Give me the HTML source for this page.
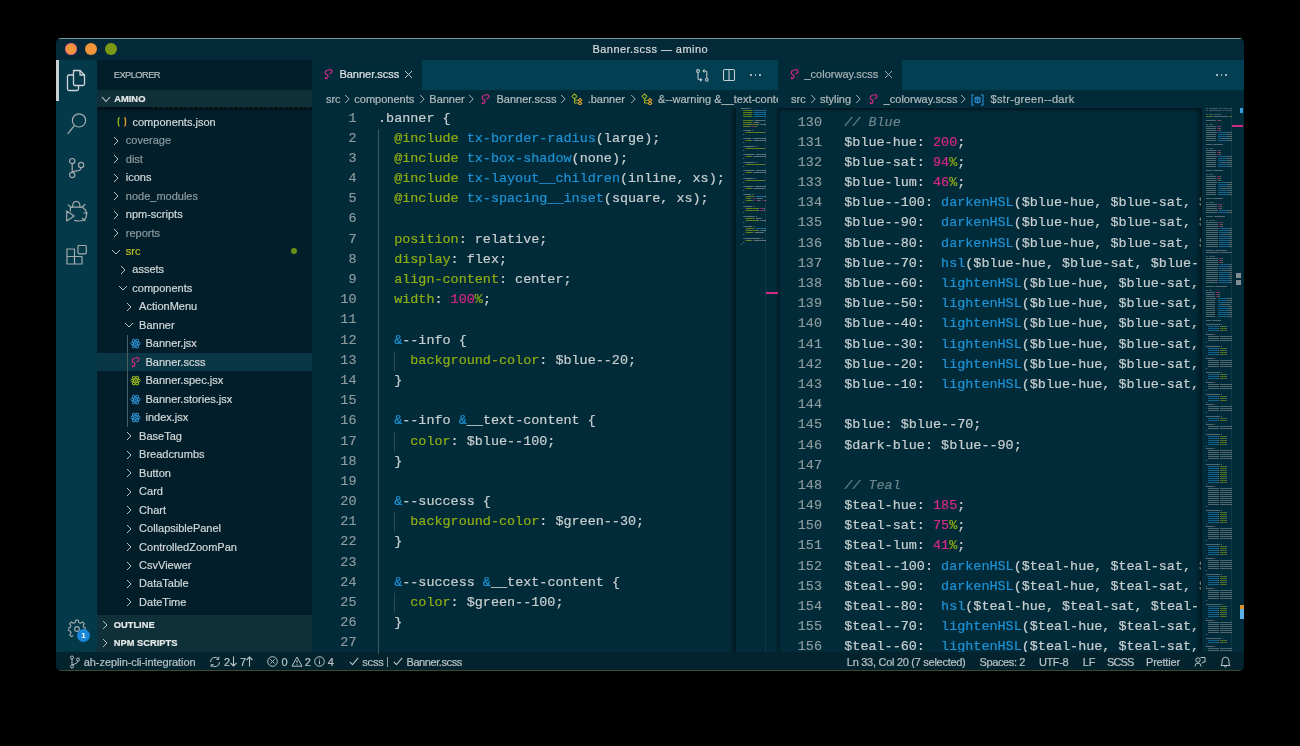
<!DOCTYPE html>
<html><head><meta charset="utf-8">
<style>
*{box-sizing:border-box;margin:0;padding:0}
html,body{width:1300px;height:746px;background:#000;overflow:hidden;font-family:"Liberation Sans",sans-serif}
.a{position:absolute}
#win{position:absolute;left:0;top:0;width:1300px;height:746px;clip-path:inset(38px 56px 75px 56px round 5px);will-change:transform}
.t{position:absolute;white-space:nowrap;font-size:11px;line-height:14px;-webkit-text-stroke:0.2px currentColor}
.code{position:absolute;font-family:"Liberation Mono",monospace;font-size:13.44px;line-height:20.19px;white-space:pre;color:#c8cfd0;-webkit-text-stroke:0.2px currentColor}
.ln{position:absolute;font-family:"Liberation Mono",monospace;font-size:13.44px;line-height:20.19px;white-space:pre;color:#8e9c9f;text-align:right;-webkit-text-stroke:0.15px currentColor}
.g{color:#8fae12}.b{color:#1e93d6}.m{color:#d22a84}.c{color:#6d858b;font-style:italic}
</style></head><body>
<div id="win">

<div class="a" style="left:56px;top:38px;width:1188px;height:633px;background:#042a39;"></div>
<div class="a" style="left:56px;top:60px;width:41px;height:592px;background:#04394a;"></div>
<div class="a" style="left:97px;top:60px;width:215px;height:592px;background:#021e2a;"></div>
<div class="a" style="left:312px;top:60px;width:466px;height:592px;background:#022b39;"></div>
<div class="a" style="left:778px;top:60px;width:466px;height:592px;background:#022b39;"></div>
<div class="a" style="left:56px;top:652px;width:1188px;height:19px;background:#03242f;"></div>
<div class="a" style="left:56px;top:38px;width:1188px;height:1px;background:#7a949b;"></div>
<div class="a" style="left:56px;top:670.4px;width:1188px;height:0.6000000000000227px;background:#3b4a2c;"></div>
<div class="a" style="left:64.5px;top:43px;width:12px;height:12px;border-radius:50%;background:#f0953a;box-shadow:inset 0 0 0 0.8px #d8508a"></div>
<div class="a" style="left:84.5px;top:43px;width:12px;height:12px;border-radius:50%;background:#f0953a"></div>
<div class="a" style="left:104.5px;top:43px;width:12px;height:12px;border-radius:50%;background:#7a9a13"></div>
<div class="t" style="left:592.5px;top:41.70px;color:#d8dcdc;font-size:11px;font-weight:normal;letter-spacing:0.45px;">Banner.scss — amino</div>
<div class="a" style="left:56px;top:60px;width:2.5px;height:41px;background:#c9d0d2;"></div>
<svg class="a" style="left:66px;top:69px" width="22" height="23" viewBox="0 0 22 23"><g fill="none" stroke="#d0d6d7" stroke-width="1.3" stroke-linejoin="round">
<path d="M7.5 1.5 H14 L18.5 6 V15 Q18.5 16.5 17 16.5 H9 Q7.5 16.5 7.5 15 V3 Q7.5 1.5 9 1.5 Z"/>
<path d="M7.5 6 H3 Q1.5 6 1.5 7.5 V20 Q1.5 21.5 3 21.5 H11 Q12.5 21.5 12.5 20 V16.5"/>
<path d="M14 1.5 V6 H18.5"/></g></svg>
<svg class="a" style="left:64px;top:110px" width="24" height="26" viewBox="0 0 24 26"><g fill="none" stroke="#a3abac" stroke-width="1.2">
<circle cx="15" cy="10.4" r="6.6"/><path d="M10.5 15.5 L3.7 23.8"/></g></svg>
<svg class="a" style="left:66px;top:154px" width="22" height="26" viewBox="0 0 22 26"><g fill="none" stroke="#a3abac" stroke-width="1.2">
<circle cx="6.2" cy="7.1" r="2.6"/><circle cx="6.2" cy="21" r="2.6"/><circle cx="15.1" cy="10.9" r="2.6"/>
<path d="M6.2 9.7 V18.4"/><path d="M15.1 13.5 Q15.1 16.5 11 16.8 Q6.5 17.2 6.2 18.4"/></g></svg>
<svg class="a" style="left:64px;top:198px" width="26" height="26" viewBox="0 0 26 26"><g fill="none" stroke="#a3abac" stroke-width="1.2" stroke-linejoin="round" stroke-linecap="round">
<path d="M8.6 9 Q8.6 3.3 12.3 3.3 Q16 3.3 16 9"/>
<path d="M6.4 12.9 V9.2 H18.2 Q22.5 11.5 22.5 16 Q22.5 21.5 18.7 22.5 Q15 23.5 10.6 22.4"/>
<path d="M2.7 12.9 L10.2 17.9 L2.7 23 Z"/>
<path d="M4.3 7 L7.3 9.4"/><path d="M20.9 6.5 L18 9.2"/><path d="M20 15 H23.3"/><path d="M18.3 20.2 L20.9 22.6"/>
</g></svg>
<svg class="a" style="left:64px;top:243px" width="26" height="24" viewBox="0 0 26 24"><g fill="none" stroke="#a3abac" stroke-width="1.2" stroke-linejoin="round">
<path d="M3 6 H10.5 V13.5 H18 V21 H3 Z"/><path d="M3 13.5 H10.5 V21"/>
<rect x="14" y="2.5" width="8.3" height="8.3" rx="1"/></g></svg>
<svg class="a" style="left:68px;top:619px" width="18" height="18" viewBox="0 0 24 24"><g fill="none" stroke="#a3abac" stroke-width="1.5" stroke-linejoin="round">
<path d="M10.3 1.5 H13.7 L14.3 4.6 L16.8 5.7 L19.4 3.9 L21.9 6.4 L20.1 9 L21.2 11.5 L24 12.1 V15.5"/>
<path d="M10.3 1.5 L9.7 4.6 L7.2 5.7 L4.6 3.9 L2.1 6.4 L3.9 9 L2.8 11.5 L0.3 12 V15.4 L3 16 L4 18.5 L2.2 21.1 L4.7 23.6 L7.3 21.8"/>
<circle cx="12" cy="13.3" r="3.2"/></g></svg>
<div class="a" style="left:77px;top:629px;width:13px;height:13px;border-radius:50%;background:#1a88d6;color:#fff;font-size:8px;font-weight:bold;line-height:13px;text-align:center">1</div>
<div class="t" style="left:113.8px;top:67.90px;color:#b3bdbe;font-size:9.3px;font-weight:normal;letter-spacing:-0.55px;">EXPLORER</div>
<div class="a" style="left:97px;top:90px;width:215px;height:17px;background:#0f2f39;"></div>
<div class="a" style="left:97px;top:107px;width:215px;height:4px;background:linear-gradient(#00131b 0,#00141c 55%,rgba(2,30,42,0))"></div>
<div class="a" style="left:153px;top:106.5px;width:159px;height:1px;background:repeating-linear-gradient(to right,rgba(140,170,30,0.35) 0 1px,transparent 1px 5px)"></div>
<svg class="a" style="left:100.5px;top:96px" width="10" height="7" viewBox="0 0 10 7"><path d="M1 1 L5 5.5 L9 1" fill="none" stroke="#c5cccd" stroke-width="1.1"/></svg>
<div class="t" style="left:114.2px;top:91.70px;color:#e4e8e8;font-size:9.4px;font-weight:bold;letter-spacing:0px;">AMINO</div>
<svg class="a" style="left:117px;top:117.0px" width="10" height="10" viewBox="0 0 10 10"><g fill="none" stroke-width="1.4"><path d="M2.6 0.8 Q1.4 0.8 1.4 2.2 V3.7 Q1.4 4.9 0.5 4.9 Q1.4 4.9 1.4 6.1 V7.6 Q1.4 9 2.6 9" stroke="#8db51a"/><path d="M7.2 0.8 Q8.4 0.8 8.4 2.2 V3.7 Q8.4 4.9 9.3 4.9 Q8.4 4.9 8.4 6.1 V7.6 Q8.4 9 7.2 9" stroke="#e09a30"/></g></svg>
<div class="t" style="left:132.5px;top:114.70px;color:#d3d9da;font-size:11px;font-weight:normal;letter-spacing:0px;">components.json</div>
<svg class="a" style="left:113.0px;top:135.7px" width="7" height="10" viewBox="0 0 7 10"><path d="M1 1 L5 5 L1 9" fill="none" stroke="#c5cccd" stroke-width="0.95"/></svg>
<div class="t" style="left:125.8px;top:133.17px;color:#8c9b9f;font-size:11px;font-weight:normal;letter-spacing:0px;">coverage</div>
<svg class="a" style="left:113.0px;top:154.1px" width="7" height="10" viewBox="0 0 7 10"><path d="M1 1 L5 5 L1 9" fill="none" stroke="#c5cccd" stroke-width="0.95"/></svg>
<div class="t" style="left:125.8px;top:151.64px;color:#8c9b9f;font-size:11px;font-weight:normal;letter-spacing:0px;">dist</div>
<svg class="a" style="left:113.0px;top:172.6px" width="7" height="10" viewBox="0 0 7 10"><path d="M1 1 L5 5 L1 9" fill="none" stroke="#c5cccd" stroke-width="0.95"/></svg>
<div class="t" style="left:125.8px;top:170.11px;color:#d3d9da;font-size:11px;font-weight:normal;letter-spacing:0px;">icons</div>
<svg class="a" style="left:113.0px;top:191.1px" width="7" height="10" viewBox="0 0 7 10"><path d="M1 1 L5 5 L1 9" fill="none" stroke="#c5cccd" stroke-width="0.95"/></svg>
<div class="t" style="left:125.8px;top:188.58px;color:#8c9b9f;font-size:11px;font-weight:normal;letter-spacing:0px;">node_modules</div>
<svg class="a" style="left:113.0px;top:209.6px" width="7" height="10" viewBox="0 0 7 10"><path d="M1 1 L5 5 L1 9" fill="none" stroke="#c5cccd" stroke-width="0.95"/></svg>
<div class="t" style="left:125.8px;top:207.05px;color:#d3d9da;font-size:11px;font-weight:normal;letter-spacing:0px;">npm-scripts</div>
<svg class="a" style="left:113.0px;top:228.0px" width="7" height="10" viewBox="0 0 7 10"><path d="M1 1 L5 5 L1 9" fill="none" stroke="#c5cccd" stroke-width="0.95"/></svg>
<div class="t" style="left:125.8px;top:225.52px;color:#8c9b9f;font-size:11px;font-weight:normal;letter-spacing:0px;">reports</div>
<svg class="a" style="left:110.5px;top:248.5px" width="10" height="7" viewBox="0 0 10 7"><path d="M1 1 L5 5 L9 1" fill="none" stroke="#c5cccd" stroke-width="0.95"/></svg>
<div class="t" style="left:125.8px;top:243.99px;color:#c2bf20;font-size:11px;font-weight:normal;letter-spacing:0px;">src</div>
<svg class="a" style="left:119.8px;top:265.0px" width="7" height="10" viewBox="0 0 7 10"><path d="M1 1 L5 5 L1 9" fill="none" stroke="#c5cccd" stroke-width="0.95"/></svg>
<div class="t" style="left:132.3px;top:262.46px;color:#d3d9da;font-size:11px;font-weight:normal;letter-spacing:0px;">assets</div>
<svg class="a" style="left:117.5px;top:285.4px" width="10" height="7" viewBox="0 0 10 7"><path d="M1 1 L5 5 L9 1" fill="none" stroke="#c5cccd" stroke-width="0.95"/></svg>
<div class="t" style="left:132.3px;top:280.93px;color:#d3d9da;font-size:11px;font-weight:normal;letter-spacing:0px;">components</div>
<svg class="a" style="left:126.3px;top:301.9px" width="7" height="10" viewBox="0 0 7 10"><path d="M1 1 L5 5 L1 9" fill="none" stroke="#c5cccd" stroke-width="0.95"/></svg>
<div class="t" style="left:139.1px;top:299.40px;color:#d3d9da;font-size:11px;font-weight:normal;letter-spacing:0px;">ActionMenu</div>
<svg class="a" style="left:124.2px;top:322.4px" width="10" height="7" viewBox="0 0 10 7"><path d="M1 1 L5 5 L9 1" fill="none" stroke="#c5cccd" stroke-width="0.95"/></svg>
<div class="t" style="left:139.1px;top:317.87px;color:#d3d9da;font-size:11px;font-weight:normal;letter-spacing:0px;">Banner</div>
<svg class="a" style="left:130.0px;top:338.3px" width="11" height="11" viewBox="0 0 11 11"><g fill="none" stroke="#2f8fcf" stroke-width="1"><ellipse cx="5.5" cy="5.5" rx="4.8" ry="1.9"/><ellipse cx="5.5" cy="5.5" rx="4.8" ry="1.9" transform="rotate(60 5.5 5.5)"/><ellipse cx="5.5" cy="5.5" rx="4.8" ry="1.9" transform="rotate(120 5.5 5.5)"/></g><circle cx="5.5" cy="5.5" r="1" fill="#2f8fcf"/></svg>
<div class="t" style="left:145.5px;top:336.34px;color:#d3d9da;font-size:11px;font-weight:normal;letter-spacing:0px;">Banner.jsx</div>
<div class="a" style="left:97px;top:353.4px;width:215px;height:17.80000000000001px;background:#0a3746;"></div>
<svg class="a" style="left:130.5px;top:356.8px" width="10" height="11" viewBox="0 0 10 11"><path d="M5.8 4.6 C7.6 4.2 8.6 2.4 7.6 1.3 C6.6 0.3 3.8 0.6 2.3 1.8 C0.8 3 0.9 4.6 2.3 5.4 C3.4 6 4.4 6.3 4 7.6 C3.7 8.7 2.6 9.8 1.8 9.7 C1.1 9.6 1.2 8.9 1.6 8.6" fill="none" stroke="#d22a84" stroke-width="1.2" stroke-linecap="round"/></svg>
<div class="t" style="left:145.5px;top:354.81px;color:#d3d9da;font-size:11px;font-weight:normal;letter-spacing:0px;">Banner.scss</div>
<svg class="a" style="left:130.0px;top:375.3px" width="11" height="11" viewBox="0 0 11 11"><g fill="none" stroke="#9cb51e" stroke-width="1"><ellipse cx="5.5" cy="5.5" rx="4.8" ry="1.9"/><ellipse cx="5.5" cy="5.5" rx="4.8" ry="1.9" transform="rotate(60 5.5 5.5)"/><ellipse cx="5.5" cy="5.5" rx="4.8" ry="1.9" transform="rotate(120 5.5 5.5)"/></g><circle cx="5.5" cy="5.5" r="1" fill="#9cb51e"/></svg>
<div class="t" style="left:145.5px;top:373.28px;color:#d3d9da;font-size:11px;font-weight:normal;letter-spacing:0px;">Banner.spec.jsx</div>
<svg class="a" style="left:130.0px;top:393.7px" width="11" height="11" viewBox="0 0 11 11"><g fill="none" stroke="#2f8fcf" stroke-width="1"><ellipse cx="5.5" cy="5.5" rx="4.8" ry="1.9"/><ellipse cx="5.5" cy="5.5" rx="4.8" ry="1.9" transform="rotate(60 5.5 5.5)"/><ellipse cx="5.5" cy="5.5" rx="4.8" ry="1.9" transform="rotate(120 5.5 5.5)"/></g><circle cx="5.5" cy="5.5" r="1" fill="#2f8fcf"/></svg>
<div class="t" style="left:145.5px;top:391.75px;color:#d3d9da;font-size:11px;font-weight:normal;letter-spacing:0px;">Banner.stories.jsx</div>
<svg class="a" style="left:130.0px;top:412.2px" width="11" height="11" viewBox="0 0 11 11"><g fill="none" stroke="#2f8fcf" stroke-width="1"><ellipse cx="5.5" cy="5.5" rx="4.8" ry="1.9"/><ellipse cx="5.5" cy="5.5" rx="4.8" ry="1.9" transform="rotate(60 5.5 5.5)"/><ellipse cx="5.5" cy="5.5" rx="4.8" ry="1.9" transform="rotate(120 5.5 5.5)"/></g><circle cx="5.5" cy="5.5" r="1" fill="#2f8fcf"/></svg>
<div class="t" style="left:145.5px;top:410.22px;color:#d3d9da;font-size:11px;font-weight:normal;letter-spacing:0px;">index.jsx</div>
<svg class="a" style="left:126.3px;top:431.2px" width="7" height="10" viewBox="0 0 7 10"><path d="M1 1 L5 5 L1 9" fill="none" stroke="#c5cccd" stroke-width="0.95"/></svg>
<div class="t" style="left:139.1px;top:428.69px;color:#d3d9da;font-size:11px;font-weight:normal;letter-spacing:0px;">BaseTag</div>
<svg class="a" style="left:126.3px;top:449.7px" width="7" height="10" viewBox="0 0 7 10"><path d="M1 1 L5 5 L1 9" fill="none" stroke="#c5cccd" stroke-width="0.95"/></svg>
<div class="t" style="left:139.1px;top:447.16px;color:#d3d9da;font-size:11px;font-weight:normal;letter-spacing:0px;">Breadcrumbs</div>
<svg class="a" style="left:126.3px;top:468.1px" width="7" height="10" viewBox="0 0 7 10"><path d="M1 1 L5 5 L1 9" fill="none" stroke="#c5cccd" stroke-width="0.95"/></svg>
<div class="t" style="left:139.1px;top:465.63px;color:#d3d9da;font-size:11px;font-weight:normal;letter-spacing:0px;">Button</div>
<svg class="a" style="left:126.3px;top:486.6px" width="7" height="10" viewBox="0 0 7 10"><path d="M1 1 L5 5 L1 9" fill="none" stroke="#c5cccd" stroke-width="0.95"/></svg>
<div class="t" style="left:139.1px;top:484.10px;color:#d3d9da;font-size:11px;font-weight:normal;letter-spacing:0px;">Card</div>
<svg class="a" style="left:126.3px;top:505.1px" width="7" height="10" viewBox="0 0 7 10"><path d="M1 1 L5 5 L1 9" fill="none" stroke="#c5cccd" stroke-width="0.95"/></svg>
<div class="t" style="left:139.1px;top:502.57px;color:#d3d9da;font-size:11px;font-weight:normal;letter-spacing:0px;">Chart</div>
<svg class="a" style="left:126.3px;top:523.5px" width="7" height="10" viewBox="0 0 7 10"><path d="M1 1 L5 5 L1 9" fill="none" stroke="#c5cccd" stroke-width="0.95"/></svg>
<div class="t" style="left:139.1px;top:521.04px;color:#d3d9da;font-size:11px;font-weight:normal;letter-spacing:0px;">CollapsiblePanel</div>
<svg class="a" style="left:126.3px;top:542.0px" width="7" height="10" viewBox="0 0 7 10"><path d="M1 1 L5 5 L1 9" fill="none" stroke="#c5cccd" stroke-width="0.95"/></svg>
<div class="t" style="left:139.1px;top:539.51px;color:#d3d9da;font-size:11px;font-weight:normal;letter-spacing:0px;">ControlledZoomPan</div>
<svg class="a" style="left:126.3px;top:560.5px" width="7" height="10" viewBox="0 0 7 10"><path d="M1 1 L5 5 L1 9" fill="none" stroke="#c5cccd" stroke-width="0.95"/></svg>
<div class="t" style="left:139.1px;top:557.98px;color:#d3d9da;font-size:11px;font-weight:normal;letter-spacing:0px;">CsvViewer</div>
<svg class="a" style="left:126.3px;top:579.0px" width="7" height="10" viewBox="0 0 7 10"><path d="M1 1 L5 5 L1 9" fill="none" stroke="#c5cccd" stroke-width="0.95"/></svg>
<div class="t" style="left:139.1px;top:576.45px;color:#d3d9da;font-size:11px;font-weight:normal;letter-spacing:0px;">DataTable</div>
<svg class="a" style="left:126.3px;top:597.4px" width="7" height="10" viewBox="0 0 7 10"><path d="M1 1 L5 5 L1 9" fill="none" stroke="#c5cccd" stroke-width="0.95"/></svg>
<div class="t" style="left:139.1px;top:594.92px;color:#d3d9da;font-size:11px;font-weight:normal;letter-spacing:0px;">DateTime</div>
<div class="a" style="left:127px;top:335px;width:1px;height:92px;background:#4a5f64;"></div>
<div class="a" style="left:291px;top:248px;width:6px;height:6px;border-radius:50%;background:#6b8f1a"></div>
<div class="a" style="left:97px;top:615px;width:215px;height:37px;background:#0f2f39;"></div>
<svg class="a" style="left:102.0px;top:619.6px" width="7" height="10" viewBox="0 0 7 10"><path d="M1 1 L5 5 L1 9" fill="none" stroke="#c5cccd" stroke-width="0.95"/></svg>
<div class="t" style="left:113.8px;top:617.80px;color:#e4e8e8;font-size:9.3px;font-weight:bold;letter-spacing:0px;">OUTLINE</div>
<svg class="a" style="left:102.0px;top:638.0px" width="7" height="10" viewBox="0 0 7 10"><path d="M1 1 L5 5 L1 9" fill="none" stroke="#c5cccd" stroke-width="0.95"/></svg>
<div class="t" style="left:113.8px;top:636.20px;color:#e4e8e8;font-size:9.3px;font-weight:bold;letter-spacing:0px;">NPM SCRIPTS</div>
<div class="a" style="left:422px;top:60px;width:356px;height:29.5px;background:#023f52;"></div>
<svg class="a" style="left:323.5px;top:69.2px" width="10" height="11" viewBox="0 0 10 11"><path d="M5.8 4.6 C7.6 4.2 8.6 2.4 7.6 1.3 C6.6 0.3 3.8 0.6 2.3 1.8 C0.8 3 0.9 4.6 2.3 5.4 C3.4 6 4.4 6.3 4 7.6 C3.7 8.7 2.6 9.8 1.8 9.7 C1.1 9.6 1.2 8.9 1.6 8.6" fill="none" stroke="#d22a84" stroke-width="1.2" stroke-linecap="round"/></svg>
<div class="t" style="left:339.4px;top:67.20px;color:#dfe3e3;font-size:11px;font-weight:normal;letter-spacing:0px;">Banner.scss</div>
<svg class="a" style="left:404.0px;top:70.2px" width="9" height="9" viewBox="0 0 9 9"><path d="M1 1 L8 8 M8 1 L1 8" fill="none" stroke="#d0d6d7" stroke-width="0.9"/></svg>
<svg class="a" style="left:695.5px;top:69px" width="13" height="13" viewBox="0 0 13 13"><g fill="none" stroke="#c5cccd" stroke-width="1.05">
<circle cx="2" cy="2" r="1.4"/><circle cx="10.8" cy="10.8" r="1.4"/><path d="M2 3.4 V9.6 Q2 10.8 3.2 10.8 H5.8 M4.3 9.3 L5.8 10.8 L4.3 12.3"/><path d="M10.8 9.4 V3.2 Q10.8 2 9.6 2 H7 M8.5 0.5 L7 2 L8.5 3.5"/></g></svg>
<svg class="a" style="left:722px;top:67.5px" width="14" height="14" viewBox="0 0 14 14"><g fill="none" stroke="#c5cccd" stroke-width="1.1">
<rect x="1.5" y="1.5" width="11" height="11" rx="1.3"/><path d="M7 1.5 V12.5"/></g></svg>
<div class="a" style="left:750px;top:74px;width:1.6000000000000227px;height:1.5999999999999943px;background:#c5cccd;border-radius:50%"></div>
<div class="a" style="left:754.5px;top:74px;width:1.6000000000000227px;height:1.5999999999999943px;background:#c5cccd;border-radius:50%"></div>
<div class="a" style="left:759px;top:74px;width:1.6000000000000227px;height:1.5999999999999943px;background:#c5cccd;border-radius:50%"></div>
<div class="t" style="left:325.9px;top:91.80px;color:#b3bdbf;font-size:11px;font-weight:normal;letter-spacing:0px;">src</div>
<svg class="a" style="left:344.0px;top:94.3px" width="7" height="10" viewBox="0 0 7 10"><path d="M1.2 1 L5.2 5 L1.2 9" fill="none" stroke="#a9b3b5" stroke-width="1"/></svg>
<div class="t" style="left:354.3px;top:91.80px;color:#b3bdbf;font-size:11px;font-weight:normal;letter-spacing:0px;">components</div>
<svg class="a" style="left:418.5px;top:94.3px" width="7" height="10" viewBox="0 0 7 10"><path d="M1.2 1 L5.2 5 L1.2 9" fill="none" stroke="#a9b3b5" stroke-width="1"/></svg>
<div class="t" style="left:429.3px;top:91.80px;color:#b3bdbf;font-size:11px;font-weight:normal;letter-spacing:0px;">Banner</div>
<svg class="a" style="left:467.5px;top:94.3px" width="7" height="10" viewBox="0 0 7 10"><path d="M1.2 1 L5.2 5 L1.2 9" fill="none" stroke="#a9b3b5" stroke-width="1"/></svg>
<svg class="a" style="left:481.0px;top:93.8px" width="10" height="11" viewBox="0 0 10 11"><path d="M5.8 4.6 C7.6 4.2 8.6 2.4 7.6 1.3 C6.6 0.3 3.8 0.6 2.3 1.8 C0.8 3 0.9 4.6 2.3 5.4 C3.4 6 4.4 6.3 4 7.6 C3.7 8.7 2.6 9.8 1.8 9.7 C1.1 9.6 1.2 8.9 1.6 8.6" fill="none" stroke="#d22a84" stroke-width="1.2" stroke-linecap="round"/></svg>
<div class="t" style="left:496.5px;top:91.80px;color:#b3bdbf;font-size:11px;font-weight:normal;letter-spacing:0px;">Banner.scss</div>
<svg class="a" style="left:560.0px;top:94.3px" width="7" height="10" viewBox="0 0 7 10"><path d="M1.2 1 L5.2 5 L1.2 9" fill="none" stroke="#a9b3b5" stroke-width="1"/></svg>
<svg class="a" style="left:571.0px;top:93.3px" width="12" height="12" viewBox="0 0 12 12"><g fill="none" stroke-width="1.05" stroke-linejoin="round"><path d="M3.5 0.8 L6 3.3 L3.5 5.8 L1 3.3 Z M3.5 5.8 V10 H6.8 M3.5 7.3 H6.8" stroke="#9fb324"/><path d="M9 5.3 L10.8 7.1 L9 8.9 L7.2 7.1 Z M9 8.6 L10.8 10.4 L9 12.2 L7.2 10.4 Z" stroke="#e0a030"/></g></svg>
<div class="t" style="left:587.7px;top:91.80px;color:#b3bdbf;font-size:11px;font-weight:normal;letter-spacing:0px;">.banner</div>
<svg class="a" style="left:629.5px;top:94.3px" width="7" height="10" viewBox="0 0 7 10"><path d="M1.2 1 L5.2 5 L1.2 9" fill="none" stroke="#a9b3b5" stroke-width="1"/></svg>
<svg class="a" style="left:640.5px;top:93.3px" width="12" height="12" viewBox="0 0 12 12"><g fill="none" stroke-width="1.05" stroke-linejoin="round"><path d="M3.5 0.8 L6 3.3 L3.5 5.8 L1 3.3 Z M3.5 5.8 V10 H6.8 M3.5 7.3 H6.8" stroke="#9fb324"/><path d="M9 5.3 L10.8 7.1 L9 8.9 L7.2 7.1 Z M9 8.6 L10.8 10.4 L9 12.2 L7.2 10.4 Z" stroke="#e0a030"/></g></svg>
<div class="a" style="left:312px;top:89px;width:466px;height:19px;overflow:hidden">
<div class="t" style="left:345.9px;top:2.80px;color:#b3bdbf;font-size:11px;font-weight:normal;letter-spacing:0px;">&amp;--warning &amp;__text-content</div>
</div>
<div class="a" style="left:902px;top:60px;width:342px;height:29.5px;background:#023f52;"></div>
<svg class="a" style="left:789.5px;top:69.2px" width="10" height="11" viewBox="0 0 10 11"><path d="M5.8 4.6 C7.6 4.2 8.6 2.4 7.6 1.3 C6.6 0.3 3.8 0.6 2.3 1.8 C0.8 3 0.9 4.6 2.3 5.4 C3.4 6 4.4 6.3 4 7.6 C3.7 8.7 2.6 9.8 1.8 9.7 C1.1 9.6 1.2 8.9 1.6 8.6" fill="none" stroke="#d22a84" stroke-width="1.2" stroke-linecap="round"/></svg>
<div class="t" style="left:804.5px;top:67.20px;color:#a9b4b6;font-size:11px;font-weight:normal;letter-spacing:0px;">_colorway.scss</div>
<svg class="a" style="left:884.0px;top:70.2px" width="9" height="9" viewBox="0 0 9 9"><path d="M1 1 L8 8 M8 1 L1 8" fill="none" stroke="#a9b4b6" stroke-width="0.9"/></svg>
<div class="a" style="left:1216px;top:74px;width:1.599999999999909px;height:1.5999999999999943px;background:#c5cccd;border-radius:50%"></div>
<div class="a" style="left:1220.5px;top:74px;width:1.599999999999909px;height:1.5999999999999943px;background:#c5cccd;border-radius:50%"></div>
<div class="a" style="left:1225px;top:74px;width:1.599999999999909px;height:1.5999999999999943px;background:#c5cccd;border-radius:50%"></div>
<div class="t" style="left:791px;top:91.80px;color:#b3bdbf;font-size:11px;font-weight:normal;letter-spacing:0px;">src</div>
<svg class="a" style="left:809.5px;top:94.3px" width="7" height="10" viewBox="0 0 7 10"><path d="M1.2 1 L5.2 5 L1.2 9" fill="none" stroke="#a9b3b5" stroke-width="1"/></svg>
<div class="t" style="left:819.9px;top:91.80px;color:#b3bdbf;font-size:11px;font-weight:normal;letter-spacing:0px;">styling</div>
<svg class="a" style="left:855.0px;top:94.3px" width="7" height="10" viewBox="0 0 7 10"><path d="M1.2 1 L5.2 5 L1.2 9" fill="none" stroke="#a9b3b5" stroke-width="1"/></svg>
<svg class="a" style="left:869.0px;top:93.8px" width="10" height="11" viewBox="0 0 10 11"><path d="M5.8 4.6 C7.6 4.2 8.6 2.4 7.6 1.3 C6.6 0.3 3.8 0.6 2.3 1.8 C0.8 3 0.9 4.6 2.3 5.4 C3.4 6 4.4 6.3 4 7.6 C3.7 8.7 2.6 9.8 1.8 9.7 C1.1 9.6 1.2 8.9 1.6 8.6" fill="none" stroke="#d22a84" stroke-width="1.2" stroke-linecap="round"/></svg>
<div class="t" style="left:883.7px;top:91.80px;color:#b3bdbf;font-size:11px;font-weight:normal;letter-spacing:0px;">_colorway.scss</div>
<svg class="a" style="left:960.0px;top:94.3px" width="7" height="10" viewBox="0 0 7 10"><path d="M1.2 1 L5.2 5 L1.2 9" fill="none" stroke="#a9b3b5" stroke-width="1"/></svg>
<svg class="a" style="left:971px;top:93.5px" width="13" height="12" viewBox="0 0 13 12"><g fill="none" stroke="#2a90d8" stroke-width="1.1"><path d="M3 1 H1 V11 H3 M10 1 H12 V11 H10"/><path d="M4 4 L6.5 2.8 L9 4 V7.8 L6.5 9 L4 7.8 Z M4 4 L6.5 5.3 L9 4 M6.5 5.3 V9"/></g></svg>
<div class="t" style="left:990.5px;top:91.80px;color:#b3bdbf;font-size:11px;font-weight:normal;letter-spacing:0.33px;">$str-green--dark</div>
<div class="ln" style="left:296.5px;top:108.5px;width:60px">1
2
3
4
5
6
7
8
9
10
11
12
13
14
15
16
17
18
19
20
21
22
23
24
25
26
27</div>
<div class="a" style="left:376px;top:108px;width:359px;height:544px;overflow:hidden">
<div class="code" style="left:2px;top:0.5px">.banner {
  <span class="g">@include</span> <span class="b">tx-border-radius</span>(large);
  <span class="g">@include</span> <span class="b">tx-box-shadow</span>(none);
  <span class="g">@include</span> <span class="b">tx-layout__children</span>(inline, xs);
  <span class="g">@include</span> <span class="b">tx-spacing__inset</span>(square, xs);

  <span class="g">position</span>: relative;
  <span class="g">display</span>: flex;
  <span class="g">align-content</span>: center;
  <span class="g">width</span>: <span class="m">100</span><span class="g">%</span>;

  <span class="b">&amp;</span>--info {
    <span class="g">background-color</span>: $blue--20;
  }

  <span class="b">&amp;</span>--info <span class="b">&amp;</span>__text-content {
    <span class="g">color</span>: $blue--100;
  }

  <span class="b">&amp;</span>--success {
    <span class="g">background-color</span>: $green--30;
  }

  <span class="b">&amp;</span>--success <span class="b">&amp;</span>__text-content {
    <span class="g">color</span>: $green--100;
  }
</div>
</div>
<div class="a" style="left:378px;top:128.69px;width:1px;height:524.94px;background:#3d5a61;"></div>
<div class="a" style="left:394px;top:350.78000000000003px;width:1px;height:20.189999999999998px;background:#2f4b52;"></div>
<div class="a" style="left:394px;top:431.54px;width:1px;height:20.189999999999998px;background:#2f4b52;"></div>
<div class="a" style="left:394px;top:512.3px;width:1px;height:20.190000000000055px;background:#2f4b52;"></div>
<div class="a" style="left:394px;top:593.0600000000001px;width:1px;height:20.18999999999994px;background:#2f4b52;"></div>
<div class="ln" style="left:762px;top:112.5px;width:60px">130
131
132
133
134
135
136
137
138
139
140
141
142
143
144
145
146
147
148
149
150
151
152
153
154
155
156</div>
<div class="a" style="left:842.3px;top:108px;width:358.70000000000005px;height:544px;overflow:hidden">
<div class="code" style="left:2px;top:4.5px"><span class="c">// Blue</span>
$blue-hue: <span class="m">200</span>;
$blue-sat: <span class="m">94</span><span class="g">%</span>;
$blue-lum: <span class="m">46</span><span class="g">%</span>;
$blue--100: <span class="b">darkenHSL</span>($blue-hue, $blue-sat, $blue-lum, 40%);
$blue--90:  <span class="b">darkenHSL</span>($blue-hue, $blue-sat, $blue-lum, 30%);
$blue--80:  <span class="b">darkenHSL</span>($blue-hue, $blue-sat, $blue-lum, 20%);
$blue--70:  <span class="b">hsl</span>($blue-hue, $blue-sat, $blue-lum);
$blue--60:  <span class="b">lightenHSL</span>($blue-hue, $blue-sat, $blue-lum, 10%);
$blue--50:  <span class="b">lightenHSL</span>($blue-hue, $blue-sat, $blue-lum, 20%);
$blue--40:  <span class="b">lightenHSL</span>($blue-hue, $blue-sat, $blue-lum, 30%);
$blue--30:  <span class="b">lightenHSL</span>($blue-hue, $blue-sat, $blue-lum, 40%);
$blue--20:  <span class="b">lightenHSL</span>($blue-hue, $blue-sat, $blue-lum, 50%);
$blue--10:  <span class="b">lightenHSL</span>($blue-hue, $blue-sat, $blue-lum, 60%);

$blue: $blue--70;
$dark-blue: $blue--90;

<span class="c">// Teal</span>
$teal-hue: <span class="m">185</span>;
$teal-sat: <span class="m">75</span><span class="g">%</span>;
$teal-lum: <span class="m">41</span><span class="g">%</span>;
$teal--100: <span class="b">darkenHSL</span>($teal-hue, $teal-sat, $teal-lum, 40%);
$teal--90:  <span class="b">darkenHSL</span>($teal-hue, $teal-sat, $teal-lum, 30%);
$teal--80:  <span class="b">hsl</span>($teal-hue, $teal-sat, $teal-lum);
$teal--70:  <span class="b">lightenHSL</span>($teal-hue, $teal-sat, $teal-lum, 10%);
$teal--60:  <span class="b">lightenHSL</span>($teal-hue, $teal-sat, $teal-lum, 20%);</div>
</div>
<div class="a" style="left:778px;top:108px;width:423px;height:4px;background:linear-gradient(#01161e,rgba(3,42,55,0))"></div>
<div class="a" style="left:729px;top:108px;width:6.5px;height:544px;background:linear-gradient(to right,rgba(0,10,15,0),rgba(0,10,15,0.55))"></div>
<div class="a" style="left:735px;top:108px;width:1px;height:544px;background:#011a22;"></div>
<div class="a" style="left:765.3px;top:108px;width:0.8000000000000682px;height:544px;background:#0d3a45;"></div>
<div class="a" style="left:775.5px;top:108px;width:5px;height:544px;background:linear-gradient(to right,rgba(0,10,15,0),rgba(0,10,15,0.5),rgba(0,10,15,0))"></div>
<div class="a" style="left:778px;top:108px;width:1px;height:544px;background:#01202a;"></div>
<div class="a" style="left:1195px;top:108px;width:6.5px;height:544px;background:linear-gradient(to right,rgba(0,10,15,0),rgba(0,10,15,0.55))"></div>
<div class="a" style="left:1201px;top:108px;width:1px;height:544px;background:#011a22;"></div>
<div class="a" style="left:1231.3px;top:108px;width:0.7999999999999545px;height:544px;background:#0d3a45;"></div>
<svg class="a" style="left:69.4px;top:655px" width="12" height="14" viewBox="0 0 12 14"><g fill="none" stroke="#b9c3c5" stroke-width="1"><circle cx="3" cy="2.5" r="1.5"/><circle cx="3" cy="11.5" r="1.5"/><circle cx="9" cy="4.5" r="1.5"/><path d="M3 4 V10 M9 6 Q9 8.5 3 10"/></g></svg>
<div class="t" style="left:83.8px;top:654.60px;color:#b9c3c5;font-size:11px;font-weight:normal;letter-spacing:-0.08px;">ah-zeplin-cli-integration</div>
<svg class="a" style="left:209px;top:656px" width="12" height="12" viewBox="0 0 12 12"><g fill="none" stroke="#b9c3c5" stroke-width="1"><path d="M1.5 6 A4.5 4.5 0 0 1 9.5 3 M10.5 6 A4.5 4.5 0 0 1 2.5 9"/><path d="M9.8 0.8 V3.3 H7.3 M2.2 11.2 V8.7 H4.7"/></g></svg>
<div class="t" style="left:224px;top:654.60px;color:#b9c3c5;font-size:11px;font-weight:normal;letter-spacing:0px;">2</div>
<div class="t" style="left:240px;top:654.60px;color:#b9c3c5;font-size:11px;font-weight:normal;letter-spacing:0px;">7</div>
<svg class="a" style="left:230px;top:655px" width="24" height="13" viewBox="0 0 24 13"><g fill="none" stroke="#b9c3c5" stroke-width="1.1"><path d="M3.5 1.5 V11 M0.5 8 L3.5 11 L6.5 8"/><path d="M19.5 2 V11.5 M16.5 5 L19.5 2 L22.5 5"/></g></svg>
<svg class="a" style="left:267px;top:656px" width="11" height="11" viewBox="0 0 11 11"><g fill="none" stroke="#b9c3c5" stroke-width="1"><circle cx="5.5" cy="5.5" r="4.8"/><path d="M3.5 3.5 L7.5 7.5 M7.5 3.5 L3.5 7.5"/></g></svg>
<div class="t" style="left:281.5px;top:654.60px;color:#b9c3c5;font-size:11px;font-weight:normal;letter-spacing:0px;">0</div>
<svg class="a" style="left:290.5px;top:655.5px" width="12" height="11" viewBox="0 0 12 11"><g fill="none" stroke="#b9c3c5" stroke-width="1"><path d="M6 1 L11 10.2 H1 Z M6 4 V7.2 M6 8.2 V9"/></g></svg>
<div class="t" style="left:304.8px;top:654.60px;color:#b9c3c5;font-size:11px;font-weight:normal;letter-spacing:0px;">2</div>
<svg class="a" style="left:313.5px;top:656px" width="11" height="11" viewBox="0 0 11 11"><g fill="none" stroke="#b9c3c5" stroke-width="1"><circle cx="5.5" cy="5.5" r="4.8"/><path d="M5.5 4.5 V8.3 M5.5 2.6 V3.5"/></g></svg>
<div class="t" style="left:327.8px;top:654.60px;color:#b9c3c5;font-size:11px;font-weight:normal;letter-spacing:0px;">4</div>
<svg class="a" style="left:348.5px;top:656.5px" width="10" height="9" viewBox="0 0 10 9"><path d="M0.8 4.8 L3.5 7.6 L9.2 0.8" fill="none" stroke="#b9c3c5" stroke-width="1.05"/></svg>
<div class="t" style="left:362.3px;top:654.60px;color:#b9c3c5;font-size:11px;font-weight:normal;letter-spacing:-0.2px;">scss</div>
<div class="a" style="left:386.7px;top:657px;width:0.9000000000000341px;height:9.5px;background:#8c999c;"></div>
<svg class="a" style="left:392.5px;top:656.5px" width="10" height="9" viewBox="0 0 10 9"><path d="M0.8 4.8 L3.5 7.6 L9.2 0.8" fill="none" stroke="#b9c3c5" stroke-width="1.05"/></svg>
<div class="t" style="left:406.5px;top:654.60px;color:#b9c3c5;font-size:11px;font-weight:normal;letter-spacing:-0.42px;">Banner.scss</div>
<div class="t" style="left:846.8px;top:654.60px;color:#b9c3c5;font-size:11px;font-weight:normal;letter-spacing:-0.28px;">Ln 33, Col 20 (7 selected)</div>
<div class="t" style="left:979.6px;top:654.60px;color:#b9c3c5;font-size:11px;font-weight:normal;letter-spacing:-0.4px;">Spaces: 2</div>
<div class="t" style="left:1039px;top:654.60px;color:#b9c3c5;font-size:11px;font-weight:normal;letter-spacing:-0.4px;">UTF-8</div>
<div class="t" style="left:1082.7px;top:654.60px;color:#b9c3c5;font-size:11px;font-weight:normal;letter-spacing:0px;">LF</div>
<div class="t" style="left:1107px;top:654.60px;color:#b9c3c5;font-size:11px;font-weight:normal;letter-spacing:-0.9px;">SCSS</div>
<div class="t" style="left:1146px;top:654.60px;color:#b9c3c5;font-size:11px;font-weight:normal;letter-spacing:-0.2px;">Prettier</div>
<svg class="a" style="left:1194px;top:656px" width="12" height="12" viewBox="0 0 12 12"><g fill="none" stroke="#b9c3c5" stroke-width="1"><circle cx="4" cy="4" r="2.2"/><path d="M1 10.5 Q1 7 4 7 Q7 7 7 10.5 M6.5 1.5 H11 V6 H9 L8 7.5"/></g></svg>
<svg class="a" style="left:1219.5px;top:655.5px" width="11" height="12" viewBox="0 0 11 12"><g fill="none" stroke="#b9c3c5" stroke-width="1"><path d="M5.5 1.2 Q2 1.2 2 5 V8 L1 9.5 H10 L9 8 V5 Q9 1.2 5.5 1.2 Z M4.3 10.5 Q5.5 11.8 6.7 10.5"/></g></svg>
<svg class="a" style="left:741px;top:108px;opacity:0.95" width="25" height="544" viewBox="0 0 25 544"><path fill="#7d8b8e" d="M0.0 0h0.9v1.0h-0.9zM1.1 0h0.9v1.0h-0.9zM2.3 0h0.9v1.0h-0.9zM3.4 0h0.9v1.0h-0.9zM4.6 0h0.9v1.0h-0.9zM5.8 0h0.9v1.0h-0.9zM6.9 0h0.9v1.0h-0.9zM9.2 0h0.9v1.0h-0.9zM11.5 12h0.9v1.0h-0.9zM13.8 12h0.9v1.0h-0.9zM14.9 12h0.9v1.0h-0.9zM16.1 12h0.9v1.0h-0.9zM17.2 12h0.9v1.0h-0.9zM18.4 12h0.9v1.0h-0.9zM19.5 12h0.9v1.0h-0.9zM20.7 12h0.9v1.0h-0.9zM21.8 12h0.9v1.0h-0.9zM23.0 12h0.9v1.0h-0.9zM10.3 14h0.9v1.0h-0.9zM12.6 14h0.9v1.0h-0.9zM13.8 14h0.9v1.0h-0.9zM14.9 14h0.9v1.0h-0.9zM16.1 14h0.9v1.0h-0.9zM17.2 14h0.9v1.0h-0.9zM17.2 16h0.9v1.0h-0.9zM19.5 16h0.9v1.0h-0.9zM20.7 16h0.9v1.0h-0.9zM21.8 16h0.9v1.0h-0.9zM23.0 16h0.9v1.0h-0.9zM24.1 16h0.9v1.0h-0.9zM8.0 18h0.9v1.0h-0.9zM14.9 18h0.9v1.0h-0.9zM3.4 22h0.9v1.0h-0.9zM4.6 22h0.9v1.0h-0.9zM5.8 22h0.9v1.0h-0.9zM6.9 22h0.9v1.0h-0.9zM8.0 22h0.9v1.0h-0.9zM9.2 22h0.9v1.0h-0.9zM11.5 22h0.9v1.0h-0.9zM23.0 24h0.9v1.0h-0.9zM2.3 26h0.9v1.0h-0.9zM3.4 30h0.9v1.0h-0.9zM4.6 30h0.9v1.0h-0.9zM5.8 30h0.9v1.0h-0.9zM6.9 30h0.9v1.0h-0.9zM8.0 30h0.9v1.0h-0.9zM9.2 30h0.9v1.0h-0.9zM12.6 30h0.9v1.0h-0.9zM13.8 30h0.9v1.0h-0.9zM14.9 30h0.9v1.0h-0.9zM16.1 30h0.9v1.0h-0.9zM17.2 30h0.9v1.0h-0.9zM18.4 30h0.9v1.0h-0.9zM19.5 30h0.9v1.0h-0.9zM20.7 30h0.9v1.0h-0.9zM21.8 30h0.9v1.0h-0.9zM23.0 30h0.9v1.0h-0.9zM24.1 30h0.9v1.0h-0.9zM10.3 32h0.9v1.0h-0.9zM12.6 32h0.9v1.0h-0.9zM13.8 32h0.9v1.0h-0.9zM14.9 32h0.9v1.0h-0.9zM16.1 32h0.9v1.0h-0.9zM17.2 32h0.9v1.0h-0.9zM18.4 32h0.9v1.0h-0.9zM19.5 32h0.9v1.0h-0.9zM20.7 32h0.9v1.0h-0.9zM21.8 32h0.9v1.0h-0.9zM23.0 32h0.9v1.0h-0.9zM24.1 32h0.9v1.0h-0.9zM2.3 34h0.9v1.0h-0.9zM3.4 38h0.9v1.0h-0.9zM4.6 38h0.9v1.0h-0.9zM5.8 38h0.9v1.0h-0.9zM6.9 38h0.9v1.0h-0.9zM8.0 38h0.9v1.0h-0.9zM9.2 38h0.9v1.0h-0.9zM10.3 38h0.9v1.0h-0.9zM11.5 38h0.9v1.0h-0.9zM12.6 38h0.9v1.0h-0.9zM14.9 38h0.9v1.0h-0.9zM23.0 40h0.9v1.0h-0.9zM2.3 42h0.9v1.0h-0.9zM3.4 46h0.9v1.0h-0.9zM4.6 46h0.9v1.0h-0.9zM5.8 46h0.9v1.0h-0.9zM6.9 46h0.9v1.0h-0.9zM8.0 46h0.9v1.0h-0.9zM9.2 46h0.9v1.0h-0.9zM10.3 46h0.9v1.0h-0.9zM11.5 46h0.9v1.0h-0.9zM12.6 46h0.9v1.0h-0.9zM16.1 46h0.9v1.0h-0.9zM17.2 46h0.9v1.0h-0.9zM18.4 46h0.9v1.0h-0.9zM19.5 46h0.9v1.0h-0.9zM20.7 46h0.9v1.0h-0.9zM21.8 46h0.9v1.0h-0.9zM23.0 46h0.9v1.0h-0.9zM24.1 46h0.9v1.0h-0.9zM10.3 48h0.9v1.0h-0.9zM12.6 48h0.9v1.0h-0.9zM13.8 48h0.9v1.0h-0.9zM14.9 48h0.9v1.0h-0.9zM16.1 48h0.9v1.0h-0.9zM17.2 48h0.9v1.0h-0.9zM18.4 48h0.9v1.0h-0.9zM19.5 48h0.9v1.0h-0.9zM20.7 48h0.9v1.0h-0.9zM21.8 48h0.9v1.0h-0.9zM23.0 48h0.9v1.0h-0.9zM24.1 48h0.9v1.0h-0.9zM2.3 50h0.9v1.0h-0.9zM3.4 54h0.9v1.0h-0.9zM4.6 54h0.9v1.0h-0.9zM5.8 54h0.9v1.0h-0.9zM6.9 54h0.9v1.0h-0.9zM8.0 54h0.9v1.0h-0.9zM9.2 54h0.9v1.0h-0.9zM10.3 54h0.9v1.0h-0.9zM11.5 54h0.9v1.0h-0.9zM12.6 54h0.9v1.0h-0.9zM14.9 54h0.9v1.0h-0.9zM23.0 56h0.9v1.0h-0.9zM2.3 58h0.9v1.0h-0.9zM3.4 62h0.9v1.0h-0.9zM4.6 62h0.9v1.0h-0.9zM5.8 62h0.9v1.0h-0.9zM6.9 62h0.9v1.0h-0.9zM8.0 62h0.9v1.0h-0.9zM9.2 62h0.9v1.0h-0.9zM10.3 62h0.9v1.0h-0.9zM11.5 62h0.9v1.0h-0.9zM12.6 62h0.9v1.0h-0.9zM16.1 62h0.9v1.0h-0.9zM17.2 62h0.9v1.0h-0.9zM18.4 62h0.9v1.0h-0.9zM19.5 62h0.9v1.0h-0.9zM20.7 62h0.9v1.0h-0.9zM21.8 62h0.9v1.0h-0.9zM23.0 62h0.9v1.0h-0.9zM24.1 62h0.9v1.0h-0.9zM10.3 64h0.9v1.0h-0.9zM12.6 64h0.9v1.0h-0.9zM13.8 64h0.9v1.0h-0.9zM14.9 64h0.9v1.0h-0.9zM16.1 64h0.9v1.0h-0.9zM17.2 64h0.9v1.0h-0.9zM18.4 64h0.9v1.0h-0.9zM19.5 64h0.9v1.0h-0.9zM20.7 64h0.9v1.0h-0.9zM21.8 64h0.9v1.0h-0.9zM23.0 64h0.9v1.0h-0.9zM24.1 64h0.9v1.0h-0.9zM2.3 66h0.9v1.0h-0.9zM3.4 70h0.9v1.0h-0.9zM4.6 70h0.9v1.0h-0.9zM5.8 70h0.9v1.0h-0.9zM6.9 70h0.9v1.0h-0.9zM8.0 70h0.9v1.0h-0.9zM9.2 70h0.9v1.0h-0.9zM10.3 70h0.9v1.0h-0.9zM11.5 70h0.9v1.0h-0.9zM13.8 70h0.9v1.0h-0.9zM23.0 72h0.9v1.0h-0.9zM2.3 74h0.9v1.0h-0.9zM3.4 78h0.9v1.0h-0.9zM4.6 78h0.9v1.0h-0.9zM5.8 78h0.9v1.0h-0.9zM6.9 78h0.9v1.0h-0.9zM8.0 78h0.9v1.0h-0.9zM9.2 78h0.9v1.0h-0.9zM10.3 78h0.9v1.0h-0.9zM11.5 78h0.9v1.0h-0.9zM14.9 78h0.9v1.0h-0.9zM16.1 78h0.9v1.0h-0.9zM17.2 78h0.9v1.0h-0.9zM18.4 78h0.9v1.0h-0.9zM19.5 78h0.9v1.0h-0.9zM20.7 78h0.9v1.0h-0.9zM21.8 78h0.9v1.0h-0.9zM23.0 78h0.9v1.0h-0.9zM24.1 78h0.9v1.0h-0.9zM10.3 80h0.9v1.0h-0.9zM12.6 80h0.9v1.0h-0.9zM13.8 80h0.9v1.0h-0.9zM14.9 80h0.9v1.0h-0.9zM16.1 80h0.9v1.0h-0.9zM17.2 80h0.9v1.0h-0.9zM18.4 80h0.9v1.0h-0.9zM19.5 80h0.9v1.0h-0.9zM20.7 80h0.9v1.0h-0.9zM21.8 80h0.9v1.0h-0.9zM23.0 80h0.9v1.0h-0.9zM2.3 82h0.9v1.0h-0.9zM3.4 86h0.9v1.0h-0.9zM4.6 86h0.9v1.0h-0.9zM5.8 86h0.9v1.0h-0.9zM6.9 86h0.9v1.0h-0.9zM8.0 86h0.9v1.0h-0.9zM9.2 86h0.9v1.0h-0.9zM11.5 86h0.9v1.0h-0.9zM23.0 88h0.9v1.0h-0.9zM24.1 88h0.9v1.0h-0.9zM9.2 90h0.9v1.0h-0.9zM16.1 90h0.9v1.0h-0.9zM17.2 90h0.9v1.0h-0.9zM18.4 90h0.9v1.0h-0.9zM19.5 90h0.9v1.0h-0.9zM20.7 90h0.9v1.0h-0.9zM11.5 92h0.9v1.0h-0.9zM17.2 92h0.9v1.0h-0.9zM18.4 92h0.9v1.0h-0.9zM24.1 92h0.9v1.0h-0.9zM2.3 94h0.9v1.0h-0.9zM3.4 98h0.9v1.0h-0.9zM4.6 98h0.9v1.0h-0.9zM5.8 98h0.9v1.0h-0.9zM6.9 98h0.9v1.0h-0.9zM8.0 98h0.9v1.0h-0.9zM9.2 98h0.9v1.0h-0.9zM10.3 98h0.9v1.0h-0.9zM12.6 98h0.9v1.0h-0.9zM17.2 100h0.9v1.0h-0.9zM23.0 100h0.9v1.0h-0.9zM17.2 102h0.9v1.0h-0.9zM20.7 102h0.9v1.0h-0.9zM23.0 102h0.9v1.0h-0.9zM2.3 104h0.9v1.0h-0.9zM3.4 108h0.9v1.0h-0.9zM4.6 108h0.9v1.0h-0.9zM5.8 108h0.9v1.0h-0.9zM6.9 108h0.9v1.0h-0.9zM8.0 108h0.9v1.0h-0.9zM9.2 108h0.9v1.0h-0.9zM10.3 108h0.9v1.0h-0.9zM11.5 108h0.9v1.0h-0.9zM12.6 108h0.9v1.0h-0.9zM14.9 108h0.9v1.0h-0.9zM12.6 110h0.9v1.0h-0.9zM14.9 110h0.9v1.0h-0.9zM16.1 110h0.9v1.0h-0.9zM17.2 110h0.9v1.0h-0.9zM18.4 110h0.9v1.0h-0.9zM19.5 110h0.9v1.0h-0.9zM17.2 112h0.9v1.0h-0.9zM19.5 112h0.9v1.0h-0.9zM20.7 112h0.9v1.0h-0.9zM21.8 112h0.9v1.0h-0.9zM23.0 112h0.9v1.0h-0.9zM24.1 112h0.9v1.0h-0.9zM2.3 114h0.9v1.0h-0.9zM3.4 118h0.9v1.0h-0.9zM4.6 118h0.9v1.0h-0.9zM5.8 118h0.9v1.0h-0.9zM6.9 118h0.9v1.0h-0.9zM8.0 118h0.9v1.0h-0.9zM9.2 118h0.9v1.0h-0.9zM10.3 118h0.9v1.0h-0.9zM12.6 118h0.9v1.0h-0.9zM17.2 122h0.9v1.0h-0.9zM19.5 122h0.9v1.0h-0.9zM20.7 122h0.9v1.0h-0.9zM21.8 122h0.9v1.0h-0.9zM23.0 122h0.9v1.0h-0.9zM24.1 122h0.9v1.0h-0.9zM11.5 124h0.9v1.0h-0.9zM13.8 124h0.9v1.0h-0.9zM14.9 124h0.9v1.0h-0.9zM16.1 124h0.9v1.0h-0.9zM17.2 124h0.9v1.0h-0.9zM18.4 124h0.9v1.0h-0.9zM19.5 124h0.9v1.0h-0.9zM20.7 124h0.9v1.0h-0.9zM21.8 124h0.9v1.0h-0.9zM2.3 126h0.9v1.0h-0.9zM3.4 130h0.9v1.0h-0.9zM4.6 130h0.9v1.0h-0.9zM5.8 130h0.9v1.0h-0.9zM6.9 130h0.9v1.0h-0.9zM8.0 130h0.9v1.0h-0.9zM9.2 130h0.9v1.0h-0.9zM10.3 130h0.9v1.0h-0.9zM11.5 130h0.9v1.0h-0.9zM12.6 130h0.9v1.0h-0.9zM13.8 130h0.9v1.0h-0.9zM14.9 130h0.9v1.0h-0.9zM16.1 130h0.9v1.0h-0.9zM17.2 130h0.9v1.0h-0.9zM18.4 130h0.9v1.0h-0.9zM20.7 130h0.9v1.0h-0.9zM10.3 132h0.9v1.0h-0.9zM12.6 132h0.9v1.0h-0.9zM13.8 132h0.9v1.0h-0.9zM14.9 132h0.9v1.0h-0.9zM16.1 132h0.9v1.0h-0.9zM17.2 132h0.9v1.0h-0.9zM18.4 132h0.9v1.0h-0.9zM19.5 132h0.9v1.0h-0.9zM20.7 132h0.9v1.0h-0.9zM21.8 132h0.9v1.0h-0.9zM23.0 132h0.9v1.0h-0.9zM24.1 132h0.9v1.0h-0.9zM2.3 134h0.9v1.0h-0.9zM0.0 136h0.9v1.0h-0.9z"/><path fill="#809a17" d="M2.3 2h0.9v1.0h-0.9zM3.4 2h0.9v1.0h-0.9zM4.6 2h0.9v1.0h-0.9zM5.8 2h0.9v1.0h-0.9zM6.9 2h0.9v1.0h-0.9zM8.0 2h0.9v1.0h-0.9zM9.2 2h0.9v1.0h-0.9zM10.3 2h0.9v1.0h-0.9zM2.3 4h0.9v1.0h-0.9zM3.4 4h0.9v1.0h-0.9zM4.6 4h0.9v1.0h-0.9zM5.8 4h0.9v1.0h-0.9zM6.9 4h0.9v1.0h-0.9zM8.0 4h0.9v1.0h-0.9zM9.2 4h0.9v1.0h-0.9zM10.3 4h0.9v1.0h-0.9zM2.3 6h0.9v1.0h-0.9zM3.4 6h0.9v1.0h-0.9zM4.6 6h0.9v1.0h-0.9zM5.8 6h0.9v1.0h-0.9zM6.9 6h0.9v1.0h-0.9zM8.0 6h0.9v1.0h-0.9zM9.2 6h0.9v1.0h-0.9zM10.3 6h0.9v1.0h-0.9zM2.3 8h0.9v1.0h-0.9zM3.4 8h0.9v1.0h-0.9zM4.6 8h0.9v1.0h-0.9zM5.8 8h0.9v1.0h-0.9zM6.9 8h0.9v1.0h-0.9zM8.0 8h0.9v1.0h-0.9zM9.2 8h0.9v1.0h-0.9zM10.3 8h0.9v1.0h-0.9zM2.3 12h0.9v1.0h-0.9zM3.4 12h0.9v1.0h-0.9zM4.6 12h0.9v1.0h-0.9zM5.8 12h0.9v1.0h-0.9zM6.9 12h0.9v1.0h-0.9zM8.0 12h0.9v1.0h-0.9zM9.2 12h0.9v1.0h-0.9zM10.3 12h0.9v1.0h-0.9zM2.3 14h0.9v1.0h-0.9zM3.4 14h0.9v1.0h-0.9zM4.6 14h0.9v1.0h-0.9zM5.8 14h0.9v1.0h-0.9zM6.9 14h0.9v1.0h-0.9zM8.0 14h0.9v1.0h-0.9zM9.2 14h0.9v1.0h-0.9zM2.3 16h0.9v1.0h-0.9zM3.4 16h0.9v1.0h-0.9zM4.6 16h0.9v1.0h-0.9zM5.8 16h0.9v1.0h-0.9zM6.9 16h0.9v1.0h-0.9zM8.0 16h0.9v1.0h-0.9zM9.2 16h0.9v1.0h-0.9zM10.3 16h0.9v1.0h-0.9zM11.5 16h0.9v1.0h-0.9zM12.6 16h0.9v1.0h-0.9zM13.8 16h0.9v1.0h-0.9zM14.9 16h0.9v1.0h-0.9zM16.1 16h0.9v1.0h-0.9zM2.3 18h0.9v1.0h-0.9zM3.4 18h0.9v1.0h-0.9zM4.6 18h0.9v1.0h-0.9zM5.8 18h0.9v1.0h-0.9zM6.9 18h0.9v1.0h-0.9zM13.8 18h0.9v1.0h-0.9zM4.6 24h0.9v1.0h-0.9zM5.8 24h0.9v1.0h-0.9zM6.9 24h0.9v1.0h-0.9zM8.0 24h0.9v1.0h-0.9zM9.2 24h0.9v1.0h-0.9zM10.3 24h0.9v1.0h-0.9zM11.5 24h0.9v1.0h-0.9zM12.6 24h0.9v1.0h-0.9zM13.8 24h0.9v1.0h-0.9zM14.9 24h0.9v1.0h-0.9zM16.1 24h0.9v1.0h-0.9zM17.2 24h0.9v1.0h-0.9zM18.4 24h0.9v1.0h-0.9zM19.5 24h0.9v1.0h-0.9zM20.7 24h0.9v1.0h-0.9zM21.8 24h0.9v1.0h-0.9zM4.6 32h0.9v1.0h-0.9zM5.8 32h0.9v1.0h-0.9zM6.9 32h0.9v1.0h-0.9zM8.0 32h0.9v1.0h-0.9zM9.2 32h0.9v1.0h-0.9zM4.6 40h0.9v1.0h-0.9zM5.8 40h0.9v1.0h-0.9zM6.9 40h0.9v1.0h-0.9zM8.0 40h0.9v1.0h-0.9zM9.2 40h0.9v1.0h-0.9zM10.3 40h0.9v1.0h-0.9zM11.5 40h0.9v1.0h-0.9zM12.6 40h0.9v1.0h-0.9zM13.8 40h0.9v1.0h-0.9zM14.9 40h0.9v1.0h-0.9zM16.1 40h0.9v1.0h-0.9zM17.2 40h0.9v1.0h-0.9zM18.4 40h0.9v1.0h-0.9zM19.5 40h0.9v1.0h-0.9zM20.7 40h0.9v1.0h-0.9zM21.8 40h0.9v1.0h-0.9zM4.6 48h0.9v1.0h-0.9zM5.8 48h0.9v1.0h-0.9zM6.9 48h0.9v1.0h-0.9zM8.0 48h0.9v1.0h-0.9zM9.2 48h0.9v1.0h-0.9zM4.6 56h0.9v1.0h-0.9zM5.8 56h0.9v1.0h-0.9zM6.9 56h0.9v1.0h-0.9zM8.0 56h0.9v1.0h-0.9zM9.2 56h0.9v1.0h-0.9zM10.3 56h0.9v1.0h-0.9zM11.5 56h0.9v1.0h-0.9zM12.6 56h0.9v1.0h-0.9zM13.8 56h0.9v1.0h-0.9zM14.9 56h0.9v1.0h-0.9zM16.1 56h0.9v1.0h-0.9zM17.2 56h0.9v1.0h-0.9zM18.4 56h0.9v1.0h-0.9zM19.5 56h0.9v1.0h-0.9zM20.7 56h0.9v1.0h-0.9zM21.8 56h0.9v1.0h-0.9zM4.6 64h0.9v1.0h-0.9zM5.8 64h0.9v1.0h-0.9zM6.9 64h0.9v1.0h-0.9zM8.0 64h0.9v1.0h-0.9zM9.2 64h0.9v1.0h-0.9zM4.6 72h0.9v1.0h-0.9zM5.8 72h0.9v1.0h-0.9zM6.9 72h0.9v1.0h-0.9zM8.0 72h0.9v1.0h-0.9zM9.2 72h0.9v1.0h-0.9zM10.3 72h0.9v1.0h-0.9zM11.5 72h0.9v1.0h-0.9zM12.6 72h0.9v1.0h-0.9zM13.8 72h0.9v1.0h-0.9zM14.9 72h0.9v1.0h-0.9zM16.1 72h0.9v1.0h-0.9zM17.2 72h0.9v1.0h-0.9zM18.4 72h0.9v1.0h-0.9zM19.5 72h0.9v1.0h-0.9zM20.7 72h0.9v1.0h-0.9zM21.8 72h0.9v1.0h-0.9zM4.6 80h0.9v1.0h-0.9zM5.8 80h0.9v1.0h-0.9zM6.9 80h0.9v1.0h-0.9zM8.0 80h0.9v1.0h-0.9zM9.2 80h0.9v1.0h-0.9zM4.6 88h0.9v1.0h-0.9zM5.8 88h0.9v1.0h-0.9zM6.9 88h0.9v1.0h-0.9zM8.0 88h0.9v1.0h-0.9zM9.2 88h0.9v1.0h-0.9zM10.3 88h0.9v1.0h-0.9zM11.5 88h0.9v1.0h-0.9zM12.6 88h0.9v1.0h-0.9zM4.6 90h0.9v1.0h-0.9zM5.8 90h0.9v1.0h-0.9zM6.9 90h0.9v1.0h-0.9zM8.0 90h0.9v1.0h-0.9zM4.6 92h0.9v1.0h-0.9zM5.8 92h0.9v1.0h-0.9zM6.9 92h0.9v1.0h-0.9zM8.0 92h0.9v1.0h-0.9zM9.2 92h0.9v1.0h-0.9zM10.3 92h0.9v1.0h-0.9zM4.6 100h0.9v1.0h-0.9zM5.8 100h0.9v1.0h-0.9zM6.9 100h0.9v1.0h-0.9zM8.0 100h0.9v1.0h-0.9zM9.2 100h0.9v1.0h-0.9zM10.3 100h0.9v1.0h-0.9zM11.5 100h0.9v1.0h-0.9zM12.6 100h0.9v1.0h-0.9zM13.8 100h0.9v1.0h-0.9zM14.9 100h0.9v1.0h-0.9zM16.1 100h0.9v1.0h-0.9zM4.6 102h0.9v1.0h-0.9zM5.8 102h0.9v1.0h-0.9zM6.9 102h0.9v1.0h-0.9zM8.0 102h0.9v1.0h-0.9zM9.2 102h0.9v1.0h-0.9zM10.3 102h0.9v1.0h-0.9zM11.5 102h0.9v1.0h-0.9zM12.6 102h0.9v1.0h-0.9zM13.8 102h0.9v1.0h-0.9zM14.9 102h0.9v1.0h-0.9zM16.1 102h0.9v1.0h-0.9zM4.6 110h0.9v1.0h-0.9zM5.8 110h0.9v1.0h-0.9zM6.9 110h0.9v1.0h-0.9zM8.0 110h0.9v1.0h-0.9zM9.2 110h0.9v1.0h-0.9zM10.3 110h0.9v1.0h-0.9zM11.5 110h0.9v1.0h-0.9zM4.6 112h0.9v1.0h-0.9zM5.8 112h0.9v1.0h-0.9zM6.9 112h0.9v1.0h-0.9zM8.0 112h0.9v1.0h-0.9zM9.2 112h0.9v1.0h-0.9zM10.3 112h0.9v1.0h-0.9zM11.5 112h0.9v1.0h-0.9zM12.6 112h0.9v1.0h-0.9zM13.8 112h0.9v1.0h-0.9zM14.9 112h0.9v1.0h-0.9zM16.1 112h0.9v1.0h-0.9zM4.6 120h0.9v1.0h-0.9zM5.8 120h0.9v1.0h-0.9zM6.9 120h0.9v1.0h-0.9zM8.0 120h0.9v1.0h-0.9zM9.2 120h0.9v1.0h-0.9zM10.3 120h0.9v1.0h-0.9zM11.5 120h0.9v1.0h-0.9zM12.6 120h0.9v1.0h-0.9zM4.6 122h0.9v1.0h-0.9zM5.8 122h0.9v1.0h-0.9zM6.9 122h0.9v1.0h-0.9zM8.0 122h0.9v1.0h-0.9zM9.2 122h0.9v1.0h-0.9zM10.3 122h0.9v1.0h-0.9zM11.5 122h0.9v1.0h-0.9zM12.6 122h0.9v1.0h-0.9zM13.8 122h0.9v1.0h-0.9zM14.9 122h0.9v1.0h-0.9zM16.1 122h0.9v1.0h-0.9zM4.6 124h0.9v1.0h-0.9zM5.8 124h0.9v1.0h-0.9zM6.9 124h0.9v1.0h-0.9zM8.0 124h0.9v1.0h-0.9zM9.2 124h0.9v1.0h-0.9zM10.3 124h0.9v1.0h-0.9zM4.6 132h0.9v1.0h-0.9zM5.8 132h0.9v1.0h-0.9zM6.9 132h0.9v1.0h-0.9zM8.0 132h0.9v1.0h-0.9zM9.2 132h0.9v1.0h-0.9z"/><path fill="#1b80ba" d="M12.6 2h0.9v1.0h-0.9zM13.8 2h0.9v1.0h-0.9zM14.9 2h0.9v1.0h-0.9zM16.1 2h0.9v1.0h-0.9zM17.2 2h0.9v1.0h-0.9zM18.4 2h0.9v1.0h-0.9zM19.5 2h0.9v1.0h-0.9zM20.7 2h0.9v1.0h-0.9zM21.8 2h0.9v1.0h-0.9zM23.0 2h0.9v1.0h-0.9zM24.1 2h0.9v1.0h-0.9zM12.6 4h0.9v1.0h-0.9zM13.8 4h0.9v1.0h-0.9zM14.9 4h0.9v1.0h-0.9zM16.1 4h0.9v1.0h-0.9zM17.2 4h0.9v1.0h-0.9zM18.4 4h0.9v1.0h-0.9zM19.5 4h0.9v1.0h-0.9zM20.7 4h0.9v1.0h-0.9zM21.8 4h0.9v1.0h-0.9zM23.0 4h0.9v1.0h-0.9zM24.1 4h0.9v1.0h-0.9zM12.6 6h0.9v1.0h-0.9zM13.8 6h0.9v1.0h-0.9zM14.9 6h0.9v1.0h-0.9zM16.1 6h0.9v1.0h-0.9zM17.2 6h0.9v1.0h-0.9zM18.4 6h0.9v1.0h-0.9zM19.5 6h0.9v1.0h-0.9zM20.7 6h0.9v1.0h-0.9zM21.8 6h0.9v1.0h-0.9zM23.0 6h0.9v1.0h-0.9zM24.1 6h0.9v1.0h-0.9zM12.6 8h0.9v1.0h-0.9zM13.8 8h0.9v1.0h-0.9zM14.9 8h0.9v1.0h-0.9zM16.1 8h0.9v1.0h-0.9zM17.2 8h0.9v1.0h-0.9zM18.4 8h0.9v1.0h-0.9zM19.5 8h0.9v1.0h-0.9zM20.7 8h0.9v1.0h-0.9zM21.8 8h0.9v1.0h-0.9zM23.0 8h0.9v1.0h-0.9zM24.1 8h0.9v1.0h-0.9zM2.3 22h0.9v1.0h-0.9zM2.3 30h0.9v1.0h-0.9zM11.5 30h0.9v1.0h-0.9zM2.3 38h0.9v1.0h-0.9zM2.3 46h0.9v1.0h-0.9zM14.9 46h0.9v1.0h-0.9zM2.3 54h0.9v1.0h-0.9zM2.3 62h0.9v1.0h-0.9zM14.9 62h0.9v1.0h-0.9zM2.3 70h0.9v1.0h-0.9zM2.3 78h0.9v1.0h-0.9zM13.8 78h0.9v1.0h-0.9zM2.3 86h0.9v1.0h-0.9zM14.9 88h0.9v1.0h-0.9zM16.1 88h0.9v1.0h-0.9zM17.2 88h0.9v1.0h-0.9zM18.4 88h0.9v1.0h-0.9zM19.5 88h0.9v1.0h-0.9zM20.7 88h0.9v1.0h-0.9zM21.8 88h0.9v1.0h-0.9zM2.3 98h0.9v1.0h-0.9zM2.3 108h0.9v1.0h-0.9zM2.3 118h0.9v1.0h-0.9zM14.9 120h0.9v1.0h-0.9zM16.1 120h0.9v1.0h-0.9zM17.2 120h0.9v1.0h-0.9zM18.4 120h0.9v1.0h-0.9zM19.5 120h0.9v1.0h-0.9zM20.7 120h0.9v1.0h-0.9zM21.8 120h0.9v1.0h-0.9zM23.0 120h0.9v1.0h-0.9zM24.1 120h0.9v1.0h-0.9zM2.3 130h0.9v1.0h-0.9z"/><path fill="#c42a7c" d="M10.3 18h0.9v1.0h-0.9zM11.5 18h0.9v1.0h-0.9zM12.6 18h0.9v1.0h-0.9zM11.5 90h0.9v1.0h-0.9zM13.8 90h0.9v1.0h-0.9zM13.8 92h0.9v1.0h-0.9zM16.1 92h0.9v1.0h-0.9zM20.7 92h0.9v1.0h-0.9zM23.0 92h0.9v1.0h-0.9zM19.5 100h0.9v1.0h-0.9zM20.7 100h0.9v1.0h-0.9zM21.8 100h0.9v1.0h-0.9zM19.5 102h0.9v1.0h-0.9zM21.8 102h0.9v1.0h-0.9z"/></svg>
<svg class="a" style="left:1206px;top:108px;opacity:0.8" width="25.5" height="544" viewBox="0 0 25.5 544"><path fill="#5c7379" d="M0.0 0h0.8v1.0h-0.8zM1.0 0h0.8v1.0h-0.8zM3.0 0h0.8v1.0h-0.8zM4.0 0h0.8v1.0h-0.8zM5.0 0h0.8v1.0h-0.8zM6.0 0h0.8v1.0h-0.8zM7.0 0h0.8v1.0h-0.8zM8.0 0h0.8v1.0h-0.8zM9.0 0h0.8v1.0h-0.8zM10.0 0h0.8v1.0h-0.8zM11.0 0h0.8v1.0h-0.8zM13.0 0h0.8v1.0h-0.8zM14.0 0h0.8v1.0h-0.8zM15.0 0h0.8v1.0h-0.8zM17.0 0h0.8v1.0h-0.8zM18.0 0h0.8v1.0h-0.8zM19.0 0h0.8v1.0h-0.8zM20.0 0h0.8v1.0h-0.8zM21.0 0h0.8v1.0h-0.8zM23.0 0h0.8v1.0h-0.8zM24.0 0h0.8v1.0h-0.8zM25.0 0h0.8v1.0h-0.8zM0.0 2h0.8v1.0h-0.8zM1.0 2h0.8v1.0h-0.8zM3.0 2h0.8v1.0h-0.8zM4.0 2h0.8v1.0h-0.8zM5.0 2h0.8v1.0h-0.8zM6.0 2h0.8v1.0h-0.8zM7.0 2h0.8v1.0h-0.8zM8.0 2h0.8v1.0h-0.8zM9.0 2h0.8v1.0h-0.8zM10.0 2h0.8v1.0h-0.8zM11.0 2h0.8v1.0h-0.8zM12.0 2h0.8v1.0h-0.8zM13.0 2h0.8v1.0h-0.8zM14.0 2h0.8v1.0h-0.8zM16.0 2h0.8v1.0h-0.8zM17.0 2h0.8v1.0h-0.8zM18.0 2h0.8v1.0h-0.8zM20.0 2h0.8v1.0h-0.8zM21.0 2h0.8v1.0h-0.8zM22.0 2h0.8v1.0h-0.8zM23.0 2h0.8v1.0h-0.8zM24.0 2h0.8v1.0h-0.8zM25.0 2h0.8v1.0h-0.8zM0.0 6h0.8v1.0h-0.8zM1.0 6h0.8v1.0h-0.8zM3.0 6h0.8v1.0h-0.8zM4.0 6h0.8v1.0h-0.8zM5.0 6h0.8v1.0h-0.8zM6.0 6h0.8v1.0h-0.8zM8.0 6h0.8v1.0h-0.8zM9.0 6h0.8v1.0h-0.8zM10.0 6h0.8v1.0h-0.8zM11.0 6h0.8v1.0h-0.8zM12.0 6h0.8v1.0h-0.8zM13.0 6h0.8v1.0h-0.8zM14.0 6h0.8v1.0h-0.8zM0.0 16h0.8v1.0h-0.8zM1.0 16h0.8v1.0h-0.8zM3.0 16h0.8v1.0h-0.8zM4.0 16h0.8v1.0h-0.8zM5.0 16h0.8v1.0h-0.8zM6.0 16h0.8v1.0h-0.8zM0.0 40h0.8v1.0h-0.8zM1.0 40h0.8v1.0h-0.8zM3.0 40h0.8v1.0h-0.8zM4.0 40h0.8v1.0h-0.8zM5.0 40h0.8v1.0h-0.8zM6.0 40h0.8v1.0h-0.8zM0.0 66h0.8v1.0h-0.8zM1.0 66h0.8v1.0h-0.8zM3.0 66h0.8v1.0h-0.8zM4.0 66h0.8v1.0h-0.8zM5.0 66h0.8v1.0h-0.8zM6.0 66h0.8v1.0h-0.8zM0.0 94h0.8v1.0h-0.8zM1.0 94h0.8v1.0h-0.8zM3.0 94h0.8v1.0h-0.8zM4.0 94h0.8v1.0h-0.8zM5.0 94h0.8v1.0h-0.8zM6.0 94h0.8v1.0h-0.8zM7.0 94h0.8v1.0h-0.8zM0.0 112h0.8v1.0h-0.8zM1.0 112h0.8v1.0h-0.8zM3.0 112h0.8v1.0h-0.8zM4.0 112h0.8v1.0h-0.8zM5.0 112h0.8v1.0h-0.8zM6.0 112h0.8v1.0h-0.8zM7.0 112h0.8v1.0h-0.8zM8.0 112h0.8v1.0h-0.8zM0.0 148h0.8v1.0h-0.8zM1.0 148h0.8v1.0h-0.8zM3.0 148h0.8v1.0h-0.8zM4.0 148h0.8v1.0h-0.8zM5.0 148h0.8v1.0h-0.8zM6.0 148h0.8v1.0h-0.8zM7.0 148h0.8v1.0h-0.8zM8.0 148h0.8v1.0h-0.8zM0.0 182h0.8v1.0h-0.8zM1.0 182h0.8v1.0h-0.8zM3.0 182h0.8v1.0h-0.8zM4.0 182h0.8v1.0h-0.8zM5.0 182h0.8v1.0h-0.8z"/><path fill="#809a17" d="M0.0 8h0.8v1.0h-0.8zM1.0 8h0.8v1.0h-0.8zM2.0 8h0.8v1.0h-0.8zM3.0 8h0.8v1.0h-0.8zM4.0 8h0.8v1.0h-0.8zM5.0 8h0.8v1.0h-0.8zM6.0 8h0.8v1.0h-0.8zM23.0 8h0.8v1.0h-0.8zM24.0 8h0.8v1.0h-0.8zM25.0 8h0.8v1.0h-0.8zM13.0 12h0.8v1.0h-0.8zM13.0 20h0.8v1.0h-0.8zM13.0 22h0.8v1.0h-0.8zM13.0 44h0.8v1.0h-0.8zM13.0 46h0.8v1.0h-0.8zM13.0 70h0.8v1.0h-0.8zM13.0 72h0.8v1.0h-0.8zM14.0 98h0.8v1.0h-0.8zM14.0 100h0.8v1.0h-0.8zM15.0 116h0.8v1.0h-0.8zM15.0 118h0.8v1.0h-0.8zM15.0 152h0.8v1.0h-0.8zM15.0 154h0.8v1.0h-0.8zM12.0 186h0.8v1.0h-0.8zM12.0 188h0.8v1.0h-0.8zM14.0 218h0.8v1.0h-0.8zM15.0 218h0.8v1.0h-0.8zM16.0 218h0.8v1.0h-0.8zM17.0 218h0.8v1.0h-0.8zM18.0 218h0.8v1.0h-0.8zM19.0 218h0.8v1.0h-0.8zM14.0 220h0.8v1.0h-0.8zM15.0 220h0.8v1.0h-0.8zM16.0 220h0.8v1.0h-0.8zM17.0 220h0.8v1.0h-0.8zM18.0 220h0.8v1.0h-0.8zM19.0 220h0.8v1.0h-0.8zM14.0 222h0.8v1.0h-0.8zM15.0 222h0.8v1.0h-0.8zM16.0 222h0.8v1.0h-0.8zM17.0 222h0.8v1.0h-0.8zM18.0 222h0.8v1.0h-0.8zM19.0 222h0.8v1.0h-0.8zM14.0 240h0.8v1.0h-0.8zM15.0 240h0.8v1.0h-0.8zM16.0 240h0.8v1.0h-0.8zM17.0 240h0.8v1.0h-0.8zM18.0 240h0.8v1.0h-0.8zM19.0 240h0.8v1.0h-0.8zM14.0 242h0.8v1.0h-0.8zM15.0 242h0.8v1.0h-0.8zM16.0 242h0.8v1.0h-0.8zM17.0 242h0.8v1.0h-0.8zM18.0 242h0.8v1.0h-0.8zM19.0 242h0.8v1.0h-0.8zM14.0 244h0.8v1.0h-0.8zM15.0 244h0.8v1.0h-0.8zM16.0 244h0.8v1.0h-0.8zM17.0 244h0.8v1.0h-0.8zM18.0 244h0.8v1.0h-0.8zM19.0 244h0.8v1.0h-0.8zM14.0 246h0.8v1.0h-0.8zM15.0 246h0.8v1.0h-0.8zM16.0 246h0.8v1.0h-0.8zM17.0 246h0.8v1.0h-0.8zM18.0 246h0.8v1.0h-0.8zM19.0 246h0.8v1.0h-0.8zM14.0 266h0.8v1.0h-0.8zM15.0 266h0.8v1.0h-0.8zM16.0 266h0.8v1.0h-0.8zM17.0 266h0.8v1.0h-0.8zM18.0 266h0.8v1.0h-0.8zM19.0 266h0.8v1.0h-0.8zM14.0 268h0.8v1.0h-0.8zM15.0 268h0.8v1.0h-0.8zM16.0 268h0.8v1.0h-0.8zM17.0 268h0.8v1.0h-0.8zM18.0 268h0.8v1.0h-0.8zM19.0 268h0.8v1.0h-0.8zM14.0 270h0.8v1.0h-0.8zM15.0 270h0.8v1.0h-0.8zM16.0 270h0.8v1.0h-0.8zM17.0 270h0.8v1.0h-0.8zM18.0 270h0.8v1.0h-0.8zM19.0 270h0.8v1.0h-0.8zM14.0 288h0.8v1.0h-0.8zM15.0 288h0.8v1.0h-0.8zM16.0 288h0.8v1.0h-0.8zM17.0 288h0.8v1.0h-0.8zM18.0 288h0.8v1.0h-0.8zM19.0 288h0.8v1.0h-0.8zM14.0 290h0.8v1.0h-0.8zM15.0 290h0.8v1.0h-0.8zM16.0 290h0.8v1.0h-0.8zM17.0 290h0.8v1.0h-0.8zM18.0 290h0.8v1.0h-0.8zM19.0 290h0.8v1.0h-0.8zM14.0 292h0.8v1.0h-0.8zM15.0 292h0.8v1.0h-0.8zM16.0 292h0.8v1.0h-0.8zM17.0 292h0.8v1.0h-0.8zM18.0 292h0.8v1.0h-0.8zM19.0 292h0.8v1.0h-0.8zM14.0 310h0.8v1.0h-0.8zM15.0 310h0.8v1.0h-0.8zM16.0 310h0.8v1.0h-0.8zM17.0 310h0.8v1.0h-0.8zM18.0 310h0.8v1.0h-0.8zM19.0 310h0.8v1.0h-0.8zM14.0 312h0.8v1.0h-0.8zM15.0 312h0.8v1.0h-0.8zM16.0 312h0.8v1.0h-0.8zM17.0 312h0.8v1.0h-0.8zM18.0 312h0.8v1.0h-0.8zM19.0 312h0.8v1.0h-0.8zM14.0 328h0.8v1.0h-0.8zM15.0 328h0.8v1.0h-0.8zM16.0 328h0.8v1.0h-0.8zM17.0 328h0.8v1.0h-0.8zM18.0 328h0.8v1.0h-0.8zM19.0 328h0.8v1.0h-0.8zM14.0 330h0.8v1.0h-0.8zM15.0 330h0.8v1.0h-0.8zM16.0 330h0.8v1.0h-0.8zM17.0 330h0.8v1.0h-0.8zM18.0 330h0.8v1.0h-0.8zM19.0 330h0.8v1.0h-0.8zM14.0 332h0.8v1.0h-0.8zM15.0 332h0.8v1.0h-0.8zM16.0 332h0.8v1.0h-0.8zM17.0 332h0.8v1.0h-0.8zM18.0 332h0.8v1.0h-0.8zM19.0 332h0.8v1.0h-0.8zM14.0 334h0.8v1.0h-0.8zM15.0 334h0.8v1.0h-0.8zM16.0 334h0.8v1.0h-0.8zM17.0 334h0.8v1.0h-0.8zM18.0 334h0.8v1.0h-0.8zM19.0 334h0.8v1.0h-0.8zM14.0 336h0.8v1.0h-0.8zM15.0 336h0.8v1.0h-0.8zM16.0 336h0.8v1.0h-0.8zM17.0 336h0.8v1.0h-0.8zM18.0 336h0.8v1.0h-0.8zM19.0 336h0.8v1.0h-0.8zM14.0 358h0.8v1.0h-0.8zM15.0 358h0.8v1.0h-0.8zM16.0 358h0.8v1.0h-0.8zM17.0 358h0.8v1.0h-0.8zM18.0 358h0.8v1.0h-0.8zM19.0 358h0.8v1.0h-0.8zM14.0 360h0.8v1.0h-0.8zM15.0 360h0.8v1.0h-0.8zM16.0 360h0.8v1.0h-0.8zM17.0 360h0.8v1.0h-0.8zM18.0 360h0.8v1.0h-0.8zM19.0 360h0.8v1.0h-0.8zM14.0 362h0.8v1.0h-0.8zM15.0 362h0.8v1.0h-0.8zM16.0 362h0.8v1.0h-0.8zM17.0 362h0.8v1.0h-0.8zM18.0 362h0.8v1.0h-0.8zM19.0 362h0.8v1.0h-0.8zM14.0 364h0.8v1.0h-0.8zM15.0 364h0.8v1.0h-0.8zM16.0 364h0.8v1.0h-0.8zM17.0 364h0.8v1.0h-0.8zM18.0 364h0.8v1.0h-0.8zM19.0 364h0.8v1.0h-0.8zM14.0 366h0.8v1.0h-0.8zM15.0 366h0.8v1.0h-0.8zM16.0 366h0.8v1.0h-0.8zM17.0 366h0.8v1.0h-0.8zM18.0 366h0.8v1.0h-0.8zM19.0 366h0.8v1.0h-0.8zM14.0 368h0.8v1.0h-0.8zM15.0 368h0.8v1.0h-0.8zM16.0 368h0.8v1.0h-0.8zM17.0 368h0.8v1.0h-0.8zM18.0 368h0.8v1.0h-0.8zM19.0 368h0.8v1.0h-0.8zM14.0 370h0.8v1.0h-0.8zM15.0 370h0.8v1.0h-0.8zM16.0 370h0.8v1.0h-0.8zM17.0 370h0.8v1.0h-0.8zM18.0 370h0.8v1.0h-0.8zM19.0 370h0.8v1.0h-0.8zM14.0 372h0.8v1.0h-0.8zM15.0 372h0.8v1.0h-0.8zM16.0 372h0.8v1.0h-0.8zM17.0 372h0.8v1.0h-0.8zM18.0 372h0.8v1.0h-0.8zM19.0 372h0.8v1.0h-0.8zM14.0 374h0.8v1.0h-0.8zM15.0 374h0.8v1.0h-0.8zM16.0 374h0.8v1.0h-0.8zM17.0 374h0.8v1.0h-0.8zM18.0 374h0.8v1.0h-0.8zM19.0 374h0.8v1.0h-0.8zM14.0 404h0.8v1.0h-0.8zM15.0 404h0.8v1.0h-0.8zM16.0 404h0.8v1.0h-0.8zM17.0 404h0.8v1.0h-0.8zM18.0 404h0.8v1.0h-0.8zM19.0 404h0.8v1.0h-0.8zM14.0 406h0.8v1.0h-0.8zM15.0 406h0.8v1.0h-0.8zM16.0 406h0.8v1.0h-0.8zM17.0 406h0.8v1.0h-0.8zM18.0 406h0.8v1.0h-0.8zM19.0 406h0.8v1.0h-0.8zM14.0 408h0.8v1.0h-0.8zM15.0 408h0.8v1.0h-0.8zM16.0 408h0.8v1.0h-0.8zM17.0 408h0.8v1.0h-0.8zM18.0 408h0.8v1.0h-0.8zM19.0 408h0.8v1.0h-0.8zM14.0 410h0.8v1.0h-0.8zM15.0 410h0.8v1.0h-0.8zM16.0 410h0.8v1.0h-0.8zM17.0 410h0.8v1.0h-0.8zM18.0 410h0.8v1.0h-0.8zM19.0 410h0.8v1.0h-0.8zM14.0 412h0.8v1.0h-0.8zM15.0 412h0.8v1.0h-0.8zM16.0 412h0.8v1.0h-0.8zM17.0 412h0.8v1.0h-0.8zM18.0 412h0.8v1.0h-0.8zM19.0 412h0.8v1.0h-0.8zM14.0 414h0.8v1.0h-0.8zM15.0 414h0.8v1.0h-0.8zM16.0 414h0.8v1.0h-0.8zM17.0 414h0.8v1.0h-0.8zM18.0 414h0.8v1.0h-0.8zM19.0 414h0.8v1.0h-0.8zM14.0 438h0.8v1.0h-0.8zM15.0 438h0.8v1.0h-0.8zM16.0 438h0.8v1.0h-0.8zM17.0 438h0.8v1.0h-0.8zM18.0 438h0.8v1.0h-0.8zM19.0 438h0.8v1.0h-0.8zM14.0 440h0.8v1.0h-0.8zM15.0 440h0.8v1.0h-0.8zM16.0 440h0.8v1.0h-0.8zM17.0 440h0.8v1.0h-0.8zM18.0 440h0.8v1.0h-0.8zM19.0 440h0.8v1.0h-0.8zM14.0 442h0.8v1.0h-0.8zM15.0 442h0.8v1.0h-0.8zM16.0 442h0.8v1.0h-0.8zM17.0 442h0.8v1.0h-0.8zM18.0 442h0.8v1.0h-0.8zM19.0 442h0.8v1.0h-0.8zM14.0 444h0.8v1.0h-0.8zM15.0 444h0.8v1.0h-0.8zM16.0 444h0.8v1.0h-0.8zM17.0 444h0.8v1.0h-0.8zM18.0 444h0.8v1.0h-0.8zM19.0 444h0.8v1.0h-0.8zM14.0 446h0.8v1.0h-0.8zM15.0 446h0.8v1.0h-0.8zM16.0 446h0.8v1.0h-0.8zM17.0 446h0.8v1.0h-0.8zM18.0 446h0.8v1.0h-0.8zM19.0 446h0.8v1.0h-0.8zM14.0 468h0.8v1.0h-0.8zM15.0 468h0.8v1.0h-0.8zM16.0 468h0.8v1.0h-0.8zM17.0 468h0.8v1.0h-0.8zM18.0 468h0.8v1.0h-0.8zM19.0 468h0.8v1.0h-0.8zM14.0 470h0.8v1.0h-0.8zM15.0 470h0.8v1.0h-0.8zM16.0 470h0.8v1.0h-0.8zM17.0 470h0.8v1.0h-0.8zM18.0 470h0.8v1.0h-0.8zM19.0 470h0.8v1.0h-0.8zM14.0 472h0.8v1.0h-0.8zM15.0 472h0.8v1.0h-0.8zM16.0 472h0.8v1.0h-0.8zM17.0 472h0.8v1.0h-0.8zM18.0 472h0.8v1.0h-0.8zM19.0 472h0.8v1.0h-0.8zM14.0 474h0.8v1.0h-0.8zM15.0 474h0.8v1.0h-0.8zM16.0 474h0.8v1.0h-0.8zM17.0 474h0.8v1.0h-0.8zM18.0 474h0.8v1.0h-0.8zM19.0 474h0.8v1.0h-0.8zM14.0 476h0.8v1.0h-0.8zM15.0 476h0.8v1.0h-0.8zM16.0 476h0.8v1.0h-0.8zM17.0 476h0.8v1.0h-0.8zM18.0 476h0.8v1.0h-0.8zM19.0 476h0.8v1.0h-0.8zM14.0 498h0.8v1.0h-0.8zM15.0 498h0.8v1.0h-0.8zM16.0 498h0.8v1.0h-0.8zM17.0 498h0.8v1.0h-0.8zM18.0 498h0.8v1.0h-0.8zM19.0 498h0.8v1.0h-0.8zM14.0 500h0.8v1.0h-0.8zM15.0 500h0.8v1.0h-0.8zM16.0 500h0.8v1.0h-0.8zM17.0 500h0.8v1.0h-0.8zM18.0 500h0.8v1.0h-0.8zM19.0 500h0.8v1.0h-0.8zM14.0 502h0.8v1.0h-0.8zM15.0 502h0.8v1.0h-0.8zM16.0 502h0.8v1.0h-0.8zM17.0 502h0.8v1.0h-0.8zM18.0 502h0.8v1.0h-0.8zM19.0 502h0.8v1.0h-0.8zM14.0 504h0.8v1.0h-0.8zM15.0 504h0.8v1.0h-0.8zM16.0 504h0.8v1.0h-0.8zM17.0 504h0.8v1.0h-0.8zM18.0 504h0.8v1.0h-0.8zM19.0 504h0.8v1.0h-0.8zM14.0 506h0.8v1.0h-0.8zM15.0 506h0.8v1.0h-0.8zM16.0 506h0.8v1.0h-0.8zM17.0 506h0.8v1.0h-0.8zM18.0 506h0.8v1.0h-0.8zM19.0 506h0.8v1.0h-0.8zM14.0 508h0.8v1.0h-0.8zM15.0 508h0.8v1.0h-0.8zM16.0 508h0.8v1.0h-0.8zM17.0 508h0.8v1.0h-0.8zM18.0 508h0.8v1.0h-0.8zM19.0 508h0.8v1.0h-0.8zM14.0 532h0.8v1.0h-0.8zM15.0 532h0.8v1.0h-0.8zM16.0 532h0.8v1.0h-0.8zM17.0 532h0.8v1.0h-0.8zM18.0 532h0.8v1.0h-0.8zM19.0 532h0.8v1.0h-0.8zM14.0 534h0.8v1.0h-0.8zM15.0 534h0.8v1.0h-0.8zM16.0 534h0.8v1.0h-0.8zM17.0 534h0.8v1.0h-0.8zM18.0 534h0.8v1.0h-0.8zM19.0 534h0.8v1.0h-0.8z"/><path fill="#7d8b8e" d="M8.0 8h0.8v1.0h-0.8zM9.0 8h0.8v1.0h-0.8zM10.0 8h0.8v1.0h-0.8zM11.0 8h0.8v1.0h-0.8zM12.0 8h0.8v1.0h-0.8zM13.0 8h0.8v1.0h-0.8zM14.0 8h0.8v1.0h-0.8zM15.0 8h0.8v1.0h-0.8zM16.0 8h0.8v1.0h-0.8zM17.0 8h0.8v1.0h-0.8zM18.0 8h0.8v1.0h-0.8zM19.0 8h0.8v1.0h-0.8zM20.0 8h0.8v1.0h-0.8zM21.0 8h0.8v1.0h-0.8zM0.0 12h0.8v1.0h-0.8zM1.0 12h0.8v1.0h-0.8zM2.0 12h0.8v1.0h-0.8zM3.0 12h0.8v1.0h-0.8zM4.0 12h0.8v1.0h-0.8zM5.0 12h0.8v1.0h-0.8zM6.0 12h0.8v1.0h-0.8zM7.0 12h0.8v1.0h-0.8zM8.0 12h0.8v1.0h-0.8zM9.0 12h0.8v1.0h-0.8zM14.0 12h0.8v1.0h-0.8zM0.0 18h0.8v1.0h-0.8zM1.0 18h0.8v1.0h-0.8zM2.0 18h0.8v1.0h-0.8zM3.0 18h0.8v1.0h-0.8zM4.0 18h0.8v1.0h-0.8zM5.0 18h0.8v1.0h-0.8zM6.0 18h0.8v1.0h-0.8zM7.0 18h0.8v1.0h-0.8zM8.0 18h0.8v1.0h-0.8zM9.0 18h0.8v1.0h-0.8zM14.0 18h0.8v1.0h-0.8zM0.0 20h0.8v1.0h-0.8zM1.0 20h0.8v1.0h-0.8zM2.0 20h0.8v1.0h-0.8zM3.0 20h0.8v1.0h-0.8zM4.0 20h0.8v1.0h-0.8zM5.0 20h0.8v1.0h-0.8zM6.0 20h0.8v1.0h-0.8zM7.0 20h0.8v1.0h-0.8zM8.0 20h0.8v1.0h-0.8zM9.0 20h0.8v1.0h-0.8zM14.0 20h0.8v1.0h-0.8zM0.0 22h0.8v1.0h-0.8zM1.0 22h0.8v1.0h-0.8zM2.0 22h0.8v1.0h-0.8zM3.0 22h0.8v1.0h-0.8zM4.0 22h0.8v1.0h-0.8zM5.0 22h0.8v1.0h-0.8zM6.0 22h0.8v1.0h-0.8zM7.0 22h0.8v1.0h-0.8zM8.0 22h0.8v1.0h-0.8zM9.0 22h0.8v1.0h-0.8zM14.0 22h0.8v1.0h-0.8zM0.0 24h0.8v1.0h-0.8zM1.0 24h0.8v1.0h-0.8zM2.0 24h0.8v1.0h-0.8zM3.0 24h0.8v1.0h-0.8zM4.0 24h0.8v1.0h-0.8zM5.0 24h0.8v1.0h-0.8zM6.0 24h0.8v1.0h-0.8zM7.0 24h0.8v1.0h-0.8zM8.0 24h0.8v1.0h-0.8zM9.0 24h0.8v1.0h-0.8zM10.0 24h0.8v1.0h-0.8zM21.0 24h0.8v1.0h-0.8zM22.0 24h0.8v1.0h-0.8zM23.0 24h0.8v1.0h-0.8zM24.0 24h0.8v1.0h-0.8zM25.0 24h0.8v1.0h-0.8zM0.0 26h0.8v1.0h-0.8zM1.0 26h0.8v1.0h-0.8zM2.0 26h0.8v1.0h-0.8zM3.0 26h0.8v1.0h-0.8zM4.0 26h0.8v1.0h-0.8zM5.0 26h0.8v1.0h-0.8zM6.0 26h0.8v1.0h-0.8zM7.0 26h0.8v1.0h-0.8zM8.0 26h0.8v1.0h-0.8zM9.0 26h0.8v1.0h-0.8zM21.0 26h0.8v1.0h-0.8zM22.0 26h0.8v1.0h-0.8zM23.0 26h0.8v1.0h-0.8zM24.0 26h0.8v1.0h-0.8zM25.0 26h0.8v1.0h-0.8zM0.0 28h0.8v1.0h-0.8zM1.0 28h0.8v1.0h-0.8zM2.0 28h0.8v1.0h-0.8zM3.0 28h0.8v1.0h-0.8zM4.0 28h0.8v1.0h-0.8zM5.0 28h0.8v1.0h-0.8zM6.0 28h0.8v1.0h-0.8zM7.0 28h0.8v1.0h-0.8zM8.0 28h0.8v1.0h-0.8zM9.0 28h0.8v1.0h-0.8zM21.0 28h0.8v1.0h-0.8zM22.0 28h0.8v1.0h-0.8zM23.0 28h0.8v1.0h-0.8zM24.0 28h0.8v1.0h-0.8zM25.0 28h0.8v1.0h-0.8zM0.0 30h0.8v1.0h-0.8zM1.0 30h0.8v1.0h-0.8zM2.0 30h0.8v1.0h-0.8zM3.0 30h0.8v1.0h-0.8zM4.0 30h0.8v1.0h-0.8zM5.0 30h0.8v1.0h-0.8zM6.0 30h0.8v1.0h-0.8zM7.0 30h0.8v1.0h-0.8zM8.0 30h0.8v1.0h-0.8zM9.0 30h0.8v1.0h-0.8zM15.0 30h0.8v1.0h-0.8zM16.0 30h0.8v1.0h-0.8zM17.0 30h0.8v1.0h-0.8zM18.0 30h0.8v1.0h-0.8zM19.0 30h0.8v1.0h-0.8zM20.0 30h0.8v1.0h-0.8zM21.0 30h0.8v1.0h-0.8zM22.0 30h0.8v1.0h-0.8zM23.0 30h0.8v1.0h-0.8zM24.0 30h0.8v1.0h-0.8zM25.0 30h0.8v1.0h-0.8zM0.0 32h0.8v1.0h-0.8zM1.0 32h0.8v1.0h-0.8zM2.0 32h0.8v1.0h-0.8zM3.0 32h0.8v1.0h-0.8zM4.0 32h0.8v1.0h-0.8zM5.0 32h0.8v1.0h-0.8zM6.0 32h0.8v1.0h-0.8zM7.0 32h0.8v1.0h-0.8zM8.0 32h0.8v1.0h-0.8zM9.0 32h0.8v1.0h-0.8zM22.0 32h0.8v1.0h-0.8zM23.0 32h0.8v1.0h-0.8zM24.0 32h0.8v1.0h-0.8zM25.0 32h0.8v1.0h-0.8zM0.0 36h0.8v1.0h-0.8zM1.0 36h0.8v1.0h-0.8zM2.0 36h0.8v1.0h-0.8zM3.0 36h0.8v1.0h-0.8zM4.0 36h0.8v1.0h-0.8zM5.0 36h0.8v1.0h-0.8zM7.0 36h0.8v1.0h-0.8zM8.0 36h0.8v1.0h-0.8zM9.0 36h0.8v1.0h-0.8zM10.0 36h0.8v1.0h-0.8zM11.0 36h0.8v1.0h-0.8zM12.0 36h0.8v1.0h-0.8zM13.0 36h0.8v1.0h-0.8zM14.0 36h0.8v1.0h-0.8zM15.0 36h0.8v1.0h-0.8zM16.0 36h0.8v1.0h-0.8zM0.0 42h0.8v1.0h-0.8zM1.0 42h0.8v1.0h-0.8zM2.0 42h0.8v1.0h-0.8zM3.0 42h0.8v1.0h-0.8zM4.0 42h0.8v1.0h-0.8zM5.0 42h0.8v1.0h-0.8zM6.0 42h0.8v1.0h-0.8zM7.0 42h0.8v1.0h-0.8zM8.0 42h0.8v1.0h-0.8zM9.0 42h0.8v1.0h-0.8zM14.0 42h0.8v1.0h-0.8zM0.0 44h0.8v1.0h-0.8zM1.0 44h0.8v1.0h-0.8zM2.0 44h0.8v1.0h-0.8zM3.0 44h0.8v1.0h-0.8zM4.0 44h0.8v1.0h-0.8zM5.0 44h0.8v1.0h-0.8zM6.0 44h0.8v1.0h-0.8zM7.0 44h0.8v1.0h-0.8zM8.0 44h0.8v1.0h-0.8zM9.0 44h0.8v1.0h-0.8zM14.0 44h0.8v1.0h-0.8zM0.0 46h0.8v1.0h-0.8zM1.0 46h0.8v1.0h-0.8zM2.0 46h0.8v1.0h-0.8zM3.0 46h0.8v1.0h-0.8zM4.0 46h0.8v1.0h-0.8zM5.0 46h0.8v1.0h-0.8zM6.0 46h0.8v1.0h-0.8zM7.0 46h0.8v1.0h-0.8zM8.0 46h0.8v1.0h-0.8zM9.0 46h0.8v1.0h-0.8zM14.0 46h0.8v1.0h-0.8zM0.0 48h0.8v1.0h-0.8zM1.0 48h0.8v1.0h-0.8zM2.0 48h0.8v1.0h-0.8zM3.0 48h0.8v1.0h-0.8zM4.0 48h0.8v1.0h-0.8zM5.0 48h0.8v1.0h-0.8zM6.0 48h0.8v1.0h-0.8zM7.0 48h0.8v1.0h-0.8zM8.0 48h0.8v1.0h-0.8zM9.0 48h0.8v1.0h-0.8zM10.0 48h0.8v1.0h-0.8zM21.0 48h0.8v1.0h-0.8zM22.0 48h0.8v1.0h-0.8zM23.0 48h0.8v1.0h-0.8zM24.0 48h0.8v1.0h-0.8zM25.0 48h0.8v1.0h-0.8zM0.0 50h0.8v1.0h-0.8zM1.0 50h0.8v1.0h-0.8zM2.0 50h0.8v1.0h-0.8zM3.0 50h0.8v1.0h-0.8zM4.0 50h0.8v1.0h-0.8zM5.0 50h0.8v1.0h-0.8zM6.0 50h0.8v1.0h-0.8zM7.0 50h0.8v1.0h-0.8zM8.0 50h0.8v1.0h-0.8zM9.0 50h0.8v1.0h-0.8zM21.0 50h0.8v1.0h-0.8zM22.0 50h0.8v1.0h-0.8zM23.0 50h0.8v1.0h-0.8zM24.0 50h0.8v1.0h-0.8zM25.0 50h0.8v1.0h-0.8zM0.0 52h0.8v1.0h-0.8zM1.0 52h0.8v1.0h-0.8zM2.0 52h0.8v1.0h-0.8zM3.0 52h0.8v1.0h-0.8zM4.0 52h0.8v1.0h-0.8zM5.0 52h0.8v1.0h-0.8zM6.0 52h0.8v1.0h-0.8zM7.0 52h0.8v1.0h-0.8zM8.0 52h0.8v1.0h-0.8zM9.0 52h0.8v1.0h-0.8zM21.0 52h0.8v1.0h-0.8zM22.0 52h0.8v1.0h-0.8zM23.0 52h0.8v1.0h-0.8zM24.0 52h0.8v1.0h-0.8zM25.0 52h0.8v1.0h-0.8zM0.0 54h0.8v1.0h-0.8zM1.0 54h0.8v1.0h-0.8zM2.0 54h0.8v1.0h-0.8zM3.0 54h0.8v1.0h-0.8zM4.0 54h0.8v1.0h-0.8zM5.0 54h0.8v1.0h-0.8zM6.0 54h0.8v1.0h-0.8zM7.0 54h0.8v1.0h-0.8zM8.0 54h0.8v1.0h-0.8zM9.0 54h0.8v1.0h-0.8zM15.0 54h0.8v1.0h-0.8zM16.0 54h0.8v1.0h-0.8zM17.0 54h0.8v1.0h-0.8zM18.0 54h0.8v1.0h-0.8zM19.0 54h0.8v1.0h-0.8zM20.0 54h0.8v1.0h-0.8zM21.0 54h0.8v1.0h-0.8zM22.0 54h0.8v1.0h-0.8zM23.0 54h0.8v1.0h-0.8zM24.0 54h0.8v1.0h-0.8zM25.0 54h0.8v1.0h-0.8zM0.0 56h0.8v1.0h-0.8zM1.0 56h0.8v1.0h-0.8zM2.0 56h0.8v1.0h-0.8zM3.0 56h0.8v1.0h-0.8zM4.0 56h0.8v1.0h-0.8zM5.0 56h0.8v1.0h-0.8zM6.0 56h0.8v1.0h-0.8zM7.0 56h0.8v1.0h-0.8zM8.0 56h0.8v1.0h-0.8zM9.0 56h0.8v1.0h-0.8zM22.0 56h0.8v1.0h-0.8zM23.0 56h0.8v1.0h-0.8zM24.0 56h0.8v1.0h-0.8zM25.0 56h0.8v1.0h-0.8zM0.0 58h0.8v1.0h-0.8zM1.0 58h0.8v1.0h-0.8zM2.0 58h0.8v1.0h-0.8zM3.0 58h0.8v1.0h-0.8zM4.0 58h0.8v1.0h-0.8zM5.0 58h0.8v1.0h-0.8zM6.0 58h0.8v1.0h-0.8zM7.0 58h0.8v1.0h-0.8zM8.0 58h0.8v1.0h-0.8zM9.0 58h0.8v1.0h-0.8zM22.0 58h0.8v1.0h-0.8zM23.0 58h0.8v1.0h-0.8zM24.0 58h0.8v1.0h-0.8zM25.0 58h0.8v1.0h-0.8zM0.0 62h0.8v1.0h-0.8zM1.0 62h0.8v1.0h-0.8zM2.0 62h0.8v1.0h-0.8zM3.0 62h0.8v1.0h-0.8zM4.0 62h0.8v1.0h-0.8zM5.0 62h0.8v1.0h-0.8zM7.0 62h0.8v1.0h-0.8zM8.0 62h0.8v1.0h-0.8zM9.0 62h0.8v1.0h-0.8zM10.0 62h0.8v1.0h-0.8zM11.0 62h0.8v1.0h-0.8zM12.0 62h0.8v1.0h-0.8zM13.0 62h0.8v1.0h-0.8zM14.0 62h0.8v1.0h-0.8zM15.0 62h0.8v1.0h-0.8zM16.0 62h0.8v1.0h-0.8zM0.0 68h0.8v1.0h-0.8zM1.0 68h0.8v1.0h-0.8zM2.0 68h0.8v1.0h-0.8zM3.0 68h0.8v1.0h-0.8zM4.0 68h0.8v1.0h-0.8zM5.0 68h0.8v1.0h-0.8zM6.0 68h0.8v1.0h-0.8zM7.0 68h0.8v1.0h-0.8zM8.0 68h0.8v1.0h-0.8zM9.0 68h0.8v1.0h-0.8zM14.0 68h0.8v1.0h-0.8zM0.0 70h0.8v1.0h-0.8zM1.0 70h0.8v1.0h-0.8zM2.0 70h0.8v1.0h-0.8zM3.0 70h0.8v1.0h-0.8zM4.0 70h0.8v1.0h-0.8zM5.0 70h0.8v1.0h-0.8zM6.0 70h0.8v1.0h-0.8zM7.0 70h0.8v1.0h-0.8zM8.0 70h0.8v1.0h-0.8zM9.0 70h0.8v1.0h-0.8zM14.0 70h0.8v1.0h-0.8zM0.0 72h0.8v1.0h-0.8zM1.0 72h0.8v1.0h-0.8zM2.0 72h0.8v1.0h-0.8zM3.0 72h0.8v1.0h-0.8zM4.0 72h0.8v1.0h-0.8zM5.0 72h0.8v1.0h-0.8zM6.0 72h0.8v1.0h-0.8zM7.0 72h0.8v1.0h-0.8zM8.0 72h0.8v1.0h-0.8zM9.0 72h0.8v1.0h-0.8zM14.0 72h0.8v1.0h-0.8zM0.0 74h0.8v1.0h-0.8zM1.0 74h0.8v1.0h-0.8zM2.0 74h0.8v1.0h-0.8zM3.0 74h0.8v1.0h-0.8zM4.0 74h0.8v1.0h-0.8zM5.0 74h0.8v1.0h-0.8zM6.0 74h0.8v1.0h-0.8zM7.0 74h0.8v1.0h-0.8zM8.0 74h0.8v1.0h-0.8zM9.0 74h0.8v1.0h-0.8zM10.0 74h0.8v1.0h-0.8zM21.0 74h0.8v1.0h-0.8zM22.0 74h0.8v1.0h-0.8zM23.0 74h0.8v1.0h-0.8zM24.0 74h0.8v1.0h-0.8zM25.0 74h0.8v1.0h-0.8zM0.0 76h0.8v1.0h-0.8zM1.0 76h0.8v1.0h-0.8zM2.0 76h0.8v1.0h-0.8zM3.0 76h0.8v1.0h-0.8zM4.0 76h0.8v1.0h-0.8zM5.0 76h0.8v1.0h-0.8zM6.0 76h0.8v1.0h-0.8zM7.0 76h0.8v1.0h-0.8zM8.0 76h0.8v1.0h-0.8zM9.0 76h0.8v1.0h-0.8zM21.0 76h0.8v1.0h-0.8zM22.0 76h0.8v1.0h-0.8zM23.0 76h0.8v1.0h-0.8zM24.0 76h0.8v1.0h-0.8zM25.0 76h0.8v1.0h-0.8zM0.0 78h0.8v1.0h-0.8zM1.0 78h0.8v1.0h-0.8zM2.0 78h0.8v1.0h-0.8zM3.0 78h0.8v1.0h-0.8zM4.0 78h0.8v1.0h-0.8zM5.0 78h0.8v1.0h-0.8zM6.0 78h0.8v1.0h-0.8zM7.0 78h0.8v1.0h-0.8zM8.0 78h0.8v1.0h-0.8zM9.0 78h0.8v1.0h-0.8zM21.0 78h0.8v1.0h-0.8zM22.0 78h0.8v1.0h-0.8zM23.0 78h0.8v1.0h-0.8zM24.0 78h0.8v1.0h-0.8zM25.0 78h0.8v1.0h-0.8zM0.0 80h0.8v1.0h-0.8zM1.0 80h0.8v1.0h-0.8zM2.0 80h0.8v1.0h-0.8zM3.0 80h0.8v1.0h-0.8zM4.0 80h0.8v1.0h-0.8zM5.0 80h0.8v1.0h-0.8zM6.0 80h0.8v1.0h-0.8zM7.0 80h0.8v1.0h-0.8zM8.0 80h0.8v1.0h-0.8zM9.0 80h0.8v1.0h-0.8zM15.0 80h0.8v1.0h-0.8zM16.0 80h0.8v1.0h-0.8zM17.0 80h0.8v1.0h-0.8zM18.0 80h0.8v1.0h-0.8zM19.0 80h0.8v1.0h-0.8zM20.0 80h0.8v1.0h-0.8zM21.0 80h0.8v1.0h-0.8zM22.0 80h0.8v1.0h-0.8zM23.0 80h0.8v1.0h-0.8zM24.0 80h0.8v1.0h-0.8zM25.0 80h0.8v1.0h-0.8zM0.0 82h0.8v1.0h-0.8zM1.0 82h0.8v1.0h-0.8zM2.0 82h0.8v1.0h-0.8zM3.0 82h0.8v1.0h-0.8zM4.0 82h0.8v1.0h-0.8zM5.0 82h0.8v1.0h-0.8zM6.0 82h0.8v1.0h-0.8zM7.0 82h0.8v1.0h-0.8zM8.0 82h0.8v1.0h-0.8zM9.0 82h0.8v1.0h-0.8zM22.0 82h0.8v1.0h-0.8zM23.0 82h0.8v1.0h-0.8zM24.0 82h0.8v1.0h-0.8zM25.0 82h0.8v1.0h-0.8zM0.0 84h0.8v1.0h-0.8zM1.0 84h0.8v1.0h-0.8zM2.0 84h0.8v1.0h-0.8zM3.0 84h0.8v1.0h-0.8zM4.0 84h0.8v1.0h-0.8zM5.0 84h0.8v1.0h-0.8zM6.0 84h0.8v1.0h-0.8zM7.0 84h0.8v1.0h-0.8zM8.0 84h0.8v1.0h-0.8zM9.0 84h0.8v1.0h-0.8zM22.0 84h0.8v1.0h-0.8zM23.0 84h0.8v1.0h-0.8zM24.0 84h0.8v1.0h-0.8zM25.0 84h0.8v1.0h-0.8zM0.0 86h0.8v1.0h-0.8zM1.0 86h0.8v1.0h-0.8zM2.0 86h0.8v1.0h-0.8zM3.0 86h0.8v1.0h-0.8zM4.0 86h0.8v1.0h-0.8zM5.0 86h0.8v1.0h-0.8zM6.0 86h0.8v1.0h-0.8zM7.0 86h0.8v1.0h-0.8zM8.0 86h0.8v1.0h-0.8zM9.0 86h0.8v1.0h-0.8zM22.0 86h0.8v1.0h-0.8zM23.0 86h0.8v1.0h-0.8zM24.0 86h0.8v1.0h-0.8zM25.0 86h0.8v1.0h-0.8zM0.0 90h0.8v1.0h-0.8zM1.0 90h0.8v1.0h-0.8zM2.0 90h0.8v1.0h-0.8zM3.0 90h0.8v1.0h-0.8zM4.0 90h0.8v1.0h-0.8zM5.0 90h0.8v1.0h-0.8zM7.0 90h0.8v1.0h-0.8zM8.0 90h0.8v1.0h-0.8zM9.0 90h0.8v1.0h-0.8zM10.0 90h0.8v1.0h-0.8zM11.0 90h0.8v1.0h-0.8zM12.0 90h0.8v1.0h-0.8zM13.0 90h0.8v1.0h-0.8zM14.0 90h0.8v1.0h-0.8zM15.0 90h0.8v1.0h-0.8zM16.0 90h0.8v1.0h-0.8zM0.0 96h0.8v1.0h-0.8zM1.0 96h0.8v1.0h-0.8zM2.0 96h0.8v1.0h-0.8zM3.0 96h0.8v1.0h-0.8zM4.0 96h0.8v1.0h-0.8zM5.0 96h0.8v1.0h-0.8zM6.0 96h0.8v1.0h-0.8zM7.0 96h0.8v1.0h-0.8zM8.0 96h0.8v1.0h-0.8zM9.0 96h0.8v1.0h-0.8zM10.0 96h0.8v1.0h-0.8zM15.0 96h0.8v1.0h-0.8zM0.0 98h0.8v1.0h-0.8zM1.0 98h0.8v1.0h-0.8zM2.0 98h0.8v1.0h-0.8zM3.0 98h0.8v1.0h-0.8zM4.0 98h0.8v1.0h-0.8zM5.0 98h0.8v1.0h-0.8zM6.0 98h0.8v1.0h-0.8zM7.0 98h0.8v1.0h-0.8zM8.0 98h0.8v1.0h-0.8zM9.0 98h0.8v1.0h-0.8zM10.0 98h0.8v1.0h-0.8zM15.0 98h0.8v1.0h-0.8zM0.0 100h0.8v1.0h-0.8zM1.0 100h0.8v1.0h-0.8zM2.0 100h0.8v1.0h-0.8zM3.0 100h0.8v1.0h-0.8zM4.0 100h0.8v1.0h-0.8zM5.0 100h0.8v1.0h-0.8zM6.0 100h0.8v1.0h-0.8zM7.0 100h0.8v1.0h-0.8zM8.0 100h0.8v1.0h-0.8zM9.0 100h0.8v1.0h-0.8zM10.0 100h0.8v1.0h-0.8zM15.0 100h0.8v1.0h-0.8zM0.0 102h0.8v1.0h-0.8zM1.0 102h0.8v1.0h-0.8zM2.0 102h0.8v1.0h-0.8zM3.0 102h0.8v1.0h-0.8zM4.0 102h0.8v1.0h-0.8zM5.0 102h0.8v1.0h-0.8zM6.0 102h0.8v1.0h-0.8zM7.0 102h0.8v1.0h-0.8zM8.0 102h0.8v1.0h-0.8zM9.0 102h0.8v1.0h-0.8zM10.0 102h0.8v1.0h-0.8zM11.0 102h0.8v1.0h-0.8zM22.0 102h0.8v1.0h-0.8zM23.0 102h0.8v1.0h-0.8zM24.0 102h0.8v1.0h-0.8zM25.0 102h0.8v1.0h-0.8zM0.0 104h0.8v1.0h-0.8zM1.0 104h0.8v1.0h-0.8zM2.0 104h0.8v1.0h-0.8zM3.0 104h0.8v1.0h-0.8zM4.0 104h0.8v1.0h-0.8zM5.0 104h0.8v1.0h-0.8zM6.0 104h0.8v1.0h-0.8zM7.0 104h0.8v1.0h-0.8zM8.0 104h0.8v1.0h-0.8zM9.0 104h0.8v1.0h-0.8zM10.0 104h0.8v1.0h-0.8zM21.0 104h0.8v1.0h-0.8zM22.0 104h0.8v1.0h-0.8zM23.0 104h0.8v1.0h-0.8zM24.0 104h0.8v1.0h-0.8zM25.0 104h0.8v1.0h-0.8zM0.0 108h0.8v1.0h-0.8zM1.0 108h0.8v1.0h-0.8zM2.0 108h0.8v1.0h-0.8zM3.0 108h0.8v1.0h-0.8zM4.0 108h0.8v1.0h-0.8zM5.0 108h0.8v1.0h-0.8zM6.0 108h0.8v1.0h-0.8zM8.0 108h0.8v1.0h-0.8zM9.0 108h0.8v1.0h-0.8zM10.0 108h0.8v1.0h-0.8zM11.0 108h0.8v1.0h-0.8zM12.0 108h0.8v1.0h-0.8zM13.0 108h0.8v1.0h-0.8zM14.0 108h0.8v1.0h-0.8zM15.0 108h0.8v1.0h-0.8zM16.0 108h0.8v1.0h-0.8zM17.0 108h0.8v1.0h-0.8zM18.0 108h0.8v1.0h-0.8zM0.0 114h0.8v1.0h-0.8zM1.0 114h0.8v1.0h-0.8zM2.0 114h0.8v1.0h-0.8zM3.0 114h0.8v1.0h-0.8zM4.0 114h0.8v1.0h-0.8zM5.0 114h0.8v1.0h-0.8zM6.0 114h0.8v1.0h-0.8zM7.0 114h0.8v1.0h-0.8zM8.0 114h0.8v1.0h-0.8zM9.0 114h0.8v1.0h-0.8zM10.0 114h0.8v1.0h-0.8zM11.0 114h0.8v1.0h-0.8zM16.0 114h0.8v1.0h-0.8zM0.0 116h0.8v1.0h-0.8zM1.0 116h0.8v1.0h-0.8zM2.0 116h0.8v1.0h-0.8zM3.0 116h0.8v1.0h-0.8zM4.0 116h0.8v1.0h-0.8zM5.0 116h0.8v1.0h-0.8zM6.0 116h0.8v1.0h-0.8zM7.0 116h0.8v1.0h-0.8zM8.0 116h0.8v1.0h-0.8zM9.0 116h0.8v1.0h-0.8zM10.0 116h0.8v1.0h-0.8zM11.0 116h0.8v1.0h-0.8zM16.0 116h0.8v1.0h-0.8zM0.0 118h0.8v1.0h-0.8zM1.0 118h0.8v1.0h-0.8zM2.0 118h0.8v1.0h-0.8zM3.0 118h0.8v1.0h-0.8zM4.0 118h0.8v1.0h-0.8zM5.0 118h0.8v1.0h-0.8zM6.0 118h0.8v1.0h-0.8zM7.0 118h0.8v1.0h-0.8zM8.0 118h0.8v1.0h-0.8zM9.0 118h0.8v1.0h-0.8zM10.0 118h0.8v1.0h-0.8zM11.0 118h0.8v1.0h-0.8zM16.0 118h0.8v1.0h-0.8zM0.0 120h0.8v1.0h-0.8zM1.0 120h0.8v1.0h-0.8zM2.0 120h0.8v1.0h-0.8zM3.0 120h0.8v1.0h-0.8zM4.0 120h0.8v1.0h-0.8zM5.0 120h0.8v1.0h-0.8zM6.0 120h0.8v1.0h-0.8zM7.0 120h0.8v1.0h-0.8zM8.0 120h0.8v1.0h-0.8zM9.0 120h0.8v1.0h-0.8zM10.0 120h0.8v1.0h-0.8zM11.0 120h0.8v1.0h-0.8zM12.0 120h0.8v1.0h-0.8zM23.0 120h0.8v1.0h-0.8zM24.0 120h0.8v1.0h-0.8zM25.0 120h0.8v1.0h-0.8zM0.0 122h0.8v1.0h-0.8zM1.0 122h0.8v1.0h-0.8zM2.0 122h0.8v1.0h-0.8zM3.0 122h0.8v1.0h-0.8zM4.0 122h0.8v1.0h-0.8zM5.0 122h0.8v1.0h-0.8zM6.0 122h0.8v1.0h-0.8zM7.0 122h0.8v1.0h-0.8zM8.0 122h0.8v1.0h-0.8zM9.0 122h0.8v1.0h-0.8zM10.0 122h0.8v1.0h-0.8zM11.0 122h0.8v1.0h-0.8zM22.0 122h0.8v1.0h-0.8zM23.0 122h0.8v1.0h-0.8zM24.0 122h0.8v1.0h-0.8zM25.0 122h0.8v1.0h-0.8zM0.0 124h0.8v1.0h-0.8zM1.0 124h0.8v1.0h-0.8zM2.0 124h0.8v1.0h-0.8zM3.0 124h0.8v1.0h-0.8zM4.0 124h0.8v1.0h-0.8zM5.0 124h0.8v1.0h-0.8zM6.0 124h0.8v1.0h-0.8zM7.0 124h0.8v1.0h-0.8zM8.0 124h0.8v1.0h-0.8zM9.0 124h0.8v1.0h-0.8zM10.0 124h0.8v1.0h-0.8zM11.0 124h0.8v1.0h-0.8zM22.0 124h0.8v1.0h-0.8zM23.0 124h0.8v1.0h-0.8zM24.0 124h0.8v1.0h-0.8zM25.0 124h0.8v1.0h-0.8zM0.0 126h0.8v1.0h-0.8zM1.0 126h0.8v1.0h-0.8zM2.0 126h0.8v1.0h-0.8zM3.0 126h0.8v1.0h-0.8zM4.0 126h0.8v1.0h-0.8zM5.0 126h0.8v1.0h-0.8zM6.0 126h0.8v1.0h-0.8zM7.0 126h0.8v1.0h-0.8zM8.0 126h0.8v1.0h-0.8zM9.0 126h0.8v1.0h-0.8zM10.0 126h0.8v1.0h-0.8zM11.0 126h0.8v1.0h-0.8zM16.0 126h0.8v1.0h-0.8zM17.0 126h0.8v1.0h-0.8zM18.0 126h0.8v1.0h-0.8zM19.0 126h0.8v1.0h-0.8zM20.0 126h0.8v1.0h-0.8zM21.0 126h0.8v1.0h-0.8zM22.0 126h0.8v1.0h-0.8zM23.0 126h0.8v1.0h-0.8zM24.0 126h0.8v1.0h-0.8zM25.0 126h0.8v1.0h-0.8zM0.0 128h0.8v1.0h-0.8zM1.0 128h0.8v1.0h-0.8zM2.0 128h0.8v1.0h-0.8zM3.0 128h0.8v1.0h-0.8zM4.0 128h0.8v1.0h-0.8zM5.0 128h0.8v1.0h-0.8zM6.0 128h0.8v1.0h-0.8zM7.0 128h0.8v1.0h-0.8zM8.0 128h0.8v1.0h-0.8zM9.0 128h0.8v1.0h-0.8zM10.0 128h0.8v1.0h-0.8zM11.0 128h0.8v1.0h-0.8zM23.0 128h0.8v1.0h-0.8zM24.0 128h0.8v1.0h-0.8zM25.0 128h0.8v1.0h-0.8zM0.0 130h0.8v1.0h-0.8zM1.0 130h0.8v1.0h-0.8zM2.0 130h0.8v1.0h-0.8zM3.0 130h0.8v1.0h-0.8zM4.0 130h0.8v1.0h-0.8zM5.0 130h0.8v1.0h-0.8zM6.0 130h0.8v1.0h-0.8zM7.0 130h0.8v1.0h-0.8zM8.0 130h0.8v1.0h-0.8zM9.0 130h0.8v1.0h-0.8zM10.0 130h0.8v1.0h-0.8zM11.0 130h0.8v1.0h-0.8zM23.0 130h0.8v1.0h-0.8zM24.0 130h0.8v1.0h-0.8zM25.0 130h0.8v1.0h-0.8zM0.0 132h0.8v1.0h-0.8zM1.0 132h0.8v1.0h-0.8zM2.0 132h0.8v1.0h-0.8zM3.0 132h0.8v1.0h-0.8zM4.0 132h0.8v1.0h-0.8zM5.0 132h0.8v1.0h-0.8zM6.0 132h0.8v1.0h-0.8zM7.0 132h0.8v1.0h-0.8zM8.0 132h0.8v1.0h-0.8zM9.0 132h0.8v1.0h-0.8zM10.0 132h0.8v1.0h-0.8zM11.0 132h0.8v1.0h-0.8zM23.0 132h0.8v1.0h-0.8zM24.0 132h0.8v1.0h-0.8zM25.0 132h0.8v1.0h-0.8zM0.0 134h0.8v1.0h-0.8zM1.0 134h0.8v1.0h-0.8zM2.0 134h0.8v1.0h-0.8zM3.0 134h0.8v1.0h-0.8zM4.0 134h0.8v1.0h-0.8zM5.0 134h0.8v1.0h-0.8zM6.0 134h0.8v1.0h-0.8zM7.0 134h0.8v1.0h-0.8zM8.0 134h0.8v1.0h-0.8zM9.0 134h0.8v1.0h-0.8zM10.0 134h0.8v1.0h-0.8zM11.0 134h0.8v1.0h-0.8zM23.0 134h0.8v1.0h-0.8zM24.0 134h0.8v1.0h-0.8zM25.0 134h0.8v1.0h-0.8zM0.0 136h0.8v1.0h-0.8zM1.0 136h0.8v1.0h-0.8zM2.0 136h0.8v1.0h-0.8zM3.0 136h0.8v1.0h-0.8zM4.0 136h0.8v1.0h-0.8zM5.0 136h0.8v1.0h-0.8zM6.0 136h0.8v1.0h-0.8zM7.0 136h0.8v1.0h-0.8zM8.0 136h0.8v1.0h-0.8zM9.0 136h0.8v1.0h-0.8zM10.0 136h0.8v1.0h-0.8zM11.0 136h0.8v1.0h-0.8zM23.0 136h0.8v1.0h-0.8zM24.0 136h0.8v1.0h-0.8zM25.0 136h0.8v1.0h-0.8zM0.0 138h0.8v1.0h-0.8zM1.0 138h0.8v1.0h-0.8zM2.0 138h0.8v1.0h-0.8zM3.0 138h0.8v1.0h-0.8zM4.0 138h0.8v1.0h-0.8zM5.0 138h0.8v1.0h-0.8zM6.0 138h0.8v1.0h-0.8zM7.0 138h0.8v1.0h-0.8zM8.0 138h0.8v1.0h-0.8zM9.0 138h0.8v1.0h-0.8zM10.0 138h0.8v1.0h-0.8zM11.0 138h0.8v1.0h-0.8zM23.0 138h0.8v1.0h-0.8zM24.0 138h0.8v1.0h-0.8zM25.0 138h0.8v1.0h-0.8zM0.0 142h0.8v1.0h-0.8zM1.0 142h0.8v1.0h-0.8zM2.0 142h0.8v1.0h-0.8zM3.0 142h0.8v1.0h-0.8zM4.0 142h0.8v1.0h-0.8zM5.0 142h0.8v1.0h-0.8zM6.0 142h0.8v1.0h-0.8zM7.0 142h0.8v1.0h-0.8zM9.0 142h0.8v1.0h-0.8zM10.0 142h0.8v1.0h-0.8zM11.0 142h0.8v1.0h-0.8zM12.0 142h0.8v1.0h-0.8zM13.0 142h0.8v1.0h-0.8zM14.0 142h0.8v1.0h-0.8zM15.0 142h0.8v1.0h-0.8zM16.0 142h0.8v1.0h-0.8zM17.0 142h0.8v1.0h-0.8zM18.0 142h0.8v1.0h-0.8zM19.0 142h0.8v1.0h-0.8zM20.0 142h0.8v1.0h-0.8zM0.0 144h0.8v1.0h-0.8zM1.0 144h0.8v1.0h-0.8zM2.0 144h0.8v1.0h-0.8zM3.0 144h0.8v1.0h-0.8zM4.0 144h0.8v1.0h-0.8zM5.0 144h0.8v1.0h-0.8zM6.0 144h0.8v1.0h-0.8zM7.0 144h0.8v1.0h-0.8zM8.0 144h0.8v1.0h-0.8zM9.0 144h0.8v1.0h-0.8zM10.0 144h0.8v1.0h-0.8zM11.0 144h0.8v1.0h-0.8zM12.0 144h0.8v1.0h-0.8zM14.0 144h0.8v1.0h-0.8zM15.0 144h0.8v1.0h-0.8zM16.0 144h0.8v1.0h-0.8zM17.0 144h0.8v1.0h-0.8zM18.0 144h0.8v1.0h-0.8zM19.0 144h0.8v1.0h-0.8zM20.0 144h0.8v1.0h-0.8zM21.0 144h0.8v1.0h-0.8zM22.0 144h0.8v1.0h-0.8zM23.0 144h0.8v1.0h-0.8zM24.0 144h0.8v1.0h-0.8zM25.0 144h0.8v1.0h-0.8zM0.0 150h0.8v1.0h-0.8zM1.0 150h0.8v1.0h-0.8zM2.0 150h0.8v1.0h-0.8zM3.0 150h0.8v1.0h-0.8zM4.0 150h0.8v1.0h-0.8zM5.0 150h0.8v1.0h-0.8zM6.0 150h0.8v1.0h-0.8zM7.0 150h0.8v1.0h-0.8zM8.0 150h0.8v1.0h-0.8zM9.0 150h0.8v1.0h-0.8zM10.0 150h0.8v1.0h-0.8zM11.0 150h0.8v1.0h-0.8zM16.0 150h0.8v1.0h-0.8zM0.0 152h0.8v1.0h-0.8zM1.0 152h0.8v1.0h-0.8zM2.0 152h0.8v1.0h-0.8zM3.0 152h0.8v1.0h-0.8zM4.0 152h0.8v1.0h-0.8zM5.0 152h0.8v1.0h-0.8zM6.0 152h0.8v1.0h-0.8zM7.0 152h0.8v1.0h-0.8zM8.0 152h0.8v1.0h-0.8zM9.0 152h0.8v1.0h-0.8zM10.0 152h0.8v1.0h-0.8zM11.0 152h0.8v1.0h-0.8zM16.0 152h0.8v1.0h-0.8zM0.0 154h0.8v1.0h-0.8zM1.0 154h0.8v1.0h-0.8zM2.0 154h0.8v1.0h-0.8zM3.0 154h0.8v1.0h-0.8zM4.0 154h0.8v1.0h-0.8zM5.0 154h0.8v1.0h-0.8zM6.0 154h0.8v1.0h-0.8zM7.0 154h0.8v1.0h-0.8zM8.0 154h0.8v1.0h-0.8zM9.0 154h0.8v1.0h-0.8zM10.0 154h0.8v1.0h-0.8zM11.0 154h0.8v1.0h-0.8zM16.0 154h0.8v1.0h-0.8zM0.0 156h0.8v1.0h-0.8zM1.0 156h0.8v1.0h-0.8zM2.0 156h0.8v1.0h-0.8zM3.0 156h0.8v1.0h-0.8zM4.0 156h0.8v1.0h-0.8zM5.0 156h0.8v1.0h-0.8zM6.0 156h0.8v1.0h-0.8zM7.0 156h0.8v1.0h-0.8zM8.0 156h0.8v1.0h-0.8zM9.0 156h0.8v1.0h-0.8zM10.0 156h0.8v1.0h-0.8zM11.0 156h0.8v1.0h-0.8zM12.0 156h0.8v1.0h-0.8zM23.0 156h0.8v1.0h-0.8zM24.0 156h0.8v1.0h-0.8zM25.0 156h0.8v1.0h-0.8zM0.0 158h0.8v1.0h-0.8zM1.0 158h0.8v1.0h-0.8zM2.0 158h0.8v1.0h-0.8zM3.0 158h0.8v1.0h-0.8zM4.0 158h0.8v1.0h-0.8zM5.0 158h0.8v1.0h-0.8zM6.0 158h0.8v1.0h-0.8zM7.0 158h0.8v1.0h-0.8zM8.0 158h0.8v1.0h-0.8zM9.0 158h0.8v1.0h-0.8zM10.0 158h0.8v1.0h-0.8zM11.0 158h0.8v1.0h-0.8zM22.0 158h0.8v1.0h-0.8zM23.0 158h0.8v1.0h-0.8zM24.0 158h0.8v1.0h-0.8zM25.0 158h0.8v1.0h-0.8zM0.0 160h0.8v1.0h-0.8zM1.0 160h0.8v1.0h-0.8zM2.0 160h0.8v1.0h-0.8zM3.0 160h0.8v1.0h-0.8zM4.0 160h0.8v1.0h-0.8zM5.0 160h0.8v1.0h-0.8zM6.0 160h0.8v1.0h-0.8zM7.0 160h0.8v1.0h-0.8zM8.0 160h0.8v1.0h-0.8zM9.0 160h0.8v1.0h-0.8zM10.0 160h0.8v1.0h-0.8zM11.0 160h0.8v1.0h-0.8zM22.0 160h0.8v1.0h-0.8zM23.0 160h0.8v1.0h-0.8zM24.0 160h0.8v1.0h-0.8zM25.0 160h0.8v1.0h-0.8zM0.0 162h0.8v1.0h-0.8zM1.0 162h0.8v1.0h-0.8zM2.0 162h0.8v1.0h-0.8zM3.0 162h0.8v1.0h-0.8zM4.0 162h0.8v1.0h-0.8zM5.0 162h0.8v1.0h-0.8zM6.0 162h0.8v1.0h-0.8zM7.0 162h0.8v1.0h-0.8zM8.0 162h0.8v1.0h-0.8zM9.0 162h0.8v1.0h-0.8zM10.0 162h0.8v1.0h-0.8zM11.0 162h0.8v1.0h-0.8zM16.0 162h0.8v1.0h-0.8zM17.0 162h0.8v1.0h-0.8zM18.0 162h0.8v1.0h-0.8zM19.0 162h0.8v1.0h-0.8zM20.0 162h0.8v1.0h-0.8zM21.0 162h0.8v1.0h-0.8zM22.0 162h0.8v1.0h-0.8zM23.0 162h0.8v1.0h-0.8zM24.0 162h0.8v1.0h-0.8zM25.0 162h0.8v1.0h-0.8zM0.0 164h0.8v1.0h-0.8zM1.0 164h0.8v1.0h-0.8zM2.0 164h0.8v1.0h-0.8zM3.0 164h0.8v1.0h-0.8zM4.0 164h0.8v1.0h-0.8zM5.0 164h0.8v1.0h-0.8zM6.0 164h0.8v1.0h-0.8zM7.0 164h0.8v1.0h-0.8zM8.0 164h0.8v1.0h-0.8zM9.0 164h0.8v1.0h-0.8zM10.0 164h0.8v1.0h-0.8zM11.0 164h0.8v1.0h-0.8zM23.0 164h0.8v1.0h-0.8zM24.0 164h0.8v1.0h-0.8zM25.0 164h0.8v1.0h-0.8zM0.0 166h0.8v1.0h-0.8zM1.0 166h0.8v1.0h-0.8zM2.0 166h0.8v1.0h-0.8zM3.0 166h0.8v1.0h-0.8zM4.0 166h0.8v1.0h-0.8zM5.0 166h0.8v1.0h-0.8zM6.0 166h0.8v1.0h-0.8zM7.0 166h0.8v1.0h-0.8zM8.0 166h0.8v1.0h-0.8zM9.0 166h0.8v1.0h-0.8zM10.0 166h0.8v1.0h-0.8zM11.0 166h0.8v1.0h-0.8zM23.0 166h0.8v1.0h-0.8zM24.0 166h0.8v1.0h-0.8zM25.0 166h0.8v1.0h-0.8zM0.0 168h0.8v1.0h-0.8zM1.0 168h0.8v1.0h-0.8zM2.0 168h0.8v1.0h-0.8zM3.0 168h0.8v1.0h-0.8zM4.0 168h0.8v1.0h-0.8zM5.0 168h0.8v1.0h-0.8zM6.0 168h0.8v1.0h-0.8zM7.0 168h0.8v1.0h-0.8zM8.0 168h0.8v1.0h-0.8zM9.0 168h0.8v1.0h-0.8zM10.0 168h0.8v1.0h-0.8zM11.0 168h0.8v1.0h-0.8zM23.0 168h0.8v1.0h-0.8zM24.0 168h0.8v1.0h-0.8zM25.0 168h0.8v1.0h-0.8zM0.0 170h0.8v1.0h-0.8zM1.0 170h0.8v1.0h-0.8zM2.0 170h0.8v1.0h-0.8zM3.0 170h0.8v1.0h-0.8zM4.0 170h0.8v1.0h-0.8zM5.0 170h0.8v1.0h-0.8zM6.0 170h0.8v1.0h-0.8zM7.0 170h0.8v1.0h-0.8zM8.0 170h0.8v1.0h-0.8zM9.0 170h0.8v1.0h-0.8zM10.0 170h0.8v1.0h-0.8zM11.0 170h0.8v1.0h-0.8zM23.0 170h0.8v1.0h-0.8zM24.0 170h0.8v1.0h-0.8zM25.0 170h0.8v1.0h-0.8zM0.0 172h0.8v1.0h-0.8zM1.0 172h0.8v1.0h-0.8zM2.0 172h0.8v1.0h-0.8zM3.0 172h0.8v1.0h-0.8zM4.0 172h0.8v1.0h-0.8zM5.0 172h0.8v1.0h-0.8zM6.0 172h0.8v1.0h-0.8zM7.0 172h0.8v1.0h-0.8zM8.0 172h0.8v1.0h-0.8zM9.0 172h0.8v1.0h-0.8zM10.0 172h0.8v1.0h-0.8zM11.0 172h0.8v1.0h-0.8zM23.0 172h0.8v1.0h-0.8zM24.0 172h0.8v1.0h-0.8zM25.0 172h0.8v1.0h-0.8zM0.0 174h0.8v1.0h-0.8zM1.0 174h0.8v1.0h-0.8zM2.0 174h0.8v1.0h-0.8zM3.0 174h0.8v1.0h-0.8zM4.0 174h0.8v1.0h-0.8zM5.0 174h0.8v1.0h-0.8zM6.0 174h0.8v1.0h-0.8zM7.0 174h0.8v1.0h-0.8zM8.0 174h0.8v1.0h-0.8zM9.0 174h0.8v1.0h-0.8zM10.0 174h0.8v1.0h-0.8zM11.0 174h0.8v1.0h-0.8zM23.0 174h0.8v1.0h-0.8zM24.0 174h0.8v1.0h-0.8zM25.0 174h0.8v1.0h-0.8zM0.0 178h0.8v1.0h-0.8zM1.0 178h0.8v1.0h-0.8zM2.0 178h0.8v1.0h-0.8zM3.0 178h0.8v1.0h-0.8zM4.0 178h0.8v1.0h-0.8zM5.0 178h0.8v1.0h-0.8zM6.0 178h0.8v1.0h-0.8zM7.0 178h0.8v1.0h-0.8zM9.0 178h0.8v1.0h-0.8zM10.0 178h0.8v1.0h-0.8zM11.0 178h0.8v1.0h-0.8zM12.0 178h0.8v1.0h-0.8zM13.0 178h0.8v1.0h-0.8zM14.0 178h0.8v1.0h-0.8zM15.0 178h0.8v1.0h-0.8zM16.0 178h0.8v1.0h-0.8zM17.0 178h0.8v1.0h-0.8zM18.0 178h0.8v1.0h-0.8zM19.0 178h0.8v1.0h-0.8zM20.0 178h0.8v1.0h-0.8zM0.0 184h0.8v1.0h-0.8zM1.0 184h0.8v1.0h-0.8zM2.0 184h0.8v1.0h-0.8zM3.0 184h0.8v1.0h-0.8zM4.0 184h0.8v1.0h-0.8zM5.0 184h0.8v1.0h-0.8zM6.0 184h0.8v1.0h-0.8zM7.0 184h0.8v1.0h-0.8zM8.0 184h0.8v1.0h-0.8zM13.0 184h0.8v1.0h-0.8zM0.0 186h0.8v1.0h-0.8zM1.0 186h0.8v1.0h-0.8zM2.0 186h0.8v1.0h-0.8zM3.0 186h0.8v1.0h-0.8zM4.0 186h0.8v1.0h-0.8zM5.0 186h0.8v1.0h-0.8zM6.0 186h0.8v1.0h-0.8zM7.0 186h0.8v1.0h-0.8zM8.0 186h0.8v1.0h-0.8zM13.0 186h0.8v1.0h-0.8zM0.0 188h0.8v1.0h-0.8zM1.0 188h0.8v1.0h-0.8zM2.0 188h0.8v1.0h-0.8zM3.0 188h0.8v1.0h-0.8zM4.0 188h0.8v1.0h-0.8zM5.0 188h0.8v1.0h-0.8zM6.0 188h0.8v1.0h-0.8zM7.0 188h0.8v1.0h-0.8zM8.0 188h0.8v1.0h-0.8zM13.0 188h0.8v1.0h-0.8zM0.0 190h0.8v1.0h-0.8zM1.0 190h0.8v1.0h-0.8zM2.0 190h0.8v1.0h-0.8zM3.0 190h0.8v1.0h-0.8zM4.0 190h0.8v1.0h-0.8zM5.0 190h0.8v1.0h-0.8zM6.0 190h0.8v1.0h-0.8zM7.0 190h0.8v1.0h-0.8zM8.0 190h0.8v1.0h-0.8zM9.0 190h0.8v1.0h-0.8zM21.0 190h0.8v1.0h-0.8zM22.0 190h0.8v1.0h-0.8zM23.0 190h0.8v1.0h-0.8zM24.0 190h0.8v1.0h-0.8zM25.0 190h0.8v1.0h-0.8zM0.0 192h0.8v1.0h-0.8zM1.0 192h0.8v1.0h-0.8zM2.0 192h0.8v1.0h-0.8zM3.0 192h0.8v1.0h-0.8zM4.0 192h0.8v1.0h-0.8zM5.0 192h0.8v1.0h-0.8zM6.0 192h0.8v1.0h-0.8zM7.0 192h0.8v1.0h-0.8zM8.0 192h0.8v1.0h-0.8zM21.0 192h0.8v1.0h-0.8zM22.0 192h0.8v1.0h-0.8zM23.0 192h0.8v1.0h-0.8zM24.0 192h0.8v1.0h-0.8zM25.0 192h0.8v1.0h-0.8zM0.0 194h0.8v1.0h-0.8zM1.0 194h0.8v1.0h-0.8zM2.0 194h0.8v1.0h-0.8zM3.0 194h0.8v1.0h-0.8zM4.0 194h0.8v1.0h-0.8zM5.0 194h0.8v1.0h-0.8zM6.0 194h0.8v1.0h-0.8zM7.0 194h0.8v1.0h-0.8zM8.0 194h0.8v1.0h-0.8zM21.0 194h0.8v1.0h-0.8zM22.0 194h0.8v1.0h-0.8zM23.0 194h0.8v1.0h-0.8zM24.0 194h0.8v1.0h-0.8zM25.0 194h0.8v1.0h-0.8zM0.0 196h0.8v1.0h-0.8zM1.0 196h0.8v1.0h-0.8zM2.0 196h0.8v1.0h-0.8zM3.0 196h0.8v1.0h-0.8zM4.0 196h0.8v1.0h-0.8zM5.0 196h0.8v1.0h-0.8zM6.0 196h0.8v1.0h-0.8zM7.0 196h0.8v1.0h-0.8zM8.0 196h0.8v1.0h-0.8zM15.0 196h0.8v1.0h-0.8zM16.0 196h0.8v1.0h-0.8zM17.0 196h0.8v1.0h-0.8zM18.0 196h0.8v1.0h-0.8zM19.0 196h0.8v1.0h-0.8zM20.0 196h0.8v1.0h-0.8zM21.0 196h0.8v1.0h-0.8zM22.0 196h0.8v1.0h-0.8zM23.0 196h0.8v1.0h-0.8zM24.0 196h0.8v1.0h-0.8zM0.0 198h0.8v1.0h-0.8zM1.0 198h0.8v1.0h-0.8zM2.0 198h0.8v1.0h-0.8zM3.0 198h0.8v1.0h-0.8zM4.0 198h0.8v1.0h-0.8zM5.0 198h0.8v1.0h-0.8zM6.0 198h0.8v1.0h-0.8zM7.0 198h0.8v1.0h-0.8zM8.0 198h0.8v1.0h-0.8zM22.0 198h0.8v1.0h-0.8zM23.0 198h0.8v1.0h-0.8zM24.0 198h0.8v1.0h-0.8zM25.0 198h0.8v1.0h-0.8zM0.0 200h0.8v1.0h-0.8zM1.0 200h0.8v1.0h-0.8zM2.0 200h0.8v1.0h-0.8zM3.0 200h0.8v1.0h-0.8zM4.0 200h0.8v1.0h-0.8zM5.0 200h0.8v1.0h-0.8zM6.0 200h0.8v1.0h-0.8zM7.0 200h0.8v1.0h-0.8zM8.0 200h0.8v1.0h-0.8zM22.0 200h0.8v1.0h-0.8zM23.0 200h0.8v1.0h-0.8zM24.0 200h0.8v1.0h-0.8zM25.0 200h0.8v1.0h-0.8zM0.0 202h0.8v1.0h-0.8zM1.0 202h0.8v1.0h-0.8zM2.0 202h0.8v1.0h-0.8zM3.0 202h0.8v1.0h-0.8zM4.0 202h0.8v1.0h-0.8zM5.0 202h0.8v1.0h-0.8zM6.0 202h0.8v1.0h-0.8zM7.0 202h0.8v1.0h-0.8zM8.0 202h0.8v1.0h-0.8zM22.0 202h0.8v1.0h-0.8zM23.0 202h0.8v1.0h-0.8zM24.0 202h0.8v1.0h-0.8zM25.0 202h0.8v1.0h-0.8zM0.0 204h0.8v1.0h-0.8zM1.0 204h0.8v1.0h-0.8zM2.0 204h0.8v1.0h-0.8zM3.0 204h0.8v1.0h-0.8zM4.0 204h0.8v1.0h-0.8zM5.0 204h0.8v1.0h-0.8zM6.0 204h0.8v1.0h-0.8zM7.0 204h0.8v1.0h-0.8zM8.0 204h0.8v1.0h-0.8zM22.0 204h0.8v1.0h-0.8zM23.0 204h0.8v1.0h-0.8zM24.0 204h0.8v1.0h-0.8zM25.0 204h0.8v1.0h-0.8zM0.0 206h0.8v1.0h-0.8zM1.0 206h0.8v1.0h-0.8zM2.0 206h0.8v1.0h-0.8zM3.0 206h0.8v1.0h-0.8zM4.0 206h0.8v1.0h-0.8zM5.0 206h0.8v1.0h-0.8zM6.0 206h0.8v1.0h-0.8zM7.0 206h0.8v1.0h-0.8zM8.0 206h0.8v1.0h-0.8zM22.0 206h0.8v1.0h-0.8zM23.0 206h0.8v1.0h-0.8zM24.0 206h0.8v1.0h-0.8zM25.0 206h0.8v1.0h-0.8zM0.0 208h0.8v1.0h-0.8zM1.0 208h0.8v1.0h-0.8zM2.0 208h0.8v1.0h-0.8zM3.0 208h0.8v1.0h-0.8zM4.0 208h0.8v1.0h-0.8zM5.0 208h0.8v1.0h-0.8zM6.0 208h0.8v1.0h-0.8zM7.0 208h0.8v1.0h-0.8zM8.0 208h0.8v1.0h-0.8zM22.0 208h0.8v1.0h-0.8zM23.0 208h0.8v1.0h-0.8zM24.0 208h0.8v1.0h-0.8zM25.0 208h0.8v1.0h-0.8zM0.0 212h0.8v1.0h-0.8zM1.0 212h0.8v1.0h-0.8zM2.0 212h0.8v1.0h-0.8zM3.0 212h0.8v1.0h-0.8zM4.0 212h0.8v1.0h-0.8zM6.0 212h0.8v1.0h-0.8zM7.0 212h0.8v1.0h-0.8zM8.0 212h0.8v1.0h-0.8zM9.0 212h0.8v1.0h-0.8zM10.0 212h0.8v1.0h-0.8zM11.0 212h0.8v1.0h-0.8zM12.0 212h0.8v1.0h-0.8zM13.0 212h0.8v1.0h-0.8zM14.0 212h0.8v1.0h-0.8zM0.0 216h0.8v1.0h-0.8zM1.0 216h0.8v1.0h-0.8zM2.0 216h0.8v1.0h-0.8zM3.0 216h0.8v1.0h-0.8zM4.0 216h0.8v1.0h-0.8zM5.0 216h0.8v1.0h-0.8zM6.0 216h0.8v1.0h-0.8zM7.0 216h0.8v1.0h-0.8zM8.0 216h0.8v1.0h-0.8zM9.0 216h0.8v1.0h-0.8zM10.0 216h0.8v1.0h-0.8zM11.0 216h0.8v1.0h-0.8zM12.0 216h0.8v1.0h-0.8zM13.0 216h0.8v1.0h-0.8zM15.0 216h0.8v1.0h-0.8zM12.0 218h0.8v1.0h-0.8zM20.0 218h0.8v1.0h-0.8zM12.0 220h0.8v1.0h-0.8zM20.0 220h0.8v1.0h-0.8zM12.0 222h0.8v1.0h-0.8zM20.0 222h0.8v1.0h-0.8zM0.0 224h0.8v1.0h-0.8zM0.0 226h0.8v1.0h-0.8zM1.0 226h0.8v1.0h-0.8zM2.0 226h0.8v1.0h-0.8zM3.0 226h0.8v1.0h-0.8zM4.0 226h0.8v1.0h-0.8zM5.0 226h0.8v1.0h-0.8zM6.0 226h0.8v1.0h-0.8zM8.0 226h0.8v1.0h-0.8zM2.0 228h0.8v1.0h-0.8zM3.0 228h0.8v1.0h-0.8zM4.0 228h0.8v1.0h-0.8zM5.0 228h0.8v1.0h-0.8zM6.0 228h0.8v1.0h-0.8zM7.0 228h0.8v1.0h-0.8zM8.0 228h0.8v1.0h-0.8zM9.0 228h0.8v1.0h-0.8zM10.0 228h0.8v1.0h-0.8zM11.0 228h0.8v1.0h-0.8zM12.0 228h0.8v1.0h-0.8zM14.0 228h0.8v1.0h-0.8zM15.0 228h0.8v1.0h-0.8zM16.0 228h0.8v1.0h-0.8zM17.0 228h0.8v1.0h-0.8zM18.0 228h0.8v1.0h-0.8zM19.0 228h0.8v1.0h-0.8zM20.0 228h0.8v1.0h-0.8zM21.0 228h0.8v1.0h-0.8zM22.0 228h0.8v1.0h-0.8zM23.0 228h0.8v1.0h-0.8zM24.0 228h0.8v1.0h-0.8zM25.0 228h0.8v1.0h-0.8zM2.0 230h0.8v1.0h-0.8zM3.0 230h0.8v1.0h-0.8zM4.0 230h0.8v1.0h-0.8zM5.0 230h0.8v1.0h-0.8zM6.0 230h0.8v1.0h-0.8zM7.0 230h0.8v1.0h-0.8zM8.0 230h0.8v1.0h-0.8zM9.0 230h0.8v1.0h-0.8zM10.0 230h0.8v1.0h-0.8zM11.0 230h0.8v1.0h-0.8zM12.0 230h0.8v1.0h-0.8zM14.0 230h0.8v1.0h-0.8zM15.0 230h0.8v1.0h-0.8zM16.0 230h0.8v1.0h-0.8zM17.0 230h0.8v1.0h-0.8zM18.0 230h0.8v1.0h-0.8zM19.0 230h0.8v1.0h-0.8zM20.0 230h0.8v1.0h-0.8zM21.0 230h0.8v1.0h-0.8zM22.0 230h0.8v1.0h-0.8zM23.0 230h0.8v1.0h-0.8zM24.0 230h0.8v1.0h-0.8zM25.0 230h0.8v1.0h-0.8zM2.0 232h0.8v1.0h-0.8zM3.0 232h0.8v1.0h-0.8zM4.0 232h0.8v1.0h-0.8zM5.0 232h0.8v1.0h-0.8zM6.0 232h0.8v1.0h-0.8zM7.0 232h0.8v1.0h-0.8zM8.0 232h0.8v1.0h-0.8zM9.0 232h0.8v1.0h-0.8zM10.0 232h0.8v1.0h-0.8zM11.0 232h0.8v1.0h-0.8zM12.0 232h0.8v1.0h-0.8zM14.0 232h0.8v1.0h-0.8zM15.0 232h0.8v1.0h-0.8zM16.0 232h0.8v1.0h-0.8zM17.0 232h0.8v1.0h-0.8zM18.0 232h0.8v1.0h-0.8zM19.0 232h0.8v1.0h-0.8zM20.0 232h0.8v1.0h-0.8zM21.0 232h0.8v1.0h-0.8zM22.0 232h0.8v1.0h-0.8zM23.0 232h0.8v1.0h-0.8zM24.0 232h0.8v1.0h-0.8zM25.0 232h0.8v1.0h-0.8zM0.0 234h0.8v1.0h-0.8zM0.0 238h0.8v1.0h-0.8zM1.0 238h0.8v1.0h-0.8zM2.0 238h0.8v1.0h-0.8zM3.0 238h0.8v1.0h-0.8zM4.0 238h0.8v1.0h-0.8zM5.0 238h0.8v1.0h-0.8zM6.0 238h0.8v1.0h-0.8zM7.0 238h0.8v1.0h-0.8zM8.0 238h0.8v1.0h-0.8zM9.0 238h0.8v1.0h-0.8zM10.0 238h0.8v1.0h-0.8zM11.0 238h0.8v1.0h-0.8zM12.0 238h0.8v1.0h-0.8zM13.0 238h0.8v1.0h-0.8zM15.0 238h0.8v1.0h-0.8zM12.0 240h0.8v1.0h-0.8zM20.0 240h0.8v1.0h-0.8zM12.0 242h0.8v1.0h-0.8zM20.0 242h0.8v1.0h-0.8zM12.0 244h0.8v1.0h-0.8zM20.0 244h0.8v1.0h-0.8zM12.0 246h0.8v1.0h-0.8zM20.0 246h0.8v1.0h-0.8zM0.0 248h0.8v1.0h-0.8zM0.0 250h0.8v1.0h-0.8zM1.0 250h0.8v1.0h-0.8zM2.0 250h0.8v1.0h-0.8zM3.0 250h0.8v1.0h-0.8zM4.0 250h0.8v1.0h-0.8zM5.0 250h0.8v1.0h-0.8zM6.0 250h0.8v1.0h-0.8zM8.0 250h0.8v1.0h-0.8zM2.0 252h0.8v1.0h-0.8zM3.0 252h0.8v1.0h-0.8zM4.0 252h0.8v1.0h-0.8zM5.0 252h0.8v1.0h-0.8zM6.0 252h0.8v1.0h-0.8zM7.0 252h0.8v1.0h-0.8zM8.0 252h0.8v1.0h-0.8zM9.0 252h0.8v1.0h-0.8zM10.0 252h0.8v1.0h-0.8zM11.0 252h0.8v1.0h-0.8zM12.0 252h0.8v1.0h-0.8zM14.0 252h0.8v1.0h-0.8zM15.0 252h0.8v1.0h-0.8zM16.0 252h0.8v1.0h-0.8zM17.0 252h0.8v1.0h-0.8zM18.0 252h0.8v1.0h-0.8zM19.0 252h0.8v1.0h-0.8zM20.0 252h0.8v1.0h-0.8zM21.0 252h0.8v1.0h-0.8zM22.0 252h0.8v1.0h-0.8zM23.0 252h0.8v1.0h-0.8zM24.0 252h0.8v1.0h-0.8zM25.0 252h0.8v1.0h-0.8zM2.0 254h0.8v1.0h-0.8zM3.0 254h0.8v1.0h-0.8zM4.0 254h0.8v1.0h-0.8zM5.0 254h0.8v1.0h-0.8zM6.0 254h0.8v1.0h-0.8zM7.0 254h0.8v1.0h-0.8zM8.0 254h0.8v1.0h-0.8zM9.0 254h0.8v1.0h-0.8zM10.0 254h0.8v1.0h-0.8zM11.0 254h0.8v1.0h-0.8zM12.0 254h0.8v1.0h-0.8zM14.0 254h0.8v1.0h-0.8zM15.0 254h0.8v1.0h-0.8zM16.0 254h0.8v1.0h-0.8zM17.0 254h0.8v1.0h-0.8zM18.0 254h0.8v1.0h-0.8zM19.0 254h0.8v1.0h-0.8zM20.0 254h0.8v1.0h-0.8zM21.0 254h0.8v1.0h-0.8zM22.0 254h0.8v1.0h-0.8zM23.0 254h0.8v1.0h-0.8zM24.0 254h0.8v1.0h-0.8zM25.0 254h0.8v1.0h-0.8zM2.0 256h0.8v1.0h-0.8zM3.0 256h0.8v1.0h-0.8zM4.0 256h0.8v1.0h-0.8zM5.0 256h0.8v1.0h-0.8zM6.0 256h0.8v1.0h-0.8zM7.0 256h0.8v1.0h-0.8zM8.0 256h0.8v1.0h-0.8zM9.0 256h0.8v1.0h-0.8zM10.0 256h0.8v1.0h-0.8zM11.0 256h0.8v1.0h-0.8zM12.0 256h0.8v1.0h-0.8zM14.0 256h0.8v1.0h-0.8zM15.0 256h0.8v1.0h-0.8zM16.0 256h0.8v1.0h-0.8zM17.0 256h0.8v1.0h-0.8zM18.0 256h0.8v1.0h-0.8zM19.0 256h0.8v1.0h-0.8zM20.0 256h0.8v1.0h-0.8zM21.0 256h0.8v1.0h-0.8zM22.0 256h0.8v1.0h-0.8zM23.0 256h0.8v1.0h-0.8zM24.0 256h0.8v1.0h-0.8zM25.0 256h0.8v1.0h-0.8zM2.0 258h0.8v1.0h-0.8zM3.0 258h0.8v1.0h-0.8zM4.0 258h0.8v1.0h-0.8zM5.0 258h0.8v1.0h-0.8zM6.0 258h0.8v1.0h-0.8zM7.0 258h0.8v1.0h-0.8zM8.0 258h0.8v1.0h-0.8zM9.0 258h0.8v1.0h-0.8zM10.0 258h0.8v1.0h-0.8zM11.0 258h0.8v1.0h-0.8zM12.0 258h0.8v1.0h-0.8zM14.0 258h0.8v1.0h-0.8zM15.0 258h0.8v1.0h-0.8zM16.0 258h0.8v1.0h-0.8zM17.0 258h0.8v1.0h-0.8zM18.0 258h0.8v1.0h-0.8zM19.0 258h0.8v1.0h-0.8zM20.0 258h0.8v1.0h-0.8zM21.0 258h0.8v1.0h-0.8zM22.0 258h0.8v1.0h-0.8zM23.0 258h0.8v1.0h-0.8zM24.0 258h0.8v1.0h-0.8zM25.0 258h0.8v1.0h-0.8zM0.0 260h0.8v1.0h-0.8zM0.0 264h0.8v1.0h-0.8zM1.0 264h0.8v1.0h-0.8zM2.0 264h0.8v1.0h-0.8zM3.0 264h0.8v1.0h-0.8zM4.0 264h0.8v1.0h-0.8zM5.0 264h0.8v1.0h-0.8zM6.0 264h0.8v1.0h-0.8zM7.0 264h0.8v1.0h-0.8zM8.0 264h0.8v1.0h-0.8zM9.0 264h0.8v1.0h-0.8zM10.0 264h0.8v1.0h-0.8zM11.0 264h0.8v1.0h-0.8zM12.0 264h0.8v1.0h-0.8zM13.0 264h0.8v1.0h-0.8zM15.0 264h0.8v1.0h-0.8zM12.0 266h0.8v1.0h-0.8zM20.0 266h0.8v1.0h-0.8zM12.0 268h0.8v1.0h-0.8zM20.0 268h0.8v1.0h-0.8zM12.0 270h0.8v1.0h-0.8zM20.0 270h0.8v1.0h-0.8zM0.0 272h0.8v1.0h-0.8zM0.0 274h0.8v1.0h-0.8zM1.0 274h0.8v1.0h-0.8zM2.0 274h0.8v1.0h-0.8zM3.0 274h0.8v1.0h-0.8zM4.0 274h0.8v1.0h-0.8zM5.0 274h0.8v1.0h-0.8zM6.0 274h0.8v1.0h-0.8zM8.0 274h0.8v1.0h-0.8zM2.0 276h0.8v1.0h-0.8zM3.0 276h0.8v1.0h-0.8zM4.0 276h0.8v1.0h-0.8zM5.0 276h0.8v1.0h-0.8zM6.0 276h0.8v1.0h-0.8zM7.0 276h0.8v1.0h-0.8zM8.0 276h0.8v1.0h-0.8zM9.0 276h0.8v1.0h-0.8zM10.0 276h0.8v1.0h-0.8zM11.0 276h0.8v1.0h-0.8zM12.0 276h0.8v1.0h-0.8zM14.0 276h0.8v1.0h-0.8zM15.0 276h0.8v1.0h-0.8zM16.0 276h0.8v1.0h-0.8zM17.0 276h0.8v1.0h-0.8zM18.0 276h0.8v1.0h-0.8zM19.0 276h0.8v1.0h-0.8zM20.0 276h0.8v1.0h-0.8zM21.0 276h0.8v1.0h-0.8zM22.0 276h0.8v1.0h-0.8zM23.0 276h0.8v1.0h-0.8zM24.0 276h0.8v1.0h-0.8zM25.0 276h0.8v1.0h-0.8zM2.0 278h0.8v1.0h-0.8zM3.0 278h0.8v1.0h-0.8zM4.0 278h0.8v1.0h-0.8zM5.0 278h0.8v1.0h-0.8zM6.0 278h0.8v1.0h-0.8zM7.0 278h0.8v1.0h-0.8zM8.0 278h0.8v1.0h-0.8zM9.0 278h0.8v1.0h-0.8zM10.0 278h0.8v1.0h-0.8zM11.0 278h0.8v1.0h-0.8zM12.0 278h0.8v1.0h-0.8zM14.0 278h0.8v1.0h-0.8zM15.0 278h0.8v1.0h-0.8zM16.0 278h0.8v1.0h-0.8zM17.0 278h0.8v1.0h-0.8zM18.0 278h0.8v1.0h-0.8zM19.0 278h0.8v1.0h-0.8zM20.0 278h0.8v1.0h-0.8zM21.0 278h0.8v1.0h-0.8zM22.0 278h0.8v1.0h-0.8zM23.0 278h0.8v1.0h-0.8zM24.0 278h0.8v1.0h-0.8zM25.0 278h0.8v1.0h-0.8zM2.0 280h0.8v1.0h-0.8zM3.0 280h0.8v1.0h-0.8zM4.0 280h0.8v1.0h-0.8zM5.0 280h0.8v1.0h-0.8zM6.0 280h0.8v1.0h-0.8zM7.0 280h0.8v1.0h-0.8zM8.0 280h0.8v1.0h-0.8zM9.0 280h0.8v1.0h-0.8zM10.0 280h0.8v1.0h-0.8zM11.0 280h0.8v1.0h-0.8zM12.0 280h0.8v1.0h-0.8zM14.0 280h0.8v1.0h-0.8zM15.0 280h0.8v1.0h-0.8zM16.0 280h0.8v1.0h-0.8zM17.0 280h0.8v1.0h-0.8zM18.0 280h0.8v1.0h-0.8zM19.0 280h0.8v1.0h-0.8zM20.0 280h0.8v1.0h-0.8zM21.0 280h0.8v1.0h-0.8zM22.0 280h0.8v1.0h-0.8zM23.0 280h0.8v1.0h-0.8zM24.0 280h0.8v1.0h-0.8zM25.0 280h0.8v1.0h-0.8zM0.0 282h0.8v1.0h-0.8zM0.0 286h0.8v1.0h-0.8zM1.0 286h0.8v1.0h-0.8zM2.0 286h0.8v1.0h-0.8zM3.0 286h0.8v1.0h-0.8zM4.0 286h0.8v1.0h-0.8zM5.0 286h0.8v1.0h-0.8zM6.0 286h0.8v1.0h-0.8zM7.0 286h0.8v1.0h-0.8zM8.0 286h0.8v1.0h-0.8zM9.0 286h0.8v1.0h-0.8zM10.0 286h0.8v1.0h-0.8zM11.0 286h0.8v1.0h-0.8zM12.0 286h0.8v1.0h-0.8zM13.0 286h0.8v1.0h-0.8zM15.0 286h0.8v1.0h-0.8zM12.0 288h0.8v1.0h-0.8zM20.0 288h0.8v1.0h-0.8zM12.0 290h0.8v1.0h-0.8zM20.0 290h0.8v1.0h-0.8zM12.0 292h0.8v1.0h-0.8zM20.0 292h0.8v1.0h-0.8zM0.0 294h0.8v1.0h-0.8zM0.0 296h0.8v1.0h-0.8zM1.0 296h0.8v1.0h-0.8zM2.0 296h0.8v1.0h-0.8zM3.0 296h0.8v1.0h-0.8zM4.0 296h0.8v1.0h-0.8zM5.0 296h0.8v1.0h-0.8zM6.0 296h0.8v1.0h-0.8zM8.0 296h0.8v1.0h-0.8zM2.0 298h0.8v1.0h-0.8zM3.0 298h0.8v1.0h-0.8zM4.0 298h0.8v1.0h-0.8zM5.0 298h0.8v1.0h-0.8zM6.0 298h0.8v1.0h-0.8zM7.0 298h0.8v1.0h-0.8zM8.0 298h0.8v1.0h-0.8zM9.0 298h0.8v1.0h-0.8zM10.0 298h0.8v1.0h-0.8zM11.0 298h0.8v1.0h-0.8zM12.0 298h0.8v1.0h-0.8zM14.0 298h0.8v1.0h-0.8zM15.0 298h0.8v1.0h-0.8zM16.0 298h0.8v1.0h-0.8zM17.0 298h0.8v1.0h-0.8zM18.0 298h0.8v1.0h-0.8zM19.0 298h0.8v1.0h-0.8zM20.0 298h0.8v1.0h-0.8zM21.0 298h0.8v1.0h-0.8zM22.0 298h0.8v1.0h-0.8zM23.0 298h0.8v1.0h-0.8zM24.0 298h0.8v1.0h-0.8zM25.0 298h0.8v1.0h-0.8zM2.0 300h0.8v1.0h-0.8zM3.0 300h0.8v1.0h-0.8zM4.0 300h0.8v1.0h-0.8zM5.0 300h0.8v1.0h-0.8zM6.0 300h0.8v1.0h-0.8zM7.0 300h0.8v1.0h-0.8zM8.0 300h0.8v1.0h-0.8zM9.0 300h0.8v1.0h-0.8zM10.0 300h0.8v1.0h-0.8zM11.0 300h0.8v1.0h-0.8zM12.0 300h0.8v1.0h-0.8zM14.0 300h0.8v1.0h-0.8zM15.0 300h0.8v1.0h-0.8zM16.0 300h0.8v1.0h-0.8zM17.0 300h0.8v1.0h-0.8zM18.0 300h0.8v1.0h-0.8zM19.0 300h0.8v1.0h-0.8zM20.0 300h0.8v1.0h-0.8zM21.0 300h0.8v1.0h-0.8zM22.0 300h0.8v1.0h-0.8zM23.0 300h0.8v1.0h-0.8zM24.0 300h0.8v1.0h-0.8zM25.0 300h0.8v1.0h-0.8zM2.0 302h0.8v1.0h-0.8zM3.0 302h0.8v1.0h-0.8zM4.0 302h0.8v1.0h-0.8zM5.0 302h0.8v1.0h-0.8zM6.0 302h0.8v1.0h-0.8zM7.0 302h0.8v1.0h-0.8zM8.0 302h0.8v1.0h-0.8zM9.0 302h0.8v1.0h-0.8zM10.0 302h0.8v1.0h-0.8zM11.0 302h0.8v1.0h-0.8zM12.0 302h0.8v1.0h-0.8zM14.0 302h0.8v1.0h-0.8zM15.0 302h0.8v1.0h-0.8zM16.0 302h0.8v1.0h-0.8zM17.0 302h0.8v1.0h-0.8zM18.0 302h0.8v1.0h-0.8zM19.0 302h0.8v1.0h-0.8zM20.0 302h0.8v1.0h-0.8zM21.0 302h0.8v1.0h-0.8zM22.0 302h0.8v1.0h-0.8zM23.0 302h0.8v1.0h-0.8zM24.0 302h0.8v1.0h-0.8zM25.0 302h0.8v1.0h-0.8zM0.0 304h0.8v1.0h-0.8zM0.0 308h0.8v1.0h-0.8zM1.0 308h0.8v1.0h-0.8zM2.0 308h0.8v1.0h-0.8zM3.0 308h0.8v1.0h-0.8zM4.0 308h0.8v1.0h-0.8zM5.0 308h0.8v1.0h-0.8zM6.0 308h0.8v1.0h-0.8zM7.0 308h0.8v1.0h-0.8zM8.0 308h0.8v1.0h-0.8zM9.0 308h0.8v1.0h-0.8zM10.0 308h0.8v1.0h-0.8zM11.0 308h0.8v1.0h-0.8zM12.0 308h0.8v1.0h-0.8zM13.0 308h0.8v1.0h-0.8zM15.0 308h0.8v1.0h-0.8zM12.0 310h0.8v1.0h-0.8zM20.0 310h0.8v1.0h-0.8zM12.0 312h0.8v1.0h-0.8zM20.0 312h0.8v1.0h-0.8zM0.0 314h0.8v1.0h-0.8zM0.0 316h0.8v1.0h-0.8zM1.0 316h0.8v1.0h-0.8zM2.0 316h0.8v1.0h-0.8zM3.0 316h0.8v1.0h-0.8zM4.0 316h0.8v1.0h-0.8zM5.0 316h0.8v1.0h-0.8zM6.0 316h0.8v1.0h-0.8zM8.0 316h0.8v1.0h-0.8zM2.0 318h0.8v1.0h-0.8zM3.0 318h0.8v1.0h-0.8zM4.0 318h0.8v1.0h-0.8zM5.0 318h0.8v1.0h-0.8zM6.0 318h0.8v1.0h-0.8zM7.0 318h0.8v1.0h-0.8zM8.0 318h0.8v1.0h-0.8zM9.0 318h0.8v1.0h-0.8zM10.0 318h0.8v1.0h-0.8zM11.0 318h0.8v1.0h-0.8zM12.0 318h0.8v1.0h-0.8zM14.0 318h0.8v1.0h-0.8zM15.0 318h0.8v1.0h-0.8zM16.0 318h0.8v1.0h-0.8zM17.0 318h0.8v1.0h-0.8zM18.0 318h0.8v1.0h-0.8zM19.0 318h0.8v1.0h-0.8zM20.0 318h0.8v1.0h-0.8zM21.0 318h0.8v1.0h-0.8zM22.0 318h0.8v1.0h-0.8zM23.0 318h0.8v1.0h-0.8zM24.0 318h0.8v1.0h-0.8zM25.0 318h0.8v1.0h-0.8zM2.0 320h0.8v1.0h-0.8zM3.0 320h0.8v1.0h-0.8zM4.0 320h0.8v1.0h-0.8zM5.0 320h0.8v1.0h-0.8zM6.0 320h0.8v1.0h-0.8zM7.0 320h0.8v1.0h-0.8zM8.0 320h0.8v1.0h-0.8zM9.0 320h0.8v1.0h-0.8zM10.0 320h0.8v1.0h-0.8zM11.0 320h0.8v1.0h-0.8zM12.0 320h0.8v1.0h-0.8zM14.0 320h0.8v1.0h-0.8zM15.0 320h0.8v1.0h-0.8zM16.0 320h0.8v1.0h-0.8zM17.0 320h0.8v1.0h-0.8zM18.0 320h0.8v1.0h-0.8zM19.0 320h0.8v1.0h-0.8zM20.0 320h0.8v1.0h-0.8zM21.0 320h0.8v1.0h-0.8zM22.0 320h0.8v1.0h-0.8zM23.0 320h0.8v1.0h-0.8zM24.0 320h0.8v1.0h-0.8zM25.0 320h0.8v1.0h-0.8zM0.0 322h0.8v1.0h-0.8zM0.0 326h0.8v1.0h-0.8zM1.0 326h0.8v1.0h-0.8zM2.0 326h0.8v1.0h-0.8zM3.0 326h0.8v1.0h-0.8zM4.0 326h0.8v1.0h-0.8zM5.0 326h0.8v1.0h-0.8zM6.0 326h0.8v1.0h-0.8zM7.0 326h0.8v1.0h-0.8zM8.0 326h0.8v1.0h-0.8zM9.0 326h0.8v1.0h-0.8zM10.0 326h0.8v1.0h-0.8zM11.0 326h0.8v1.0h-0.8zM12.0 326h0.8v1.0h-0.8zM13.0 326h0.8v1.0h-0.8zM15.0 326h0.8v1.0h-0.8zM12.0 328h0.8v1.0h-0.8zM20.0 328h0.8v1.0h-0.8zM12.0 330h0.8v1.0h-0.8zM20.0 330h0.8v1.0h-0.8zM12.0 332h0.8v1.0h-0.8zM20.0 332h0.8v1.0h-0.8zM12.0 334h0.8v1.0h-0.8zM20.0 334h0.8v1.0h-0.8zM12.0 336h0.8v1.0h-0.8zM20.0 336h0.8v1.0h-0.8zM0.0 338h0.8v1.0h-0.8zM0.0 340h0.8v1.0h-0.8zM1.0 340h0.8v1.0h-0.8zM2.0 340h0.8v1.0h-0.8zM3.0 340h0.8v1.0h-0.8zM4.0 340h0.8v1.0h-0.8zM5.0 340h0.8v1.0h-0.8zM6.0 340h0.8v1.0h-0.8zM8.0 340h0.8v1.0h-0.8zM2.0 342h0.8v1.0h-0.8zM3.0 342h0.8v1.0h-0.8zM4.0 342h0.8v1.0h-0.8zM5.0 342h0.8v1.0h-0.8zM6.0 342h0.8v1.0h-0.8zM7.0 342h0.8v1.0h-0.8zM8.0 342h0.8v1.0h-0.8zM9.0 342h0.8v1.0h-0.8zM10.0 342h0.8v1.0h-0.8zM11.0 342h0.8v1.0h-0.8zM12.0 342h0.8v1.0h-0.8zM14.0 342h0.8v1.0h-0.8zM15.0 342h0.8v1.0h-0.8zM16.0 342h0.8v1.0h-0.8zM17.0 342h0.8v1.0h-0.8zM18.0 342h0.8v1.0h-0.8zM19.0 342h0.8v1.0h-0.8zM20.0 342h0.8v1.0h-0.8zM21.0 342h0.8v1.0h-0.8zM22.0 342h0.8v1.0h-0.8zM23.0 342h0.8v1.0h-0.8zM24.0 342h0.8v1.0h-0.8zM25.0 342h0.8v1.0h-0.8zM2.0 344h0.8v1.0h-0.8zM3.0 344h0.8v1.0h-0.8zM4.0 344h0.8v1.0h-0.8zM5.0 344h0.8v1.0h-0.8zM6.0 344h0.8v1.0h-0.8zM7.0 344h0.8v1.0h-0.8zM8.0 344h0.8v1.0h-0.8zM9.0 344h0.8v1.0h-0.8zM10.0 344h0.8v1.0h-0.8zM11.0 344h0.8v1.0h-0.8zM12.0 344h0.8v1.0h-0.8zM14.0 344h0.8v1.0h-0.8zM15.0 344h0.8v1.0h-0.8zM16.0 344h0.8v1.0h-0.8zM17.0 344h0.8v1.0h-0.8zM18.0 344h0.8v1.0h-0.8zM19.0 344h0.8v1.0h-0.8zM20.0 344h0.8v1.0h-0.8zM21.0 344h0.8v1.0h-0.8zM22.0 344h0.8v1.0h-0.8zM23.0 344h0.8v1.0h-0.8zM24.0 344h0.8v1.0h-0.8zM25.0 344h0.8v1.0h-0.8zM2.0 346h0.8v1.0h-0.8zM3.0 346h0.8v1.0h-0.8zM4.0 346h0.8v1.0h-0.8zM5.0 346h0.8v1.0h-0.8zM6.0 346h0.8v1.0h-0.8zM7.0 346h0.8v1.0h-0.8zM8.0 346h0.8v1.0h-0.8zM9.0 346h0.8v1.0h-0.8zM10.0 346h0.8v1.0h-0.8zM11.0 346h0.8v1.0h-0.8zM12.0 346h0.8v1.0h-0.8zM14.0 346h0.8v1.0h-0.8zM15.0 346h0.8v1.0h-0.8zM16.0 346h0.8v1.0h-0.8zM17.0 346h0.8v1.0h-0.8zM18.0 346h0.8v1.0h-0.8zM19.0 346h0.8v1.0h-0.8zM20.0 346h0.8v1.0h-0.8zM21.0 346h0.8v1.0h-0.8zM22.0 346h0.8v1.0h-0.8zM23.0 346h0.8v1.0h-0.8zM24.0 346h0.8v1.0h-0.8zM25.0 346h0.8v1.0h-0.8zM2.0 348h0.8v1.0h-0.8zM3.0 348h0.8v1.0h-0.8zM4.0 348h0.8v1.0h-0.8zM5.0 348h0.8v1.0h-0.8zM6.0 348h0.8v1.0h-0.8zM7.0 348h0.8v1.0h-0.8zM8.0 348h0.8v1.0h-0.8zM9.0 348h0.8v1.0h-0.8zM10.0 348h0.8v1.0h-0.8zM11.0 348h0.8v1.0h-0.8zM12.0 348h0.8v1.0h-0.8zM14.0 348h0.8v1.0h-0.8zM15.0 348h0.8v1.0h-0.8zM16.0 348h0.8v1.0h-0.8zM17.0 348h0.8v1.0h-0.8zM18.0 348h0.8v1.0h-0.8zM19.0 348h0.8v1.0h-0.8zM20.0 348h0.8v1.0h-0.8zM21.0 348h0.8v1.0h-0.8zM22.0 348h0.8v1.0h-0.8zM23.0 348h0.8v1.0h-0.8zM24.0 348h0.8v1.0h-0.8zM25.0 348h0.8v1.0h-0.8zM2.0 350h0.8v1.0h-0.8zM3.0 350h0.8v1.0h-0.8zM4.0 350h0.8v1.0h-0.8zM5.0 350h0.8v1.0h-0.8zM6.0 350h0.8v1.0h-0.8zM7.0 350h0.8v1.0h-0.8zM8.0 350h0.8v1.0h-0.8zM9.0 350h0.8v1.0h-0.8zM10.0 350h0.8v1.0h-0.8zM11.0 350h0.8v1.0h-0.8zM12.0 350h0.8v1.0h-0.8zM14.0 350h0.8v1.0h-0.8zM15.0 350h0.8v1.0h-0.8zM16.0 350h0.8v1.0h-0.8zM17.0 350h0.8v1.0h-0.8zM18.0 350h0.8v1.0h-0.8zM19.0 350h0.8v1.0h-0.8zM20.0 350h0.8v1.0h-0.8zM21.0 350h0.8v1.0h-0.8zM22.0 350h0.8v1.0h-0.8zM23.0 350h0.8v1.0h-0.8zM24.0 350h0.8v1.0h-0.8zM25.0 350h0.8v1.0h-0.8zM0.0 352h0.8v1.0h-0.8zM0.0 356h0.8v1.0h-0.8zM1.0 356h0.8v1.0h-0.8zM2.0 356h0.8v1.0h-0.8zM3.0 356h0.8v1.0h-0.8zM4.0 356h0.8v1.0h-0.8zM5.0 356h0.8v1.0h-0.8zM6.0 356h0.8v1.0h-0.8zM7.0 356h0.8v1.0h-0.8zM8.0 356h0.8v1.0h-0.8zM9.0 356h0.8v1.0h-0.8zM10.0 356h0.8v1.0h-0.8zM11.0 356h0.8v1.0h-0.8zM12.0 356h0.8v1.0h-0.8zM13.0 356h0.8v1.0h-0.8zM15.0 356h0.8v1.0h-0.8zM12.0 358h0.8v1.0h-0.8zM20.0 358h0.8v1.0h-0.8zM12.0 360h0.8v1.0h-0.8zM20.0 360h0.8v1.0h-0.8zM12.0 362h0.8v1.0h-0.8zM20.0 362h0.8v1.0h-0.8zM12.0 364h0.8v1.0h-0.8zM20.0 364h0.8v1.0h-0.8zM12.0 366h0.8v1.0h-0.8zM20.0 366h0.8v1.0h-0.8zM12.0 368h0.8v1.0h-0.8zM20.0 368h0.8v1.0h-0.8zM12.0 370h0.8v1.0h-0.8zM20.0 370h0.8v1.0h-0.8zM12.0 372h0.8v1.0h-0.8zM20.0 372h0.8v1.0h-0.8zM12.0 374h0.8v1.0h-0.8zM20.0 374h0.8v1.0h-0.8zM0.0 376h0.8v1.0h-0.8zM0.0 378h0.8v1.0h-0.8zM1.0 378h0.8v1.0h-0.8zM2.0 378h0.8v1.0h-0.8zM3.0 378h0.8v1.0h-0.8zM4.0 378h0.8v1.0h-0.8zM5.0 378h0.8v1.0h-0.8zM6.0 378h0.8v1.0h-0.8zM8.0 378h0.8v1.0h-0.8zM2.0 380h0.8v1.0h-0.8zM3.0 380h0.8v1.0h-0.8zM4.0 380h0.8v1.0h-0.8zM5.0 380h0.8v1.0h-0.8zM6.0 380h0.8v1.0h-0.8zM7.0 380h0.8v1.0h-0.8zM8.0 380h0.8v1.0h-0.8zM9.0 380h0.8v1.0h-0.8zM10.0 380h0.8v1.0h-0.8zM11.0 380h0.8v1.0h-0.8zM12.0 380h0.8v1.0h-0.8zM14.0 380h0.8v1.0h-0.8zM15.0 380h0.8v1.0h-0.8zM16.0 380h0.8v1.0h-0.8zM17.0 380h0.8v1.0h-0.8zM18.0 380h0.8v1.0h-0.8zM19.0 380h0.8v1.0h-0.8zM20.0 380h0.8v1.0h-0.8zM21.0 380h0.8v1.0h-0.8zM22.0 380h0.8v1.0h-0.8zM23.0 380h0.8v1.0h-0.8zM24.0 380h0.8v1.0h-0.8zM25.0 380h0.8v1.0h-0.8zM2.0 382h0.8v1.0h-0.8zM3.0 382h0.8v1.0h-0.8zM4.0 382h0.8v1.0h-0.8zM5.0 382h0.8v1.0h-0.8zM6.0 382h0.8v1.0h-0.8zM7.0 382h0.8v1.0h-0.8zM8.0 382h0.8v1.0h-0.8zM9.0 382h0.8v1.0h-0.8zM10.0 382h0.8v1.0h-0.8zM11.0 382h0.8v1.0h-0.8zM12.0 382h0.8v1.0h-0.8zM14.0 382h0.8v1.0h-0.8zM15.0 382h0.8v1.0h-0.8zM16.0 382h0.8v1.0h-0.8zM17.0 382h0.8v1.0h-0.8zM18.0 382h0.8v1.0h-0.8zM19.0 382h0.8v1.0h-0.8zM20.0 382h0.8v1.0h-0.8zM21.0 382h0.8v1.0h-0.8zM22.0 382h0.8v1.0h-0.8zM23.0 382h0.8v1.0h-0.8zM24.0 382h0.8v1.0h-0.8zM25.0 382h0.8v1.0h-0.8zM2.0 384h0.8v1.0h-0.8zM3.0 384h0.8v1.0h-0.8zM4.0 384h0.8v1.0h-0.8zM5.0 384h0.8v1.0h-0.8zM6.0 384h0.8v1.0h-0.8zM7.0 384h0.8v1.0h-0.8zM8.0 384h0.8v1.0h-0.8zM9.0 384h0.8v1.0h-0.8zM10.0 384h0.8v1.0h-0.8zM11.0 384h0.8v1.0h-0.8zM12.0 384h0.8v1.0h-0.8zM14.0 384h0.8v1.0h-0.8zM15.0 384h0.8v1.0h-0.8zM16.0 384h0.8v1.0h-0.8zM17.0 384h0.8v1.0h-0.8zM18.0 384h0.8v1.0h-0.8zM19.0 384h0.8v1.0h-0.8zM20.0 384h0.8v1.0h-0.8zM21.0 384h0.8v1.0h-0.8zM22.0 384h0.8v1.0h-0.8zM23.0 384h0.8v1.0h-0.8zM24.0 384h0.8v1.0h-0.8zM25.0 384h0.8v1.0h-0.8zM2.0 386h0.8v1.0h-0.8zM3.0 386h0.8v1.0h-0.8zM4.0 386h0.8v1.0h-0.8zM5.0 386h0.8v1.0h-0.8zM6.0 386h0.8v1.0h-0.8zM7.0 386h0.8v1.0h-0.8zM8.0 386h0.8v1.0h-0.8zM9.0 386h0.8v1.0h-0.8zM10.0 386h0.8v1.0h-0.8zM11.0 386h0.8v1.0h-0.8zM12.0 386h0.8v1.0h-0.8zM14.0 386h0.8v1.0h-0.8zM15.0 386h0.8v1.0h-0.8zM16.0 386h0.8v1.0h-0.8zM17.0 386h0.8v1.0h-0.8zM18.0 386h0.8v1.0h-0.8zM19.0 386h0.8v1.0h-0.8zM20.0 386h0.8v1.0h-0.8zM21.0 386h0.8v1.0h-0.8zM22.0 386h0.8v1.0h-0.8zM23.0 386h0.8v1.0h-0.8zM24.0 386h0.8v1.0h-0.8zM25.0 386h0.8v1.0h-0.8zM2.0 388h0.8v1.0h-0.8zM3.0 388h0.8v1.0h-0.8zM4.0 388h0.8v1.0h-0.8zM5.0 388h0.8v1.0h-0.8zM6.0 388h0.8v1.0h-0.8zM7.0 388h0.8v1.0h-0.8zM8.0 388h0.8v1.0h-0.8zM9.0 388h0.8v1.0h-0.8zM10.0 388h0.8v1.0h-0.8zM11.0 388h0.8v1.0h-0.8zM12.0 388h0.8v1.0h-0.8zM14.0 388h0.8v1.0h-0.8zM15.0 388h0.8v1.0h-0.8zM16.0 388h0.8v1.0h-0.8zM17.0 388h0.8v1.0h-0.8zM18.0 388h0.8v1.0h-0.8zM19.0 388h0.8v1.0h-0.8zM20.0 388h0.8v1.0h-0.8zM21.0 388h0.8v1.0h-0.8zM22.0 388h0.8v1.0h-0.8zM23.0 388h0.8v1.0h-0.8zM24.0 388h0.8v1.0h-0.8zM25.0 388h0.8v1.0h-0.8zM2.0 390h0.8v1.0h-0.8zM3.0 390h0.8v1.0h-0.8zM4.0 390h0.8v1.0h-0.8zM5.0 390h0.8v1.0h-0.8zM6.0 390h0.8v1.0h-0.8zM7.0 390h0.8v1.0h-0.8zM8.0 390h0.8v1.0h-0.8zM9.0 390h0.8v1.0h-0.8zM10.0 390h0.8v1.0h-0.8zM11.0 390h0.8v1.0h-0.8zM12.0 390h0.8v1.0h-0.8zM14.0 390h0.8v1.0h-0.8zM15.0 390h0.8v1.0h-0.8zM16.0 390h0.8v1.0h-0.8zM17.0 390h0.8v1.0h-0.8zM18.0 390h0.8v1.0h-0.8zM19.0 390h0.8v1.0h-0.8zM20.0 390h0.8v1.0h-0.8zM21.0 390h0.8v1.0h-0.8zM22.0 390h0.8v1.0h-0.8zM23.0 390h0.8v1.0h-0.8zM24.0 390h0.8v1.0h-0.8zM25.0 390h0.8v1.0h-0.8zM2.0 392h0.8v1.0h-0.8zM3.0 392h0.8v1.0h-0.8zM4.0 392h0.8v1.0h-0.8zM5.0 392h0.8v1.0h-0.8zM6.0 392h0.8v1.0h-0.8zM7.0 392h0.8v1.0h-0.8zM8.0 392h0.8v1.0h-0.8zM9.0 392h0.8v1.0h-0.8zM10.0 392h0.8v1.0h-0.8zM11.0 392h0.8v1.0h-0.8zM12.0 392h0.8v1.0h-0.8zM14.0 392h0.8v1.0h-0.8zM15.0 392h0.8v1.0h-0.8zM16.0 392h0.8v1.0h-0.8zM17.0 392h0.8v1.0h-0.8zM18.0 392h0.8v1.0h-0.8zM19.0 392h0.8v1.0h-0.8zM20.0 392h0.8v1.0h-0.8zM21.0 392h0.8v1.0h-0.8zM22.0 392h0.8v1.0h-0.8zM23.0 392h0.8v1.0h-0.8zM24.0 392h0.8v1.0h-0.8zM25.0 392h0.8v1.0h-0.8zM2.0 394h0.8v1.0h-0.8zM3.0 394h0.8v1.0h-0.8zM4.0 394h0.8v1.0h-0.8zM5.0 394h0.8v1.0h-0.8zM6.0 394h0.8v1.0h-0.8zM7.0 394h0.8v1.0h-0.8zM8.0 394h0.8v1.0h-0.8zM9.0 394h0.8v1.0h-0.8zM10.0 394h0.8v1.0h-0.8zM11.0 394h0.8v1.0h-0.8zM12.0 394h0.8v1.0h-0.8zM14.0 394h0.8v1.0h-0.8zM15.0 394h0.8v1.0h-0.8zM16.0 394h0.8v1.0h-0.8zM17.0 394h0.8v1.0h-0.8zM18.0 394h0.8v1.0h-0.8zM19.0 394h0.8v1.0h-0.8zM20.0 394h0.8v1.0h-0.8zM21.0 394h0.8v1.0h-0.8zM22.0 394h0.8v1.0h-0.8zM23.0 394h0.8v1.0h-0.8zM24.0 394h0.8v1.0h-0.8zM25.0 394h0.8v1.0h-0.8zM2.0 396h0.8v1.0h-0.8zM3.0 396h0.8v1.0h-0.8zM4.0 396h0.8v1.0h-0.8zM5.0 396h0.8v1.0h-0.8zM6.0 396h0.8v1.0h-0.8zM7.0 396h0.8v1.0h-0.8zM8.0 396h0.8v1.0h-0.8zM9.0 396h0.8v1.0h-0.8zM10.0 396h0.8v1.0h-0.8zM11.0 396h0.8v1.0h-0.8zM12.0 396h0.8v1.0h-0.8zM14.0 396h0.8v1.0h-0.8zM15.0 396h0.8v1.0h-0.8zM16.0 396h0.8v1.0h-0.8zM17.0 396h0.8v1.0h-0.8zM18.0 396h0.8v1.0h-0.8zM19.0 396h0.8v1.0h-0.8zM20.0 396h0.8v1.0h-0.8zM21.0 396h0.8v1.0h-0.8zM22.0 396h0.8v1.0h-0.8zM23.0 396h0.8v1.0h-0.8zM24.0 396h0.8v1.0h-0.8zM25.0 396h0.8v1.0h-0.8zM0.0 398h0.8v1.0h-0.8zM0.0 402h0.8v1.0h-0.8zM1.0 402h0.8v1.0h-0.8zM2.0 402h0.8v1.0h-0.8zM3.0 402h0.8v1.0h-0.8zM4.0 402h0.8v1.0h-0.8zM5.0 402h0.8v1.0h-0.8zM6.0 402h0.8v1.0h-0.8zM7.0 402h0.8v1.0h-0.8zM8.0 402h0.8v1.0h-0.8zM9.0 402h0.8v1.0h-0.8zM10.0 402h0.8v1.0h-0.8zM11.0 402h0.8v1.0h-0.8zM12.0 402h0.8v1.0h-0.8zM13.0 402h0.8v1.0h-0.8zM15.0 402h0.8v1.0h-0.8zM12.0 404h0.8v1.0h-0.8zM20.0 404h0.8v1.0h-0.8zM12.0 406h0.8v1.0h-0.8zM20.0 406h0.8v1.0h-0.8zM12.0 408h0.8v1.0h-0.8zM20.0 408h0.8v1.0h-0.8zM12.0 410h0.8v1.0h-0.8zM20.0 410h0.8v1.0h-0.8zM12.0 412h0.8v1.0h-0.8zM20.0 412h0.8v1.0h-0.8zM12.0 414h0.8v1.0h-0.8zM20.0 414h0.8v1.0h-0.8zM0.0 416h0.8v1.0h-0.8zM0.0 418h0.8v1.0h-0.8zM1.0 418h0.8v1.0h-0.8zM2.0 418h0.8v1.0h-0.8zM3.0 418h0.8v1.0h-0.8zM4.0 418h0.8v1.0h-0.8zM5.0 418h0.8v1.0h-0.8zM6.0 418h0.8v1.0h-0.8zM8.0 418h0.8v1.0h-0.8zM2.0 420h0.8v1.0h-0.8zM3.0 420h0.8v1.0h-0.8zM4.0 420h0.8v1.0h-0.8zM5.0 420h0.8v1.0h-0.8zM6.0 420h0.8v1.0h-0.8zM7.0 420h0.8v1.0h-0.8zM8.0 420h0.8v1.0h-0.8zM9.0 420h0.8v1.0h-0.8zM10.0 420h0.8v1.0h-0.8zM11.0 420h0.8v1.0h-0.8zM12.0 420h0.8v1.0h-0.8zM14.0 420h0.8v1.0h-0.8zM15.0 420h0.8v1.0h-0.8zM16.0 420h0.8v1.0h-0.8zM17.0 420h0.8v1.0h-0.8zM18.0 420h0.8v1.0h-0.8zM19.0 420h0.8v1.0h-0.8zM20.0 420h0.8v1.0h-0.8zM21.0 420h0.8v1.0h-0.8zM22.0 420h0.8v1.0h-0.8zM23.0 420h0.8v1.0h-0.8zM24.0 420h0.8v1.0h-0.8zM25.0 420h0.8v1.0h-0.8zM2.0 422h0.8v1.0h-0.8zM3.0 422h0.8v1.0h-0.8zM4.0 422h0.8v1.0h-0.8zM5.0 422h0.8v1.0h-0.8zM6.0 422h0.8v1.0h-0.8zM7.0 422h0.8v1.0h-0.8zM8.0 422h0.8v1.0h-0.8zM9.0 422h0.8v1.0h-0.8zM10.0 422h0.8v1.0h-0.8zM11.0 422h0.8v1.0h-0.8zM12.0 422h0.8v1.0h-0.8zM14.0 422h0.8v1.0h-0.8zM15.0 422h0.8v1.0h-0.8zM16.0 422h0.8v1.0h-0.8zM17.0 422h0.8v1.0h-0.8zM18.0 422h0.8v1.0h-0.8zM19.0 422h0.8v1.0h-0.8zM20.0 422h0.8v1.0h-0.8zM21.0 422h0.8v1.0h-0.8zM22.0 422h0.8v1.0h-0.8zM23.0 422h0.8v1.0h-0.8zM24.0 422h0.8v1.0h-0.8zM25.0 422h0.8v1.0h-0.8zM2.0 424h0.8v1.0h-0.8zM3.0 424h0.8v1.0h-0.8zM4.0 424h0.8v1.0h-0.8zM5.0 424h0.8v1.0h-0.8zM6.0 424h0.8v1.0h-0.8zM7.0 424h0.8v1.0h-0.8zM8.0 424h0.8v1.0h-0.8zM9.0 424h0.8v1.0h-0.8zM10.0 424h0.8v1.0h-0.8zM11.0 424h0.8v1.0h-0.8zM12.0 424h0.8v1.0h-0.8zM14.0 424h0.8v1.0h-0.8zM15.0 424h0.8v1.0h-0.8zM16.0 424h0.8v1.0h-0.8zM17.0 424h0.8v1.0h-0.8zM18.0 424h0.8v1.0h-0.8zM19.0 424h0.8v1.0h-0.8zM20.0 424h0.8v1.0h-0.8zM21.0 424h0.8v1.0h-0.8zM22.0 424h0.8v1.0h-0.8zM23.0 424h0.8v1.0h-0.8zM24.0 424h0.8v1.0h-0.8zM25.0 424h0.8v1.0h-0.8zM2.0 426h0.8v1.0h-0.8zM3.0 426h0.8v1.0h-0.8zM4.0 426h0.8v1.0h-0.8zM5.0 426h0.8v1.0h-0.8zM6.0 426h0.8v1.0h-0.8zM7.0 426h0.8v1.0h-0.8zM8.0 426h0.8v1.0h-0.8zM9.0 426h0.8v1.0h-0.8zM10.0 426h0.8v1.0h-0.8zM11.0 426h0.8v1.0h-0.8zM12.0 426h0.8v1.0h-0.8zM14.0 426h0.8v1.0h-0.8zM15.0 426h0.8v1.0h-0.8zM16.0 426h0.8v1.0h-0.8zM17.0 426h0.8v1.0h-0.8zM18.0 426h0.8v1.0h-0.8zM19.0 426h0.8v1.0h-0.8zM20.0 426h0.8v1.0h-0.8zM21.0 426h0.8v1.0h-0.8zM22.0 426h0.8v1.0h-0.8zM23.0 426h0.8v1.0h-0.8zM24.0 426h0.8v1.0h-0.8zM25.0 426h0.8v1.0h-0.8zM2.0 428h0.8v1.0h-0.8zM3.0 428h0.8v1.0h-0.8zM4.0 428h0.8v1.0h-0.8zM5.0 428h0.8v1.0h-0.8zM6.0 428h0.8v1.0h-0.8zM7.0 428h0.8v1.0h-0.8zM8.0 428h0.8v1.0h-0.8zM9.0 428h0.8v1.0h-0.8zM10.0 428h0.8v1.0h-0.8zM11.0 428h0.8v1.0h-0.8zM12.0 428h0.8v1.0h-0.8zM14.0 428h0.8v1.0h-0.8zM15.0 428h0.8v1.0h-0.8zM16.0 428h0.8v1.0h-0.8zM17.0 428h0.8v1.0h-0.8zM18.0 428h0.8v1.0h-0.8zM19.0 428h0.8v1.0h-0.8zM20.0 428h0.8v1.0h-0.8zM21.0 428h0.8v1.0h-0.8zM22.0 428h0.8v1.0h-0.8zM23.0 428h0.8v1.0h-0.8zM24.0 428h0.8v1.0h-0.8zM25.0 428h0.8v1.0h-0.8zM2.0 430h0.8v1.0h-0.8zM3.0 430h0.8v1.0h-0.8zM4.0 430h0.8v1.0h-0.8zM5.0 430h0.8v1.0h-0.8zM6.0 430h0.8v1.0h-0.8zM7.0 430h0.8v1.0h-0.8zM8.0 430h0.8v1.0h-0.8zM9.0 430h0.8v1.0h-0.8zM10.0 430h0.8v1.0h-0.8zM11.0 430h0.8v1.0h-0.8zM12.0 430h0.8v1.0h-0.8zM14.0 430h0.8v1.0h-0.8zM15.0 430h0.8v1.0h-0.8zM16.0 430h0.8v1.0h-0.8zM17.0 430h0.8v1.0h-0.8zM18.0 430h0.8v1.0h-0.8zM19.0 430h0.8v1.0h-0.8zM20.0 430h0.8v1.0h-0.8zM21.0 430h0.8v1.0h-0.8zM22.0 430h0.8v1.0h-0.8zM23.0 430h0.8v1.0h-0.8zM24.0 430h0.8v1.0h-0.8zM25.0 430h0.8v1.0h-0.8zM0.0 432h0.8v1.0h-0.8zM0.0 436h0.8v1.0h-0.8zM1.0 436h0.8v1.0h-0.8zM2.0 436h0.8v1.0h-0.8zM3.0 436h0.8v1.0h-0.8zM4.0 436h0.8v1.0h-0.8zM5.0 436h0.8v1.0h-0.8zM6.0 436h0.8v1.0h-0.8zM7.0 436h0.8v1.0h-0.8zM8.0 436h0.8v1.0h-0.8zM9.0 436h0.8v1.0h-0.8zM10.0 436h0.8v1.0h-0.8zM11.0 436h0.8v1.0h-0.8zM12.0 436h0.8v1.0h-0.8zM13.0 436h0.8v1.0h-0.8zM15.0 436h0.8v1.0h-0.8zM12.0 438h0.8v1.0h-0.8zM20.0 438h0.8v1.0h-0.8zM12.0 440h0.8v1.0h-0.8zM20.0 440h0.8v1.0h-0.8zM12.0 442h0.8v1.0h-0.8zM20.0 442h0.8v1.0h-0.8zM12.0 444h0.8v1.0h-0.8zM20.0 444h0.8v1.0h-0.8zM12.0 446h0.8v1.0h-0.8zM20.0 446h0.8v1.0h-0.8zM0.0 448h0.8v1.0h-0.8zM0.0 450h0.8v1.0h-0.8zM1.0 450h0.8v1.0h-0.8zM2.0 450h0.8v1.0h-0.8zM3.0 450h0.8v1.0h-0.8zM4.0 450h0.8v1.0h-0.8zM5.0 450h0.8v1.0h-0.8zM6.0 450h0.8v1.0h-0.8zM8.0 450h0.8v1.0h-0.8zM2.0 452h0.8v1.0h-0.8zM3.0 452h0.8v1.0h-0.8zM4.0 452h0.8v1.0h-0.8zM5.0 452h0.8v1.0h-0.8zM6.0 452h0.8v1.0h-0.8zM7.0 452h0.8v1.0h-0.8zM8.0 452h0.8v1.0h-0.8zM9.0 452h0.8v1.0h-0.8zM10.0 452h0.8v1.0h-0.8zM11.0 452h0.8v1.0h-0.8zM12.0 452h0.8v1.0h-0.8zM14.0 452h0.8v1.0h-0.8zM15.0 452h0.8v1.0h-0.8zM16.0 452h0.8v1.0h-0.8zM17.0 452h0.8v1.0h-0.8zM18.0 452h0.8v1.0h-0.8zM19.0 452h0.8v1.0h-0.8zM20.0 452h0.8v1.0h-0.8zM21.0 452h0.8v1.0h-0.8zM22.0 452h0.8v1.0h-0.8zM23.0 452h0.8v1.0h-0.8zM24.0 452h0.8v1.0h-0.8zM25.0 452h0.8v1.0h-0.8zM2.0 454h0.8v1.0h-0.8zM3.0 454h0.8v1.0h-0.8zM4.0 454h0.8v1.0h-0.8zM5.0 454h0.8v1.0h-0.8zM6.0 454h0.8v1.0h-0.8zM7.0 454h0.8v1.0h-0.8zM8.0 454h0.8v1.0h-0.8zM9.0 454h0.8v1.0h-0.8zM10.0 454h0.8v1.0h-0.8zM11.0 454h0.8v1.0h-0.8zM12.0 454h0.8v1.0h-0.8zM14.0 454h0.8v1.0h-0.8zM15.0 454h0.8v1.0h-0.8zM16.0 454h0.8v1.0h-0.8zM17.0 454h0.8v1.0h-0.8zM18.0 454h0.8v1.0h-0.8zM19.0 454h0.8v1.0h-0.8zM20.0 454h0.8v1.0h-0.8zM21.0 454h0.8v1.0h-0.8zM22.0 454h0.8v1.0h-0.8zM23.0 454h0.8v1.0h-0.8zM24.0 454h0.8v1.0h-0.8zM25.0 454h0.8v1.0h-0.8zM2.0 456h0.8v1.0h-0.8zM3.0 456h0.8v1.0h-0.8zM4.0 456h0.8v1.0h-0.8zM5.0 456h0.8v1.0h-0.8zM6.0 456h0.8v1.0h-0.8zM7.0 456h0.8v1.0h-0.8zM8.0 456h0.8v1.0h-0.8zM9.0 456h0.8v1.0h-0.8zM10.0 456h0.8v1.0h-0.8zM11.0 456h0.8v1.0h-0.8zM12.0 456h0.8v1.0h-0.8zM14.0 456h0.8v1.0h-0.8zM15.0 456h0.8v1.0h-0.8zM16.0 456h0.8v1.0h-0.8zM17.0 456h0.8v1.0h-0.8zM18.0 456h0.8v1.0h-0.8zM19.0 456h0.8v1.0h-0.8zM20.0 456h0.8v1.0h-0.8zM21.0 456h0.8v1.0h-0.8zM22.0 456h0.8v1.0h-0.8zM23.0 456h0.8v1.0h-0.8zM24.0 456h0.8v1.0h-0.8zM25.0 456h0.8v1.0h-0.8zM2.0 458h0.8v1.0h-0.8zM3.0 458h0.8v1.0h-0.8zM4.0 458h0.8v1.0h-0.8zM5.0 458h0.8v1.0h-0.8zM6.0 458h0.8v1.0h-0.8zM7.0 458h0.8v1.0h-0.8zM8.0 458h0.8v1.0h-0.8zM9.0 458h0.8v1.0h-0.8zM10.0 458h0.8v1.0h-0.8zM11.0 458h0.8v1.0h-0.8zM12.0 458h0.8v1.0h-0.8zM14.0 458h0.8v1.0h-0.8zM15.0 458h0.8v1.0h-0.8zM16.0 458h0.8v1.0h-0.8zM17.0 458h0.8v1.0h-0.8zM18.0 458h0.8v1.0h-0.8zM19.0 458h0.8v1.0h-0.8zM20.0 458h0.8v1.0h-0.8zM21.0 458h0.8v1.0h-0.8zM22.0 458h0.8v1.0h-0.8zM23.0 458h0.8v1.0h-0.8zM24.0 458h0.8v1.0h-0.8zM25.0 458h0.8v1.0h-0.8zM2.0 460h0.8v1.0h-0.8zM3.0 460h0.8v1.0h-0.8zM4.0 460h0.8v1.0h-0.8zM5.0 460h0.8v1.0h-0.8zM6.0 460h0.8v1.0h-0.8zM7.0 460h0.8v1.0h-0.8zM8.0 460h0.8v1.0h-0.8zM9.0 460h0.8v1.0h-0.8zM10.0 460h0.8v1.0h-0.8zM11.0 460h0.8v1.0h-0.8zM12.0 460h0.8v1.0h-0.8zM14.0 460h0.8v1.0h-0.8zM15.0 460h0.8v1.0h-0.8zM16.0 460h0.8v1.0h-0.8zM17.0 460h0.8v1.0h-0.8zM18.0 460h0.8v1.0h-0.8zM19.0 460h0.8v1.0h-0.8zM20.0 460h0.8v1.0h-0.8zM21.0 460h0.8v1.0h-0.8zM22.0 460h0.8v1.0h-0.8zM23.0 460h0.8v1.0h-0.8zM24.0 460h0.8v1.0h-0.8zM25.0 460h0.8v1.0h-0.8zM0.0 462h0.8v1.0h-0.8zM0.0 466h0.8v1.0h-0.8zM1.0 466h0.8v1.0h-0.8zM2.0 466h0.8v1.0h-0.8zM3.0 466h0.8v1.0h-0.8zM4.0 466h0.8v1.0h-0.8zM5.0 466h0.8v1.0h-0.8zM6.0 466h0.8v1.0h-0.8zM7.0 466h0.8v1.0h-0.8zM8.0 466h0.8v1.0h-0.8zM9.0 466h0.8v1.0h-0.8zM10.0 466h0.8v1.0h-0.8zM11.0 466h0.8v1.0h-0.8zM12.0 466h0.8v1.0h-0.8zM13.0 466h0.8v1.0h-0.8zM15.0 466h0.8v1.0h-0.8zM12.0 468h0.8v1.0h-0.8zM20.0 468h0.8v1.0h-0.8zM12.0 470h0.8v1.0h-0.8zM20.0 470h0.8v1.0h-0.8zM12.0 472h0.8v1.0h-0.8zM20.0 472h0.8v1.0h-0.8zM12.0 474h0.8v1.0h-0.8zM20.0 474h0.8v1.0h-0.8zM12.0 476h0.8v1.0h-0.8zM20.0 476h0.8v1.0h-0.8zM0.0 478h0.8v1.0h-0.8zM0.0 480h0.8v1.0h-0.8zM1.0 480h0.8v1.0h-0.8zM2.0 480h0.8v1.0h-0.8zM3.0 480h0.8v1.0h-0.8zM4.0 480h0.8v1.0h-0.8zM5.0 480h0.8v1.0h-0.8zM6.0 480h0.8v1.0h-0.8zM8.0 480h0.8v1.0h-0.8zM2.0 482h0.8v1.0h-0.8zM3.0 482h0.8v1.0h-0.8zM4.0 482h0.8v1.0h-0.8zM5.0 482h0.8v1.0h-0.8zM6.0 482h0.8v1.0h-0.8zM7.0 482h0.8v1.0h-0.8zM8.0 482h0.8v1.0h-0.8zM9.0 482h0.8v1.0h-0.8zM10.0 482h0.8v1.0h-0.8zM11.0 482h0.8v1.0h-0.8zM12.0 482h0.8v1.0h-0.8zM14.0 482h0.8v1.0h-0.8zM15.0 482h0.8v1.0h-0.8zM16.0 482h0.8v1.0h-0.8zM17.0 482h0.8v1.0h-0.8zM18.0 482h0.8v1.0h-0.8zM19.0 482h0.8v1.0h-0.8zM20.0 482h0.8v1.0h-0.8zM21.0 482h0.8v1.0h-0.8zM22.0 482h0.8v1.0h-0.8zM23.0 482h0.8v1.0h-0.8zM24.0 482h0.8v1.0h-0.8zM25.0 482h0.8v1.0h-0.8zM2.0 484h0.8v1.0h-0.8zM3.0 484h0.8v1.0h-0.8zM4.0 484h0.8v1.0h-0.8zM5.0 484h0.8v1.0h-0.8zM6.0 484h0.8v1.0h-0.8zM7.0 484h0.8v1.0h-0.8zM8.0 484h0.8v1.0h-0.8zM9.0 484h0.8v1.0h-0.8zM10.0 484h0.8v1.0h-0.8zM11.0 484h0.8v1.0h-0.8zM12.0 484h0.8v1.0h-0.8zM14.0 484h0.8v1.0h-0.8zM15.0 484h0.8v1.0h-0.8zM16.0 484h0.8v1.0h-0.8zM17.0 484h0.8v1.0h-0.8zM18.0 484h0.8v1.0h-0.8zM19.0 484h0.8v1.0h-0.8zM20.0 484h0.8v1.0h-0.8zM21.0 484h0.8v1.0h-0.8zM22.0 484h0.8v1.0h-0.8zM23.0 484h0.8v1.0h-0.8zM24.0 484h0.8v1.0h-0.8zM25.0 484h0.8v1.0h-0.8zM2.0 486h0.8v1.0h-0.8zM3.0 486h0.8v1.0h-0.8zM4.0 486h0.8v1.0h-0.8zM5.0 486h0.8v1.0h-0.8zM6.0 486h0.8v1.0h-0.8zM7.0 486h0.8v1.0h-0.8zM8.0 486h0.8v1.0h-0.8zM9.0 486h0.8v1.0h-0.8zM10.0 486h0.8v1.0h-0.8zM11.0 486h0.8v1.0h-0.8zM12.0 486h0.8v1.0h-0.8zM14.0 486h0.8v1.0h-0.8zM15.0 486h0.8v1.0h-0.8zM16.0 486h0.8v1.0h-0.8zM17.0 486h0.8v1.0h-0.8zM18.0 486h0.8v1.0h-0.8zM19.0 486h0.8v1.0h-0.8zM20.0 486h0.8v1.0h-0.8zM21.0 486h0.8v1.0h-0.8zM22.0 486h0.8v1.0h-0.8zM23.0 486h0.8v1.0h-0.8zM24.0 486h0.8v1.0h-0.8zM25.0 486h0.8v1.0h-0.8zM2.0 488h0.8v1.0h-0.8zM3.0 488h0.8v1.0h-0.8zM4.0 488h0.8v1.0h-0.8zM5.0 488h0.8v1.0h-0.8zM6.0 488h0.8v1.0h-0.8zM7.0 488h0.8v1.0h-0.8zM8.0 488h0.8v1.0h-0.8zM9.0 488h0.8v1.0h-0.8zM10.0 488h0.8v1.0h-0.8zM11.0 488h0.8v1.0h-0.8zM12.0 488h0.8v1.0h-0.8zM14.0 488h0.8v1.0h-0.8zM15.0 488h0.8v1.0h-0.8zM16.0 488h0.8v1.0h-0.8zM17.0 488h0.8v1.0h-0.8zM18.0 488h0.8v1.0h-0.8zM19.0 488h0.8v1.0h-0.8zM20.0 488h0.8v1.0h-0.8zM21.0 488h0.8v1.0h-0.8zM22.0 488h0.8v1.0h-0.8zM23.0 488h0.8v1.0h-0.8zM24.0 488h0.8v1.0h-0.8zM25.0 488h0.8v1.0h-0.8zM2.0 490h0.8v1.0h-0.8zM3.0 490h0.8v1.0h-0.8zM4.0 490h0.8v1.0h-0.8zM5.0 490h0.8v1.0h-0.8zM6.0 490h0.8v1.0h-0.8zM7.0 490h0.8v1.0h-0.8zM8.0 490h0.8v1.0h-0.8zM9.0 490h0.8v1.0h-0.8zM10.0 490h0.8v1.0h-0.8zM11.0 490h0.8v1.0h-0.8zM12.0 490h0.8v1.0h-0.8zM14.0 490h0.8v1.0h-0.8zM15.0 490h0.8v1.0h-0.8zM16.0 490h0.8v1.0h-0.8zM17.0 490h0.8v1.0h-0.8zM18.0 490h0.8v1.0h-0.8zM19.0 490h0.8v1.0h-0.8zM20.0 490h0.8v1.0h-0.8zM21.0 490h0.8v1.0h-0.8zM22.0 490h0.8v1.0h-0.8zM23.0 490h0.8v1.0h-0.8zM24.0 490h0.8v1.0h-0.8zM25.0 490h0.8v1.0h-0.8zM0.0 492h0.8v1.0h-0.8zM0.0 496h0.8v1.0h-0.8zM1.0 496h0.8v1.0h-0.8zM2.0 496h0.8v1.0h-0.8zM3.0 496h0.8v1.0h-0.8zM4.0 496h0.8v1.0h-0.8zM5.0 496h0.8v1.0h-0.8zM6.0 496h0.8v1.0h-0.8zM7.0 496h0.8v1.0h-0.8zM8.0 496h0.8v1.0h-0.8zM9.0 496h0.8v1.0h-0.8zM10.0 496h0.8v1.0h-0.8zM11.0 496h0.8v1.0h-0.8zM12.0 496h0.8v1.0h-0.8zM13.0 496h0.8v1.0h-0.8zM14.0 496h0.8v1.0h-0.8zM16.0 496h0.8v1.0h-0.8zM12.0 498h0.8v1.0h-0.8zM20.0 498h0.8v1.0h-0.8zM12.0 500h0.8v1.0h-0.8zM20.0 500h0.8v1.0h-0.8zM12.0 502h0.8v1.0h-0.8zM20.0 502h0.8v1.0h-0.8zM12.0 504h0.8v1.0h-0.8zM20.0 504h0.8v1.0h-0.8zM12.0 506h0.8v1.0h-0.8zM20.0 506h0.8v1.0h-0.8zM12.0 508h0.8v1.0h-0.8zM20.0 508h0.8v1.0h-0.8zM0.0 510h0.8v1.0h-0.8zM0.0 512h0.8v1.0h-0.8zM1.0 512h0.8v1.0h-0.8zM2.0 512h0.8v1.0h-0.8zM3.0 512h0.8v1.0h-0.8zM4.0 512h0.8v1.0h-0.8zM5.0 512h0.8v1.0h-0.8zM6.0 512h0.8v1.0h-0.8zM8.0 512h0.8v1.0h-0.8zM2.0 514h0.8v1.0h-0.8zM3.0 514h0.8v1.0h-0.8zM4.0 514h0.8v1.0h-0.8zM5.0 514h0.8v1.0h-0.8zM6.0 514h0.8v1.0h-0.8zM7.0 514h0.8v1.0h-0.8zM8.0 514h0.8v1.0h-0.8zM9.0 514h0.8v1.0h-0.8zM10.0 514h0.8v1.0h-0.8zM11.0 514h0.8v1.0h-0.8zM12.0 514h0.8v1.0h-0.8zM14.0 514h0.8v1.0h-0.8zM15.0 514h0.8v1.0h-0.8zM16.0 514h0.8v1.0h-0.8zM17.0 514h0.8v1.0h-0.8zM18.0 514h0.8v1.0h-0.8zM19.0 514h0.8v1.0h-0.8zM20.0 514h0.8v1.0h-0.8zM21.0 514h0.8v1.0h-0.8zM22.0 514h0.8v1.0h-0.8zM23.0 514h0.8v1.0h-0.8zM24.0 514h0.8v1.0h-0.8zM25.0 514h0.8v1.0h-0.8zM2.0 516h0.8v1.0h-0.8zM3.0 516h0.8v1.0h-0.8zM4.0 516h0.8v1.0h-0.8zM5.0 516h0.8v1.0h-0.8zM6.0 516h0.8v1.0h-0.8zM7.0 516h0.8v1.0h-0.8zM8.0 516h0.8v1.0h-0.8zM9.0 516h0.8v1.0h-0.8zM10.0 516h0.8v1.0h-0.8zM11.0 516h0.8v1.0h-0.8zM12.0 516h0.8v1.0h-0.8zM14.0 516h0.8v1.0h-0.8zM15.0 516h0.8v1.0h-0.8zM16.0 516h0.8v1.0h-0.8zM17.0 516h0.8v1.0h-0.8zM18.0 516h0.8v1.0h-0.8zM19.0 516h0.8v1.0h-0.8zM20.0 516h0.8v1.0h-0.8zM21.0 516h0.8v1.0h-0.8zM22.0 516h0.8v1.0h-0.8zM23.0 516h0.8v1.0h-0.8zM24.0 516h0.8v1.0h-0.8zM25.0 516h0.8v1.0h-0.8zM2.0 518h0.8v1.0h-0.8zM3.0 518h0.8v1.0h-0.8zM4.0 518h0.8v1.0h-0.8zM5.0 518h0.8v1.0h-0.8zM6.0 518h0.8v1.0h-0.8zM7.0 518h0.8v1.0h-0.8zM8.0 518h0.8v1.0h-0.8zM9.0 518h0.8v1.0h-0.8zM10.0 518h0.8v1.0h-0.8zM11.0 518h0.8v1.0h-0.8zM12.0 518h0.8v1.0h-0.8zM14.0 518h0.8v1.0h-0.8zM15.0 518h0.8v1.0h-0.8zM16.0 518h0.8v1.0h-0.8zM17.0 518h0.8v1.0h-0.8zM18.0 518h0.8v1.0h-0.8zM19.0 518h0.8v1.0h-0.8zM20.0 518h0.8v1.0h-0.8zM21.0 518h0.8v1.0h-0.8zM22.0 518h0.8v1.0h-0.8zM23.0 518h0.8v1.0h-0.8zM24.0 518h0.8v1.0h-0.8zM25.0 518h0.8v1.0h-0.8zM2.0 520h0.8v1.0h-0.8zM3.0 520h0.8v1.0h-0.8zM4.0 520h0.8v1.0h-0.8zM5.0 520h0.8v1.0h-0.8zM6.0 520h0.8v1.0h-0.8zM7.0 520h0.8v1.0h-0.8zM8.0 520h0.8v1.0h-0.8zM9.0 520h0.8v1.0h-0.8zM10.0 520h0.8v1.0h-0.8zM11.0 520h0.8v1.0h-0.8zM12.0 520h0.8v1.0h-0.8zM14.0 520h0.8v1.0h-0.8zM15.0 520h0.8v1.0h-0.8zM16.0 520h0.8v1.0h-0.8zM17.0 520h0.8v1.0h-0.8zM18.0 520h0.8v1.0h-0.8zM19.0 520h0.8v1.0h-0.8zM20.0 520h0.8v1.0h-0.8zM21.0 520h0.8v1.0h-0.8zM22.0 520h0.8v1.0h-0.8zM23.0 520h0.8v1.0h-0.8zM24.0 520h0.8v1.0h-0.8zM25.0 520h0.8v1.0h-0.8zM2.0 522h0.8v1.0h-0.8zM3.0 522h0.8v1.0h-0.8zM4.0 522h0.8v1.0h-0.8zM5.0 522h0.8v1.0h-0.8zM6.0 522h0.8v1.0h-0.8zM7.0 522h0.8v1.0h-0.8zM8.0 522h0.8v1.0h-0.8zM9.0 522h0.8v1.0h-0.8zM10.0 522h0.8v1.0h-0.8zM11.0 522h0.8v1.0h-0.8zM12.0 522h0.8v1.0h-0.8zM14.0 522h0.8v1.0h-0.8zM15.0 522h0.8v1.0h-0.8zM16.0 522h0.8v1.0h-0.8zM17.0 522h0.8v1.0h-0.8zM18.0 522h0.8v1.0h-0.8zM19.0 522h0.8v1.0h-0.8zM20.0 522h0.8v1.0h-0.8zM21.0 522h0.8v1.0h-0.8zM22.0 522h0.8v1.0h-0.8zM23.0 522h0.8v1.0h-0.8zM24.0 522h0.8v1.0h-0.8zM25.0 522h0.8v1.0h-0.8zM2.0 524h0.8v1.0h-0.8zM3.0 524h0.8v1.0h-0.8zM4.0 524h0.8v1.0h-0.8zM5.0 524h0.8v1.0h-0.8zM6.0 524h0.8v1.0h-0.8zM7.0 524h0.8v1.0h-0.8zM8.0 524h0.8v1.0h-0.8zM9.0 524h0.8v1.0h-0.8zM10.0 524h0.8v1.0h-0.8zM11.0 524h0.8v1.0h-0.8zM12.0 524h0.8v1.0h-0.8zM14.0 524h0.8v1.0h-0.8zM15.0 524h0.8v1.0h-0.8zM16.0 524h0.8v1.0h-0.8zM17.0 524h0.8v1.0h-0.8zM18.0 524h0.8v1.0h-0.8zM19.0 524h0.8v1.0h-0.8zM20.0 524h0.8v1.0h-0.8zM21.0 524h0.8v1.0h-0.8zM22.0 524h0.8v1.0h-0.8zM23.0 524h0.8v1.0h-0.8zM24.0 524h0.8v1.0h-0.8zM25.0 524h0.8v1.0h-0.8zM0.0 526h0.8v1.0h-0.8zM0.0 530h0.8v1.0h-0.8zM1.0 530h0.8v1.0h-0.8zM2.0 530h0.8v1.0h-0.8zM3.0 530h0.8v1.0h-0.8zM4.0 530h0.8v1.0h-0.8zM5.0 530h0.8v1.0h-0.8zM6.0 530h0.8v1.0h-0.8zM7.0 530h0.8v1.0h-0.8zM8.0 530h0.8v1.0h-0.8zM9.0 530h0.8v1.0h-0.8zM10.0 530h0.8v1.0h-0.8zM11.0 530h0.8v1.0h-0.8zM12.0 530h0.8v1.0h-0.8zM13.0 530h0.8v1.0h-0.8zM14.0 530h0.8v1.0h-0.8zM16.0 530h0.8v1.0h-0.8zM12.0 532h0.8v1.0h-0.8zM20.0 532h0.8v1.0h-0.8zM12.0 534h0.8v1.0h-0.8zM20.0 534h0.8v1.0h-0.8zM0.0 536h0.8v1.0h-0.8zM0.0 538h0.8v1.0h-0.8zM1.0 538h0.8v1.0h-0.8zM2.0 538h0.8v1.0h-0.8zM3.0 538h0.8v1.0h-0.8zM4.0 538h0.8v1.0h-0.8zM5.0 538h0.8v1.0h-0.8zM6.0 538h0.8v1.0h-0.8zM8.0 538h0.8v1.0h-0.8zM2.0 540h0.8v1.0h-0.8zM3.0 540h0.8v1.0h-0.8zM4.0 540h0.8v1.0h-0.8zM5.0 540h0.8v1.0h-0.8zM6.0 540h0.8v1.0h-0.8zM7.0 540h0.8v1.0h-0.8zM8.0 540h0.8v1.0h-0.8zM9.0 540h0.8v1.0h-0.8zM10.0 540h0.8v1.0h-0.8zM11.0 540h0.8v1.0h-0.8zM12.0 540h0.8v1.0h-0.8zM14.0 540h0.8v1.0h-0.8zM15.0 540h0.8v1.0h-0.8zM16.0 540h0.8v1.0h-0.8zM17.0 540h0.8v1.0h-0.8zM18.0 540h0.8v1.0h-0.8zM19.0 540h0.8v1.0h-0.8zM20.0 540h0.8v1.0h-0.8zM21.0 540h0.8v1.0h-0.8zM22.0 540h0.8v1.0h-0.8zM23.0 540h0.8v1.0h-0.8zM24.0 540h0.8v1.0h-0.8zM25.0 540h0.8v1.0h-0.8zM2.0 542h0.8v1.0h-0.8zM3.0 542h0.8v1.0h-0.8zM4.0 542h0.8v1.0h-0.8zM5.0 542h0.8v1.0h-0.8zM6.0 542h0.8v1.0h-0.8zM7.0 542h0.8v1.0h-0.8zM8.0 542h0.8v1.0h-0.8zM9.0 542h0.8v1.0h-0.8zM10.0 542h0.8v1.0h-0.8zM11.0 542h0.8v1.0h-0.8zM12.0 542h0.8v1.0h-0.8zM14.0 542h0.8v1.0h-0.8zM15.0 542h0.8v1.0h-0.8zM16.0 542h0.8v1.0h-0.8zM17.0 542h0.8v1.0h-0.8zM18.0 542h0.8v1.0h-0.8zM19.0 542h0.8v1.0h-0.8zM20.0 542h0.8v1.0h-0.8zM21.0 542h0.8v1.0h-0.8zM22.0 542h0.8v1.0h-0.8zM23.0 542h0.8v1.0h-0.8zM24.0 542h0.8v1.0h-0.8zM25.0 542h0.8v1.0h-0.8zM0.0 544h0.8v1.0h-0.8z"/><path fill="#c42a7c" d="M11.0 12h0.8v1.0h-0.8zM12.0 12h0.8v1.0h-0.8zM11.0 18h0.8v1.0h-0.8zM12.0 18h0.8v1.0h-0.8zM13.0 18h0.8v1.0h-0.8zM11.0 20h0.8v1.0h-0.8zM12.0 20h0.8v1.0h-0.8zM11.0 22h0.8v1.0h-0.8zM12.0 22h0.8v1.0h-0.8zM11.0 42h0.8v1.0h-0.8zM12.0 42h0.8v1.0h-0.8zM13.0 42h0.8v1.0h-0.8zM11.0 44h0.8v1.0h-0.8zM12.0 44h0.8v1.0h-0.8zM11.0 46h0.8v1.0h-0.8zM12.0 46h0.8v1.0h-0.8zM11.0 68h0.8v1.0h-0.8zM12.0 68h0.8v1.0h-0.8zM13.0 68h0.8v1.0h-0.8zM11.0 70h0.8v1.0h-0.8zM12.0 70h0.8v1.0h-0.8zM11.0 72h0.8v1.0h-0.8zM12.0 72h0.8v1.0h-0.8zM12.0 96h0.8v1.0h-0.8zM13.0 96h0.8v1.0h-0.8zM14.0 96h0.8v1.0h-0.8zM12.0 98h0.8v1.0h-0.8zM13.0 98h0.8v1.0h-0.8zM12.0 100h0.8v1.0h-0.8zM13.0 100h0.8v1.0h-0.8zM13.0 114h0.8v1.0h-0.8zM14.0 114h0.8v1.0h-0.8zM15.0 114h0.8v1.0h-0.8zM13.0 116h0.8v1.0h-0.8zM14.0 116h0.8v1.0h-0.8zM13.0 118h0.8v1.0h-0.8zM14.0 118h0.8v1.0h-0.8zM13.0 150h0.8v1.0h-0.8zM14.0 150h0.8v1.0h-0.8zM15.0 150h0.8v1.0h-0.8zM13.0 152h0.8v1.0h-0.8zM14.0 152h0.8v1.0h-0.8zM13.0 154h0.8v1.0h-0.8zM14.0 154h0.8v1.0h-0.8zM10.0 184h0.8v1.0h-0.8zM11.0 184h0.8v1.0h-0.8zM12.0 184h0.8v1.0h-0.8zM10.0 186h0.8v1.0h-0.8zM11.0 186h0.8v1.0h-0.8zM10.0 188h0.8v1.0h-0.8zM11.0 188h0.8v1.0h-0.8z"/><path fill="#1b80ba" d="M12.0 24h0.8v1.0h-0.8zM13.0 24h0.8v1.0h-0.8zM14.0 24h0.8v1.0h-0.8zM15.0 24h0.8v1.0h-0.8zM16.0 24h0.8v1.0h-0.8zM17.0 24h0.8v1.0h-0.8zM18.0 24h0.8v1.0h-0.8zM19.0 24h0.8v1.0h-0.8zM20.0 24h0.8v1.0h-0.8zM12.0 26h0.8v1.0h-0.8zM13.0 26h0.8v1.0h-0.8zM14.0 26h0.8v1.0h-0.8zM15.0 26h0.8v1.0h-0.8zM16.0 26h0.8v1.0h-0.8zM17.0 26h0.8v1.0h-0.8zM18.0 26h0.8v1.0h-0.8zM19.0 26h0.8v1.0h-0.8zM20.0 26h0.8v1.0h-0.8zM12.0 28h0.8v1.0h-0.8zM13.0 28h0.8v1.0h-0.8zM14.0 28h0.8v1.0h-0.8zM15.0 28h0.8v1.0h-0.8zM16.0 28h0.8v1.0h-0.8zM17.0 28h0.8v1.0h-0.8zM18.0 28h0.8v1.0h-0.8zM19.0 28h0.8v1.0h-0.8zM20.0 28h0.8v1.0h-0.8zM12.0 30h0.8v1.0h-0.8zM13.0 30h0.8v1.0h-0.8zM14.0 30h0.8v1.0h-0.8zM12.0 32h0.8v1.0h-0.8zM13.0 32h0.8v1.0h-0.8zM14.0 32h0.8v1.0h-0.8zM15.0 32h0.8v1.0h-0.8zM16.0 32h0.8v1.0h-0.8zM17.0 32h0.8v1.0h-0.8zM18.0 32h0.8v1.0h-0.8zM19.0 32h0.8v1.0h-0.8zM20.0 32h0.8v1.0h-0.8zM21.0 32h0.8v1.0h-0.8zM12.0 48h0.8v1.0h-0.8zM13.0 48h0.8v1.0h-0.8zM14.0 48h0.8v1.0h-0.8zM15.0 48h0.8v1.0h-0.8zM16.0 48h0.8v1.0h-0.8zM17.0 48h0.8v1.0h-0.8zM18.0 48h0.8v1.0h-0.8zM19.0 48h0.8v1.0h-0.8zM20.0 48h0.8v1.0h-0.8zM12.0 50h0.8v1.0h-0.8zM13.0 50h0.8v1.0h-0.8zM14.0 50h0.8v1.0h-0.8zM15.0 50h0.8v1.0h-0.8zM16.0 50h0.8v1.0h-0.8zM17.0 50h0.8v1.0h-0.8zM18.0 50h0.8v1.0h-0.8zM19.0 50h0.8v1.0h-0.8zM20.0 50h0.8v1.0h-0.8zM12.0 52h0.8v1.0h-0.8zM13.0 52h0.8v1.0h-0.8zM14.0 52h0.8v1.0h-0.8zM15.0 52h0.8v1.0h-0.8zM16.0 52h0.8v1.0h-0.8zM17.0 52h0.8v1.0h-0.8zM18.0 52h0.8v1.0h-0.8zM19.0 52h0.8v1.0h-0.8zM20.0 52h0.8v1.0h-0.8zM12.0 54h0.8v1.0h-0.8zM13.0 54h0.8v1.0h-0.8zM14.0 54h0.8v1.0h-0.8zM12.0 56h0.8v1.0h-0.8zM13.0 56h0.8v1.0h-0.8zM14.0 56h0.8v1.0h-0.8zM15.0 56h0.8v1.0h-0.8zM16.0 56h0.8v1.0h-0.8zM17.0 56h0.8v1.0h-0.8zM18.0 56h0.8v1.0h-0.8zM19.0 56h0.8v1.0h-0.8zM20.0 56h0.8v1.0h-0.8zM21.0 56h0.8v1.0h-0.8zM12.0 58h0.8v1.0h-0.8zM13.0 58h0.8v1.0h-0.8zM14.0 58h0.8v1.0h-0.8zM15.0 58h0.8v1.0h-0.8zM16.0 58h0.8v1.0h-0.8zM17.0 58h0.8v1.0h-0.8zM18.0 58h0.8v1.0h-0.8zM19.0 58h0.8v1.0h-0.8zM20.0 58h0.8v1.0h-0.8zM21.0 58h0.8v1.0h-0.8zM12.0 74h0.8v1.0h-0.8zM13.0 74h0.8v1.0h-0.8zM14.0 74h0.8v1.0h-0.8zM15.0 74h0.8v1.0h-0.8zM16.0 74h0.8v1.0h-0.8zM17.0 74h0.8v1.0h-0.8zM18.0 74h0.8v1.0h-0.8zM19.0 74h0.8v1.0h-0.8zM20.0 74h0.8v1.0h-0.8zM12.0 76h0.8v1.0h-0.8zM13.0 76h0.8v1.0h-0.8zM14.0 76h0.8v1.0h-0.8zM15.0 76h0.8v1.0h-0.8zM16.0 76h0.8v1.0h-0.8zM17.0 76h0.8v1.0h-0.8zM18.0 76h0.8v1.0h-0.8zM19.0 76h0.8v1.0h-0.8zM20.0 76h0.8v1.0h-0.8zM12.0 78h0.8v1.0h-0.8zM13.0 78h0.8v1.0h-0.8zM14.0 78h0.8v1.0h-0.8zM15.0 78h0.8v1.0h-0.8zM16.0 78h0.8v1.0h-0.8zM17.0 78h0.8v1.0h-0.8zM18.0 78h0.8v1.0h-0.8zM19.0 78h0.8v1.0h-0.8zM20.0 78h0.8v1.0h-0.8zM12.0 80h0.8v1.0h-0.8zM13.0 80h0.8v1.0h-0.8zM14.0 80h0.8v1.0h-0.8zM12.0 82h0.8v1.0h-0.8zM13.0 82h0.8v1.0h-0.8zM14.0 82h0.8v1.0h-0.8zM15.0 82h0.8v1.0h-0.8zM16.0 82h0.8v1.0h-0.8zM17.0 82h0.8v1.0h-0.8zM18.0 82h0.8v1.0h-0.8zM19.0 82h0.8v1.0h-0.8zM20.0 82h0.8v1.0h-0.8zM21.0 82h0.8v1.0h-0.8zM12.0 84h0.8v1.0h-0.8zM13.0 84h0.8v1.0h-0.8zM14.0 84h0.8v1.0h-0.8zM15.0 84h0.8v1.0h-0.8zM16.0 84h0.8v1.0h-0.8zM17.0 84h0.8v1.0h-0.8zM18.0 84h0.8v1.0h-0.8zM19.0 84h0.8v1.0h-0.8zM20.0 84h0.8v1.0h-0.8zM21.0 84h0.8v1.0h-0.8zM12.0 86h0.8v1.0h-0.8zM13.0 86h0.8v1.0h-0.8zM14.0 86h0.8v1.0h-0.8zM15.0 86h0.8v1.0h-0.8zM16.0 86h0.8v1.0h-0.8zM17.0 86h0.8v1.0h-0.8zM18.0 86h0.8v1.0h-0.8zM19.0 86h0.8v1.0h-0.8zM20.0 86h0.8v1.0h-0.8zM21.0 86h0.8v1.0h-0.8zM13.0 102h0.8v1.0h-0.8zM14.0 102h0.8v1.0h-0.8zM15.0 102h0.8v1.0h-0.8zM16.0 102h0.8v1.0h-0.8zM17.0 102h0.8v1.0h-0.8zM18.0 102h0.8v1.0h-0.8zM19.0 102h0.8v1.0h-0.8zM20.0 102h0.8v1.0h-0.8zM21.0 102h0.8v1.0h-0.8zM12.0 104h0.8v1.0h-0.8zM13.0 104h0.8v1.0h-0.8zM14.0 104h0.8v1.0h-0.8zM15.0 104h0.8v1.0h-0.8zM16.0 104h0.8v1.0h-0.8zM17.0 104h0.8v1.0h-0.8zM18.0 104h0.8v1.0h-0.8zM19.0 104h0.8v1.0h-0.8zM20.0 104h0.8v1.0h-0.8zM14.0 120h0.8v1.0h-0.8zM15.0 120h0.8v1.0h-0.8zM16.0 120h0.8v1.0h-0.8zM17.0 120h0.8v1.0h-0.8zM18.0 120h0.8v1.0h-0.8zM19.0 120h0.8v1.0h-0.8zM20.0 120h0.8v1.0h-0.8zM21.0 120h0.8v1.0h-0.8zM22.0 120h0.8v1.0h-0.8zM13.0 122h0.8v1.0h-0.8zM14.0 122h0.8v1.0h-0.8zM15.0 122h0.8v1.0h-0.8zM16.0 122h0.8v1.0h-0.8zM17.0 122h0.8v1.0h-0.8zM18.0 122h0.8v1.0h-0.8zM19.0 122h0.8v1.0h-0.8zM20.0 122h0.8v1.0h-0.8zM21.0 122h0.8v1.0h-0.8zM13.0 124h0.8v1.0h-0.8zM14.0 124h0.8v1.0h-0.8zM15.0 124h0.8v1.0h-0.8zM16.0 124h0.8v1.0h-0.8zM17.0 124h0.8v1.0h-0.8zM18.0 124h0.8v1.0h-0.8zM19.0 124h0.8v1.0h-0.8zM20.0 124h0.8v1.0h-0.8zM21.0 124h0.8v1.0h-0.8zM13.0 126h0.8v1.0h-0.8zM14.0 126h0.8v1.0h-0.8zM15.0 126h0.8v1.0h-0.8zM13.0 128h0.8v1.0h-0.8zM14.0 128h0.8v1.0h-0.8zM15.0 128h0.8v1.0h-0.8zM16.0 128h0.8v1.0h-0.8zM17.0 128h0.8v1.0h-0.8zM18.0 128h0.8v1.0h-0.8zM19.0 128h0.8v1.0h-0.8zM20.0 128h0.8v1.0h-0.8zM21.0 128h0.8v1.0h-0.8zM22.0 128h0.8v1.0h-0.8zM13.0 130h0.8v1.0h-0.8zM14.0 130h0.8v1.0h-0.8zM15.0 130h0.8v1.0h-0.8zM16.0 130h0.8v1.0h-0.8zM17.0 130h0.8v1.0h-0.8zM18.0 130h0.8v1.0h-0.8zM19.0 130h0.8v1.0h-0.8zM20.0 130h0.8v1.0h-0.8zM21.0 130h0.8v1.0h-0.8zM22.0 130h0.8v1.0h-0.8zM13.0 132h0.8v1.0h-0.8zM14.0 132h0.8v1.0h-0.8zM15.0 132h0.8v1.0h-0.8zM16.0 132h0.8v1.0h-0.8zM17.0 132h0.8v1.0h-0.8zM18.0 132h0.8v1.0h-0.8zM19.0 132h0.8v1.0h-0.8zM20.0 132h0.8v1.0h-0.8zM21.0 132h0.8v1.0h-0.8zM22.0 132h0.8v1.0h-0.8zM13.0 134h0.8v1.0h-0.8zM14.0 134h0.8v1.0h-0.8zM15.0 134h0.8v1.0h-0.8zM16.0 134h0.8v1.0h-0.8zM17.0 134h0.8v1.0h-0.8zM18.0 134h0.8v1.0h-0.8zM19.0 134h0.8v1.0h-0.8zM20.0 134h0.8v1.0h-0.8zM21.0 134h0.8v1.0h-0.8zM22.0 134h0.8v1.0h-0.8zM13.0 136h0.8v1.0h-0.8zM14.0 136h0.8v1.0h-0.8zM15.0 136h0.8v1.0h-0.8zM16.0 136h0.8v1.0h-0.8zM17.0 136h0.8v1.0h-0.8zM18.0 136h0.8v1.0h-0.8zM19.0 136h0.8v1.0h-0.8zM20.0 136h0.8v1.0h-0.8zM21.0 136h0.8v1.0h-0.8zM22.0 136h0.8v1.0h-0.8zM13.0 138h0.8v1.0h-0.8zM14.0 138h0.8v1.0h-0.8zM15.0 138h0.8v1.0h-0.8zM16.0 138h0.8v1.0h-0.8zM17.0 138h0.8v1.0h-0.8zM18.0 138h0.8v1.0h-0.8zM19.0 138h0.8v1.0h-0.8zM20.0 138h0.8v1.0h-0.8zM21.0 138h0.8v1.0h-0.8zM22.0 138h0.8v1.0h-0.8zM14.0 156h0.8v1.0h-0.8zM15.0 156h0.8v1.0h-0.8zM16.0 156h0.8v1.0h-0.8zM17.0 156h0.8v1.0h-0.8zM18.0 156h0.8v1.0h-0.8zM19.0 156h0.8v1.0h-0.8zM20.0 156h0.8v1.0h-0.8zM21.0 156h0.8v1.0h-0.8zM22.0 156h0.8v1.0h-0.8zM13.0 158h0.8v1.0h-0.8zM14.0 158h0.8v1.0h-0.8zM15.0 158h0.8v1.0h-0.8zM16.0 158h0.8v1.0h-0.8zM17.0 158h0.8v1.0h-0.8zM18.0 158h0.8v1.0h-0.8zM19.0 158h0.8v1.0h-0.8zM20.0 158h0.8v1.0h-0.8zM21.0 158h0.8v1.0h-0.8zM13.0 160h0.8v1.0h-0.8zM14.0 160h0.8v1.0h-0.8zM15.0 160h0.8v1.0h-0.8zM16.0 160h0.8v1.0h-0.8zM17.0 160h0.8v1.0h-0.8zM18.0 160h0.8v1.0h-0.8zM19.0 160h0.8v1.0h-0.8zM20.0 160h0.8v1.0h-0.8zM21.0 160h0.8v1.0h-0.8zM13.0 162h0.8v1.0h-0.8zM14.0 162h0.8v1.0h-0.8zM15.0 162h0.8v1.0h-0.8zM13.0 164h0.8v1.0h-0.8zM14.0 164h0.8v1.0h-0.8zM15.0 164h0.8v1.0h-0.8zM16.0 164h0.8v1.0h-0.8zM17.0 164h0.8v1.0h-0.8zM18.0 164h0.8v1.0h-0.8zM19.0 164h0.8v1.0h-0.8zM20.0 164h0.8v1.0h-0.8zM21.0 164h0.8v1.0h-0.8zM22.0 164h0.8v1.0h-0.8zM13.0 166h0.8v1.0h-0.8zM14.0 166h0.8v1.0h-0.8zM15.0 166h0.8v1.0h-0.8zM16.0 166h0.8v1.0h-0.8zM17.0 166h0.8v1.0h-0.8zM18.0 166h0.8v1.0h-0.8zM19.0 166h0.8v1.0h-0.8zM20.0 166h0.8v1.0h-0.8zM21.0 166h0.8v1.0h-0.8zM22.0 166h0.8v1.0h-0.8zM13.0 168h0.8v1.0h-0.8zM14.0 168h0.8v1.0h-0.8zM15.0 168h0.8v1.0h-0.8zM16.0 168h0.8v1.0h-0.8zM17.0 168h0.8v1.0h-0.8zM18.0 168h0.8v1.0h-0.8zM19.0 168h0.8v1.0h-0.8zM20.0 168h0.8v1.0h-0.8zM21.0 168h0.8v1.0h-0.8zM22.0 168h0.8v1.0h-0.8zM13.0 170h0.8v1.0h-0.8zM14.0 170h0.8v1.0h-0.8zM15.0 170h0.8v1.0h-0.8zM16.0 170h0.8v1.0h-0.8zM17.0 170h0.8v1.0h-0.8zM18.0 170h0.8v1.0h-0.8zM19.0 170h0.8v1.0h-0.8zM20.0 170h0.8v1.0h-0.8zM21.0 170h0.8v1.0h-0.8zM22.0 170h0.8v1.0h-0.8zM13.0 172h0.8v1.0h-0.8zM14.0 172h0.8v1.0h-0.8zM15.0 172h0.8v1.0h-0.8zM16.0 172h0.8v1.0h-0.8zM17.0 172h0.8v1.0h-0.8zM18.0 172h0.8v1.0h-0.8zM19.0 172h0.8v1.0h-0.8zM20.0 172h0.8v1.0h-0.8zM21.0 172h0.8v1.0h-0.8zM22.0 172h0.8v1.0h-0.8zM13.0 174h0.8v1.0h-0.8zM14.0 174h0.8v1.0h-0.8zM15.0 174h0.8v1.0h-0.8zM16.0 174h0.8v1.0h-0.8zM17.0 174h0.8v1.0h-0.8zM18.0 174h0.8v1.0h-0.8zM19.0 174h0.8v1.0h-0.8zM20.0 174h0.8v1.0h-0.8zM21.0 174h0.8v1.0h-0.8zM22.0 174h0.8v1.0h-0.8zM12.0 190h0.8v1.0h-0.8zM13.0 190h0.8v1.0h-0.8zM14.0 190h0.8v1.0h-0.8zM15.0 190h0.8v1.0h-0.8zM16.0 190h0.8v1.0h-0.8zM17.0 190h0.8v1.0h-0.8zM18.0 190h0.8v1.0h-0.8zM19.0 190h0.8v1.0h-0.8zM20.0 190h0.8v1.0h-0.8zM12.0 192h0.8v1.0h-0.8zM13.0 192h0.8v1.0h-0.8zM14.0 192h0.8v1.0h-0.8zM15.0 192h0.8v1.0h-0.8zM16.0 192h0.8v1.0h-0.8zM17.0 192h0.8v1.0h-0.8zM18.0 192h0.8v1.0h-0.8zM19.0 192h0.8v1.0h-0.8zM20.0 192h0.8v1.0h-0.8zM12.0 194h0.8v1.0h-0.8zM13.0 194h0.8v1.0h-0.8zM14.0 194h0.8v1.0h-0.8zM15.0 194h0.8v1.0h-0.8zM16.0 194h0.8v1.0h-0.8zM17.0 194h0.8v1.0h-0.8zM18.0 194h0.8v1.0h-0.8zM19.0 194h0.8v1.0h-0.8zM20.0 194h0.8v1.0h-0.8zM12.0 196h0.8v1.0h-0.8zM13.0 196h0.8v1.0h-0.8zM14.0 196h0.8v1.0h-0.8zM12.0 198h0.8v1.0h-0.8zM13.0 198h0.8v1.0h-0.8zM14.0 198h0.8v1.0h-0.8zM15.0 198h0.8v1.0h-0.8zM16.0 198h0.8v1.0h-0.8zM17.0 198h0.8v1.0h-0.8zM18.0 198h0.8v1.0h-0.8zM19.0 198h0.8v1.0h-0.8zM20.0 198h0.8v1.0h-0.8zM21.0 198h0.8v1.0h-0.8zM12.0 200h0.8v1.0h-0.8zM13.0 200h0.8v1.0h-0.8zM14.0 200h0.8v1.0h-0.8zM15.0 200h0.8v1.0h-0.8zM16.0 200h0.8v1.0h-0.8zM17.0 200h0.8v1.0h-0.8zM18.0 200h0.8v1.0h-0.8zM19.0 200h0.8v1.0h-0.8zM20.0 200h0.8v1.0h-0.8zM21.0 200h0.8v1.0h-0.8zM12.0 202h0.8v1.0h-0.8zM13.0 202h0.8v1.0h-0.8zM14.0 202h0.8v1.0h-0.8zM15.0 202h0.8v1.0h-0.8zM16.0 202h0.8v1.0h-0.8zM17.0 202h0.8v1.0h-0.8zM18.0 202h0.8v1.0h-0.8zM19.0 202h0.8v1.0h-0.8zM20.0 202h0.8v1.0h-0.8zM21.0 202h0.8v1.0h-0.8zM12.0 204h0.8v1.0h-0.8zM13.0 204h0.8v1.0h-0.8zM14.0 204h0.8v1.0h-0.8zM15.0 204h0.8v1.0h-0.8zM16.0 204h0.8v1.0h-0.8zM17.0 204h0.8v1.0h-0.8zM18.0 204h0.8v1.0h-0.8zM19.0 204h0.8v1.0h-0.8zM20.0 204h0.8v1.0h-0.8zM21.0 204h0.8v1.0h-0.8zM12.0 206h0.8v1.0h-0.8zM13.0 206h0.8v1.0h-0.8zM14.0 206h0.8v1.0h-0.8zM15.0 206h0.8v1.0h-0.8zM16.0 206h0.8v1.0h-0.8zM17.0 206h0.8v1.0h-0.8zM18.0 206h0.8v1.0h-0.8zM19.0 206h0.8v1.0h-0.8zM20.0 206h0.8v1.0h-0.8zM21.0 206h0.8v1.0h-0.8zM12.0 208h0.8v1.0h-0.8zM13.0 208h0.8v1.0h-0.8zM14.0 208h0.8v1.0h-0.8zM15.0 208h0.8v1.0h-0.8zM16.0 208h0.8v1.0h-0.8zM17.0 208h0.8v1.0h-0.8zM18.0 208h0.8v1.0h-0.8zM19.0 208h0.8v1.0h-0.8zM20.0 208h0.8v1.0h-0.8zM21.0 208h0.8v1.0h-0.8zM2.0 218h0.8v1.0h-0.8zM3.0 218h0.8v1.0h-0.8zM4.0 218h0.8v1.0h-0.8zM5.0 218h0.8v1.0h-0.8zM6.0 218h0.8v1.0h-0.8zM7.0 218h0.8v1.0h-0.8zM8.0 218h0.8v1.0h-0.8zM9.0 218h0.8v1.0h-0.8zM10.0 218h0.8v1.0h-0.8zM11.0 218h0.8v1.0h-0.8zM2.0 220h0.8v1.0h-0.8zM3.0 220h0.8v1.0h-0.8zM4.0 220h0.8v1.0h-0.8zM5.0 220h0.8v1.0h-0.8zM6.0 220h0.8v1.0h-0.8zM7.0 220h0.8v1.0h-0.8zM8.0 220h0.8v1.0h-0.8zM9.0 220h0.8v1.0h-0.8zM10.0 220h0.8v1.0h-0.8zM11.0 220h0.8v1.0h-0.8zM2.0 222h0.8v1.0h-0.8zM3.0 222h0.8v1.0h-0.8zM4.0 222h0.8v1.0h-0.8zM5.0 222h0.8v1.0h-0.8zM6.0 222h0.8v1.0h-0.8zM7.0 222h0.8v1.0h-0.8zM8.0 222h0.8v1.0h-0.8zM9.0 222h0.8v1.0h-0.8zM10.0 222h0.8v1.0h-0.8zM11.0 222h0.8v1.0h-0.8zM2.0 240h0.8v1.0h-0.8zM3.0 240h0.8v1.0h-0.8zM4.0 240h0.8v1.0h-0.8zM5.0 240h0.8v1.0h-0.8zM6.0 240h0.8v1.0h-0.8zM7.0 240h0.8v1.0h-0.8zM8.0 240h0.8v1.0h-0.8zM9.0 240h0.8v1.0h-0.8zM10.0 240h0.8v1.0h-0.8zM11.0 240h0.8v1.0h-0.8zM2.0 242h0.8v1.0h-0.8zM3.0 242h0.8v1.0h-0.8zM4.0 242h0.8v1.0h-0.8zM5.0 242h0.8v1.0h-0.8zM6.0 242h0.8v1.0h-0.8zM7.0 242h0.8v1.0h-0.8zM8.0 242h0.8v1.0h-0.8zM9.0 242h0.8v1.0h-0.8zM10.0 242h0.8v1.0h-0.8zM11.0 242h0.8v1.0h-0.8zM2.0 244h0.8v1.0h-0.8zM3.0 244h0.8v1.0h-0.8zM4.0 244h0.8v1.0h-0.8zM5.0 244h0.8v1.0h-0.8zM6.0 244h0.8v1.0h-0.8zM7.0 244h0.8v1.0h-0.8zM8.0 244h0.8v1.0h-0.8zM9.0 244h0.8v1.0h-0.8zM10.0 244h0.8v1.0h-0.8zM11.0 244h0.8v1.0h-0.8zM2.0 246h0.8v1.0h-0.8zM3.0 246h0.8v1.0h-0.8zM4.0 246h0.8v1.0h-0.8zM5.0 246h0.8v1.0h-0.8zM6.0 246h0.8v1.0h-0.8zM7.0 246h0.8v1.0h-0.8zM8.0 246h0.8v1.0h-0.8zM9.0 246h0.8v1.0h-0.8zM10.0 246h0.8v1.0h-0.8zM11.0 246h0.8v1.0h-0.8zM2.0 266h0.8v1.0h-0.8zM3.0 266h0.8v1.0h-0.8zM4.0 266h0.8v1.0h-0.8zM5.0 266h0.8v1.0h-0.8zM6.0 266h0.8v1.0h-0.8zM7.0 266h0.8v1.0h-0.8zM8.0 266h0.8v1.0h-0.8zM9.0 266h0.8v1.0h-0.8zM10.0 266h0.8v1.0h-0.8zM11.0 266h0.8v1.0h-0.8zM2.0 268h0.8v1.0h-0.8zM3.0 268h0.8v1.0h-0.8zM4.0 268h0.8v1.0h-0.8zM5.0 268h0.8v1.0h-0.8zM6.0 268h0.8v1.0h-0.8zM7.0 268h0.8v1.0h-0.8zM8.0 268h0.8v1.0h-0.8zM9.0 268h0.8v1.0h-0.8zM10.0 268h0.8v1.0h-0.8zM11.0 268h0.8v1.0h-0.8zM2.0 270h0.8v1.0h-0.8zM3.0 270h0.8v1.0h-0.8zM4.0 270h0.8v1.0h-0.8zM5.0 270h0.8v1.0h-0.8zM6.0 270h0.8v1.0h-0.8zM7.0 270h0.8v1.0h-0.8zM8.0 270h0.8v1.0h-0.8zM9.0 270h0.8v1.0h-0.8zM10.0 270h0.8v1.0h-0.8zM11.0 270h0.8v1.0h-0.8zM2.0 288h0.8v1.0h-0.8zM3.0 288h0.8v1.0h-0.8zM4.0 288h0.8v1.0h-0.8zM5.0 288h0.8v1.0h-0.8zM6.0 288h0.8v1.0h-0.8zM7.0 288h0.8v1.0h-0.8zM8.0 288h0.8v1.0h-0.8zM9.0 288h0.8v1.0h-0.8zM10.0 288h0.8v1.0h-0.8zM11.0 288h0.8v1.0h-0.8zM2.0 290h0.8v1.0h-0.8zM3.0 290h0.8v1.0h-0.8zM4.0 290h0.8v1.0h-0.8zM5.0 290h0.8v1.0h-0.8zM6.0 290h0.8v1.0h-0.8zM7.0 290h0.8v1.0h-0.8zM8.0 290h0.8v1.0h-0.8zM9.0 290h0.8v1.0h-0.8zM10.0 290h0.8v1.0h-0.8zM11.0 290h0.8v1.0h-0.8zM2.0 292h0.8v1.0h-0.8zM3.0 292h0.8v1.0h-0.8zM4.0 292h0.8v1.0h-0.8zM5.0 292h0.8v1.0h-0.8zM6.0 292h0.8v1.0h-0.8zM7.0 292h0.8v1.0h-0.8zM8.0 292h0.8v1.0h-0.8zM9.0 292h0.8v1.0h-0.8zM10.0 292h0.8v1.0h-0.8zM11.0 292h0.8v1.0h-0.8zM2.0 310h0.8v1.0h-0.8zM3.0 310h0.8v1.0h-0.8zM4.0 310h0.8v1.0h-0.8zM5.0 310h0.8v1.0h-0.8zM6.0 310h0.8v1.0h-0.8zM7.0 310h0.8v1.0h-0.8zM8.0 310h0.8v1.0h-0.8zM9.0 310h0.8v1.0h-0.8zM10.0 310h0.8v1.0h-0.8zM11.0 310h0.8v1.0h-0.8zM2.0 312h0.8v1.0h-0.8zM3.0 312h0.8v1.0h-0.8zM4.0 312h0.8v1.0h-0.8zM5.0 312h0.8v1.0h-0.8zM6.0 312h0.8v1.0h-0.8zM7.0 312h0.8v1.0h-0.8zM8.0 312h0.8v1.0h-0.8zM9.0 312h0.8v1.0h-0.8zM10.0 312h0.8v1.0h-0.8zM11.0 312h0.8v1.0h-0.8zM2.0 328h0.8v1.0h-0.8zM3.0 328h0.8v1.0h-0.8zM4.0 328h0.8v1.0h-0.8zM5.0 328h0.8v1.0h-0.8zM6.0 328h0.8v1.0h-0.8zM7.0 328h0.8v1.0h-0.8zM8.0 328h0.8v1.0h-0.8zM9.0 328h0.8v1.0h-0.8zM10.0 328h0.8v1.0h-0.8zM11.0 328h0.8v1.0h-0.8zM2.0 330h0.8v1.0h-0.8zM3.0 330h0.8v1.0h-0.8zM4.0 330h0.8v1.0h-0.8zM5.0 330h0.8v1.0h-0.8zM6.0 330h0.8v1.0h-0.8zM7.0 330h0.8v1.0h-0.8zM8.0 330h0.8v1.0h-0.8zM9.0 330h0.8v1.0h-0.8zM10.0 330h0.8v1.0h-0.8zM11.0 330h0.8v1.0h-0.8zM2.0 332h0.8v1.0h-0.8zM3.0 332h0.8v1.0h-0.8zM4.0 332h0.8v1.0h-0.8zM5.0 332h0.8v1.0h-0.8zM6.0 332h0.8v1.0h-0.8zM7.0 332h0.8v1.0h-0.8zM8.0 332h0.8v1.0h-0.8zM9.0 332h0.8v1.0h-0.8zM10.0 332h0.8v1.0h-0.8zM11.0 332h0.8v1.0h-0.8zM2.0 334h0.8v1.0h-0.8zM3.0 334h0.8v1.0h-0.8zM4.0 334h0.8v1.0h-0.8zM5.0 334h0.8v1.0h-0.8zM6.0 334h0.8v1.0h-0.8zM7.0 334h0.8v1.0h-0.8zM8.0 334h0.8v1.0h-0.8zM9.0 334h0.8v1.0h-0.8zM10.0 334h0.8v1.0h-0.8zM11.0 334h0.8v1.0h-0.8zM2.0 336h0.8v1.0h-0.8zM3.0 336h0.8v1.0h-0.8zM4.0 336h0.8v1.0h-0.8zM5.0 336h0.8v1.0h-0.8zM6.0 336h0.8v1.0h-0.8zM7.0 336h0.8v1.0h-0.8zM8.0 336h0.8v1.0h-0.8zM9.0 336h0.8v1.0h-0.8zM10.0 336h0.8v1.0h-0.8zM11.0 336h0.8v1.0h-0.8zM2.0 358h0.8v1.0h-0.8zM3.0 358h0.8v1.0h-0.8zM4.0 358h0.8v1.0h-0.8zM5.0 358h0.8v1.0h-0.8zM6.0 358h0.8v1.0h-0.8zM7.0 358h0.8v1.0h-0.8zM8.0 358h0.8v1.0h-0.8zM9.0 358h0.8v1.0h-0.8zM10.0 358h0.8v1.0h-0.8zM11.0 358h0.8v1.0h-0.8zM2.0 360h0.8v1.0h-0.8zM3.0 360h0.8v1.0h-0.8zM4.0 360h0.8v1.0h-0.8zM5.0 360h0.8v1.0h-0.8zM6.0 360h0.8v1.0h-0.8zM7.0 360h0.8v1.0h-0.8zM8.0 360h0.8v1.0h-0.8zM9.0 360h0.8v1.0h-0.8zM10.0 360h0.8v1.0h-0.8zM11.0 360h0.8v1.0h-0.8zM2.0 362h0.8v1.0h-0.8zM3.0 362h0.8v1.0h-0.8zM4.0 362h0.8v1.0h-0.8zM5.0 362h0.8v1.0h-0.8zM6.0 362h0.8v1.0h-0.8zM7.0 362h0.8v1.0h-0.8zM8.0 362h0.8v1.0h-0.8zM9.0 362h0.8v1.0h-0.8zM10.0 362h0.8v1.0h-0.8zM11.0 362h0.8v1.0h-0.8zM2.0 364h0.8v1.0h-0.8zM3.0 364h0.8v1.0h-0.8zM4.0 364h0.8v1.0h-0.8zM5.0 364h0.8v1.0h-0.8zM6.0 364h0.8v1.0h-0.8zM7.0 364h0.8v1.0h-0.8zM8.0 364h0.8v1.0h-0.8zM9.0 364h0.8v1.0h-0.8zM10.0 364h0.8v1.0h-0.8zM11.0 364h0.8v1.0h-0.8zM2.0 366h0.8v1.0h-0.8zM3.0 366h0.8v1.0h-0.8zM4.0 366h0.8v1.0h-0.8zM5.0 366h0.8v1.0h-0.8zM6.0 366h0.8v1.0h-0.8zM7.0 366h0.8v1.0h-0.8zM8.0 366h0.8v1.0h-0.8zM9.0 366h0.8v1.0h-0.8zM10.0 366h0.8v1.0h-0.8zM11.0 366h0.8v1.0h-0.8zM2.0 368h0.8v1.0h-0.8zM3.0 368h0.8v1.0h-0.8zM4.0 368h0.8v1.0h-0.8zM5.0 368h0.8v1.0h-0.8zM6.0 368h0.8v1.0h-0.8zM7.0 368h0.8v1.0h-0.8zM8.0 368h0.8v1.0h-0.8zM9.0 368h0.8v1.0h-0.8zM10.0 368h0.8v1.0h-0.8zM11.0 368h0.8v1.0h-0.8zM2.0 370h0.8v1.0h-0.8zM3.0 370h0.8v1.0h-0.8zM4.0 370h0.8v1.0h-0.8zM5.0 370h0.8v1.0h-0.8zM6.0 370h0.8v1.0h-0.8zM7.0 370h0.8v1.0h-0.8zM8.0 370h0.8v1.0h-0.8zM9.0 370h0.8v1.0h-0.8zM10.0 370h0.8v1.0h-0.8zM11.0 370h0.8v1.0h-0.8zM2.0 372h0.8v1.0h-0.8zM3.0 372h0.8v1.0h-0.8zM4.0 372h0.8v1.0h-0.8zM5.0 372h0.8v1.0h-0.8zM6.0 372h0.8v1.0h-0.8zM7.0 372h0.8v1.0h-0.8zM8.0 372h0.8v1.0h-0.8zM9.0 372h0.8v1.0h-0.8zM10.0 372h0.8v1.0h-0.8zM11.0 372h0.8v1.0h-0.8zM2.0 374h0.8v1.0h-0.8zM3.0 374h0.8v1.0h-0.8zM4.0 374h0.8v1.0h-0.8zM5.0 374h0.8v1.0h-0.8zM6.0 374h0.8v1.0h-0.8zM7.0 374h0.8v1.0h-0.8zM8.0 374h0.8v1.0h-0.8zM9.0 374h0.8v1.0h-0.8zM10.0 374h0.8v1.0h-0.8zM11.0 374h0.8v1.0h-0.8zM2.0 404h0.8v1.0h-0.8zM3.0 404h0.8v1.0h-0.8zM4.0 404h0.8v1.0h-0.8zM5.0 404h0.8v1.0h-0.8zM6.0 404h0.8v1.0h-0.8zM7.0 404h0.8v1.0h-0.8zM8.0 404h0.8v1.0h-0.8zM9.0 404h0.8v1.0h-0.8zM10.0 404h0.8v1.0h-0.8zM11.0 404h0.8v1.0h-0.8zM2.0 406h0.8v1.0h-0.8zM3.0 406h0.8v1.0h-0.8zM4.0 406h0.8v1.0h-0.8zM5.0 406h0.8v1.0h-0.8zM6.0 406h0.8v1.0h-0.8zM7.0 406h0.8v1.0h-0.8zM8.0 406h0.8v1.0h-0.8zM9.0 406h0.8v1.0h-0.8zM10.0 406h0.8v1.0h-0.8zM11.0 406h0.8v1.0h-0.8zM2.0 408h0.8v1.0h-0.8zM3.0 408h0.8v1.0h-0.8zM4.0 408h0.8v1.0h-0.8zM5.0 408h0.8v1.0h-0.8zM6.0 408h0.8v1.0h-0.8zM7.0 408h0.8v1.0h-0.8zM8.0 408h0.8v1.0h-0.8zM9.0 408h0.8v1.0h-0.8zM10.0 408h0.8v1.0h-0.8zM11.0 408h0.8v1.0h-0.8zM2.0 410h0.8v1.0h-0.8zM3.0 410h0.8v1.0h-0.8zM4.0 410h0.8v1.0h-0.8zM5.0 410h0.8v1.0h-0.8zM6.0 410h0.8v1.0h-0.8zM7.0 410h0.8v1.0h-0.8zM8.0 410h0.8v1.0h-0.8zM9.0 410h0.8v1.0h-0.8zM10.0 410h0.8v1.0h-0.8zM11.0 410h0.8v1.0h-0.8zM2.0 412h0.8v1.0h-0.8zM3.0 412h0.8v1.0h-0.8zM4.0 412h0.8v1.0h-0.8zM5.0 412h0.8v1.0h-0.8zM6.0 412h0.8v1.0h-0.8zM7.0 412h0.8v1.0h-0.8zM8.0 412h0.8v1.0h-0.8zM9.0 412h0.8v1.0h-0.8zM10.0 412h0.8v1.0h-0.8zM11.0 412h0.8v1.0h-0.8zM2.0 414h0.8v1.0h-0.8zM3.0 414h0.8v1.0h-0.8zM4.0 414h0.8v1.0h-0.8zM5.0 414h0.8v1.0h-0.8zM6.0 414h0.8v1.0h-0.8zM7.0 414h0.8v1.0h-0.8zM8.0 414h0.8v1.0h-0.8zM9.0 414h0.8v1.0h-0.8zM10.0 414h0.8v1.0h-0.8zM11.0 414h0.8v1.0h-0.8zM2.0 438h0.8v1.0h-0.8zM3.0 438h0.8v1.0h-0.8zM4.0 438h0.8v1.0h-0.8zM5.0 438h0.8v1.0h-0.8zM6.0 438h0.8v1.0h-0.8zM7.0 438h0.8v1.0h-0.8zM8.0 438h0.8v1.0h-0.8zM9.0 438h0.8v1.0h-0.8zM10.0 438h0.8v1.0h-0.8zM11.0 438h0.8v1.0h-0.8zM2.0 440h0.8v1.0h-0.8zM3.0 440h0.8v1.0h-0.8zM4.0 440h0.8v1.0h-0.8zM5.0 440h0.8v1.0h-0.8zM6.0 440h0.8v1.0h-0.8zM7.0 440h0.8v1.0h-0.8zM8.0 440h0.8v1.0h-0.8zM9.0 440h0.8v1.0h-0.8zM10.0 440h0.8v1.0h-0.8zM11.0 440h0.8v1.0h-0.8zM2.0 442h0.8v1.0h-0.8zM3.0 442h0.8v1.0h-0.8zM4.0 442h0.8v1.0h-0.8zM5.0 442h0.8v1.0h-0.8zM6.0 442h0.8v1.0h-0.8zM7.0 442h0.8v1.0h-0.8zM8.0 442h0.8v1.0h-0.8zM9.0 442h0.8v1.0h-0.8zM10.0 442h0.8v1.0h-0.8zM11.0 442h0.8v1.0h-0.8zM2.0 444h0.8v1.0h-0.8zM3.0 444h0.8v1.0h-0.8zM4.0 444h0.8v1.0h-0.8zM5.0 444h0.8v1.0h-0.8zM6.0 444h0.8v1.0h-0.8zM7.0 444h0.8v1.0h-0.8zM8.0 444h0.8v1.0h-0.8zM9.0 444h0.8v1.0h-0.8zM10.0 444h0.8v1.0h-0.8zM11.0 444h0.8v1.0h-0.8zM2.0 446h0.8v1.0h-0.8zM3.0 446h0.8v1.0h-0.8zM4.0 446h0.8v1.0h-0.8zM5.0 446h0.8v1.0h-0.8zM6.0 446h0.8v1.0h-0.8zM7.0 446h0.8v1.0h-0.8zM8.0 446h0.8v1.0h-0.8zM9.0 446h0.8v1.0h-0.8zM10.0 446h0.8v1.0h-0.8zM11.0 446h0.8v1.0h-0.8zM2.0 468h0.8v1.0h-0.8zM3.0 468h0.8v1.0h-0.8zM4.0 468h0.8v1.0h-0.8zM5.0 468h0.8v1.0h-0.8zM6.0 468h0.8v1.0h-0.8zM7.0 468h0.8v1.0h-0.8zM8.0 468h0.8v1.0h-0.8zM9.0 468h0.8v1.0h-0.8zM10.0 468h0.8v1.0h-0.8zM11.0 468h0.8v1.0h-0.8zM2.0 470h0.8v1.0h-0.8zM3.0 470h0.8v1.0h-0.8zM4.0 470h0.8v1.0h-0.8zM5.0 470h0.8v1.0h-0.8zM6.0 470h0.8v1.0h-0.8zM7.0 470h0.8v1.0h-0.8zM8.0 470h0.8v1.0h-0.8zM9.0 470h0.8v1.0h-0.8zM10.0 470h0.8v1.0h-0.8zM11.0 470h0.8v1.0h-0.8zM2.0 472h0.8v1.0h-0.8zM3.0 472h0.8v1.0h-0.8zM4.0 472h0.8v1.0h-0.8zM5.0 472h0.8v1.0h-0.8zM6.0 472h0.8v1.0h-0.8zM7.0 472h0.8v1.0h-0.8zM8.0 472h0.8v1.0h-0.8zM9.0 472h0.8v1.0h-0.8zM10.0 472h0.8v1.0h-0.8zM11.0 472h0.8v1.0h-0.8zM2.0 474h0.8v1.0h-0.8zM3.0 474h0.8v1.0h-0.8zM4.0 474h0.8v1.0h-0.8zM5.0 474h0.8v1.0h-0.8zM6.0 474h0.8v1.0h-0.8zM7.0 474h0.8v1.0h-0.8zM8.0 474h0.8v1.0h-0.8zM9.0 474h0.8v1.0h-0.8zM10.0 474h0.8v1.0h-0.8zM11.0 474h0.8v1.0h-0.8zM2.0 476h0.8v1.0h-0.8zM3.0 476h0.8v1.0h-0.8zM4.0 476h0.8v1.0h-0.8zM5.0 476h0.8v1.0h-0.8zM6.0 476h0.8v1.0h-0.8zM7.0 476h0.8v1.0h-0.8zM8.0 476h0.8v1.0h-0.8zM9.0 476h0.8v1.0h-0.8zM10.0 476h0.8v1.0h-0.8zM11.0 476h0.8v1.0h-0.8zM2.0 498h0.8v1.0h-0.8zM3.0 498h0.8v1.0h-0.8zM4.0 498h0.8v1.0h-0.8zM5.0 498h0.8v1.0h-0.8zM6.0 498h0.8v1.0h-0.8zM7.0 498h0.8v1.0h-0.8zM8.0 498h0.8v1.0h-0.8zM9.0 498h0.8v1.0h-0.8zM10.0 498h0.8v1.0h-0.8zM11.0 498h0.8v1.0h-0.8zM2.0 500h0.8v1.0h-0.8zM3.0 500h0.8v1.0h-0.8zM4.0 500h0.8v1.0h-0.8zM5.0 500h0.8v1.0h-0.8zM6.0 500h0.8v1.0h-0.8zM7.0 500h0.8v1.0h-0.8zM8.0 500h0.8v1.0h-0.8zM9.0 500h0.8v1.0h-0.8zM10.0 500h0.8v1.0h-0.8zM11.0 500h0.8v1.0h-0.8zM2.0 502h0.8v1.0h-0.8zM3.0 502h0.8v1.0h-0.8zM4.0 502h0.8v1.0h-0.8zM5.0 502h0.8v1.0h-0.8zM6.0 502h0.8v1.0h-0.8zM7.0 502h0.8v1.0h-0.8zM8.0 502h0.8v1.0h-0.8zM9.0 502h0.8v1.0h-0.8zM10.0 502h0.8v1.0h-0.8zM11.0 502h0.8v1.0h-0.8zM2.0 504h0.8v1.0h-0.8zM3.0 504h0.8v1.0h-0.8zM4.0 504h0.8v1.0h-0.8zM5.0 504h0.8v1.0h-0.8zM6.0 504h0.8v1.0h-0.8zM7.0 504h0.8v1.0h-0.8zM8.0 504h0.8v1.0h-0.8zM9.0 504h0.8v1.0h-0.8zM10.0 504h0.8v1.0h-0.8zM11.0 504h0.8v1.0h-0.8zM2.0 506h0.8v1.0h-0.8zM3.0 506h0.8v1.0h-0.8zM4.0 506h0.8v1.0h-0.8zM5.0 506h0.8v1.0h-0.8zM6.0 506h0.8v1.0h-0.8zM7.0 506h0.8v1.0h-0.8zM8.0 506h0.8v1.0h-0.8zM9.0 506h0.8v1.0h-0.8zM10.0 506h0.8v1.0h-0.8zM11.0 506h0.8v1.0h-0.8zM2.0 508h0.8v1.0h-0.8zM3.0 508h0.8v1.0h-0.8zM4.0 508h0.8v1.0h-0.8zM5.0 508h0.8v1.0h-0.8zM6.0 508h0.8v1.0h-0.8zM7.0 508h0.8v1.0h-0.8zM8.0 508h0.8v1.0h-0.8zM9.0 508h0.8v1.0h-0.8zM10.0 508h0.8v1.0h-0.8zM11.0 508h0.8v1.0h-0.8zM2.0 532h0.8v1.0h-0.8zM3.0 532h0.8v1.0h-0.8zM4.0 532h0.8v1.0h-0.8zM5.0 532h0.8v1.0h-0.8zM6.0 532h0.8v1.0h-0.8zM7.0 532h0.8v1.0h-0.8zM8.0 532h0.8v1.0h-0.8zM9.0 532h0.8v1.0h-0.8zM10.0 532h0.8v1.0h-0.8zM11.0 532h0.8v1.0h-0.8zM2.0 534h0.8v1.0h-0.8zM3.0 534h0.8v1.0h-0.8zM4.0 534h0.8v1.0h-0.8zM5.0 534h0.8v1.0h-0.8zM6.0 534h0.8v1.0h-0.8zM7.0 534h0.8v1.0h-0.8zM8.0 534h0.8v1.0h-0.8zM9.0 534h0.8v1.0h-0.8zM10.0 534h0.8v1.0h-0.8zM11.0 534h0.8v1.0h-0.8z"/></svg>
<div class="a" style="left:1232px;top:124.5px;width:11px;height:2.0px;background:#d22a84;"></div>
<div class="a" style="left:1239.5px;top:108px;width:3.5px;height:4.5px;background:#3d9be0;"></div>
<div class="a" style="left:766px;top:292px;width:12px;height:2px;background:#d22a84;"></div>
<div class="a" style="left:1236px;top:273px;width:5px;height:5px;background:#7f8d90;"></div>
<div class="a" style="left:1236px;top:280px;width:5px;height:5px;background:#7f8d90;"></div>
<div class="a" style="left:1240px;top:604.5px;width:3.5px;height:4.2000000000000455px;background:#e0902a;"></div>
<div class="a" style="left:1240px;top:608.7px;width:3.5px;height:10.299999999999955px;background:#5ab0e8;"></div>
</div></body></html>
